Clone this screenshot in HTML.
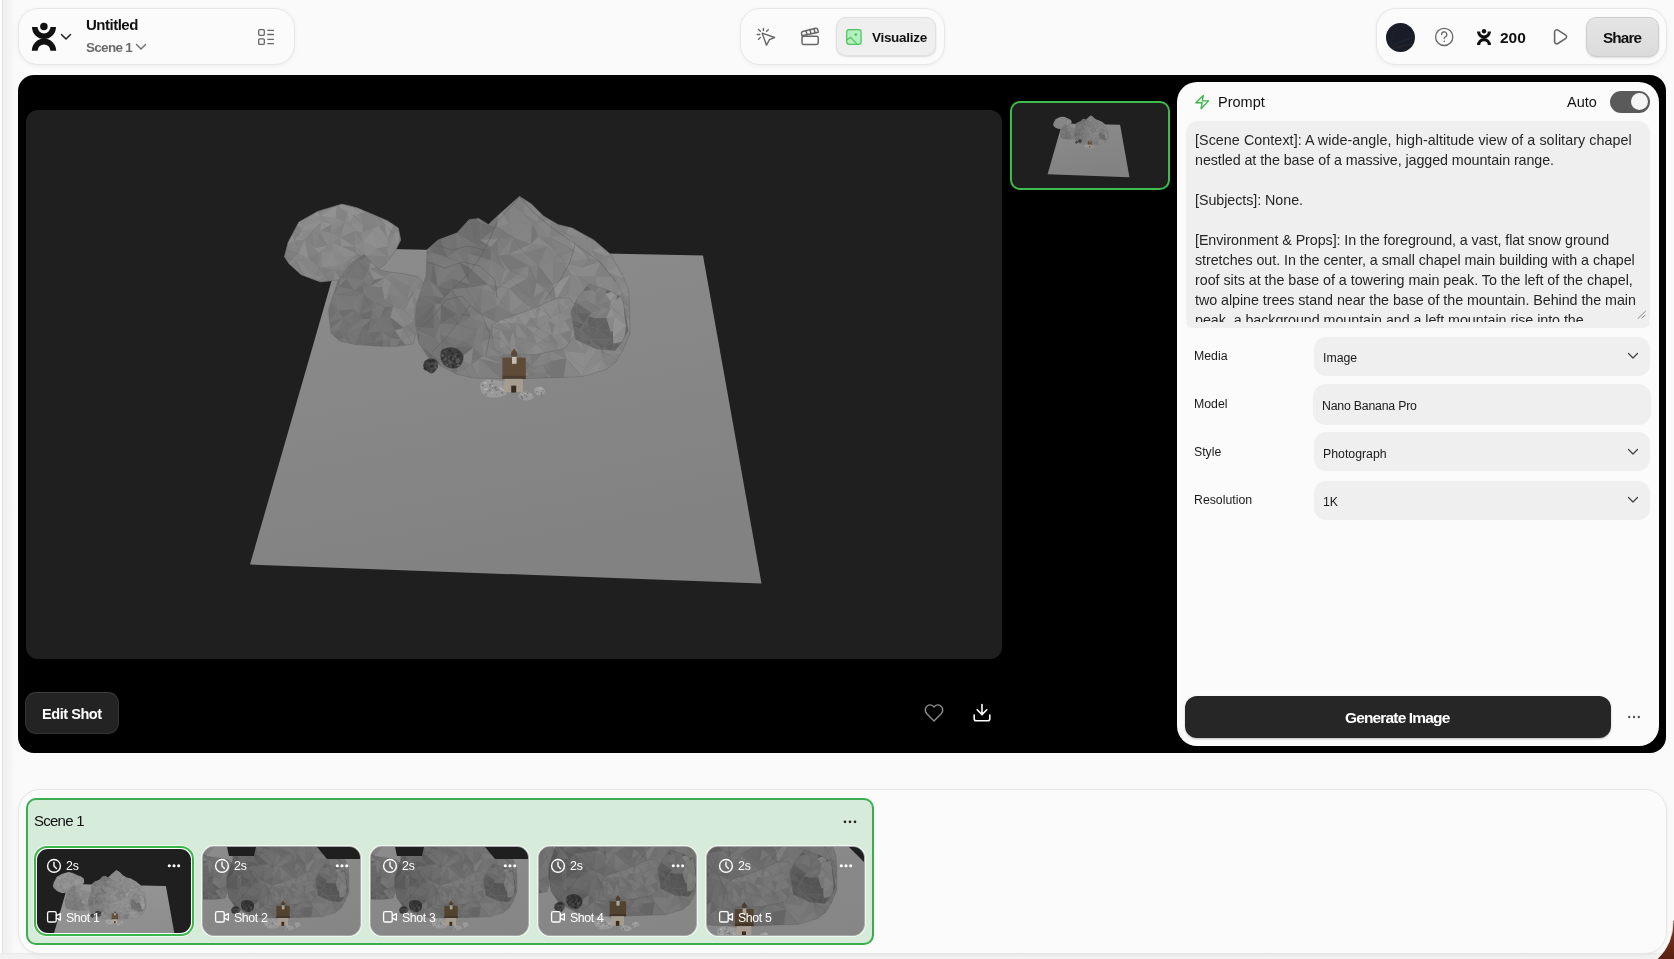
<!DOCTYPE html>
<html><head><meta charset="utf-8">
<style>
*{box-sizing:border-box;margin:0;padding:0}
html,body{width:1674px;height:959px;overflow:hidden;background:#fafafa;font-family:"Liberation Sans",sans-serif;color:#111}
.a{position:absolute;white-space:pre;line-height:1;will-change:transform}
.panel{position:absolute;background:#fbfbfb;border:1px solid #e7e7e7;border-radius:20px;box-shadow:0 1px 4px rgba(0,0,0,.05)}
.sel{position:absolute;left:1314px;width:336px;height:39px;background:#efefef;border-radius:12px}
.lbl{will-change:transform;position:absolute;left:1194px;font-size:12.3px;color:#1a1a1a;line-height:1;margin-top:-1px}
.val{will-change:transform;position:absolute;left:1323px;font-size:12.3px;color:#1a1a1a;line-height:1}
.pt{will-change:transform;position:absolute;left:1195px;font-size:14.3px;color:#262626;white-space:pre;line-height:1}
.shot{position:absolute;top:846px;width:159px;height:90px;border-radius:12px;overflow:hidden;border:1px solid #a8a8a8;background:#888;box-shadow:0 0 0 1px rgba(255,255,255,.6)}
.shot svg{position:absolute;left:0;top:0}
.st{will-change:transform;position:absolute;font-size:12.3px;color:#fff;line-height:1;white-space:pre}
</style></head>
<body>
<svg width="0" height="0" style="position:absolute">
<defs>
<g id="scene">
<linearGradient id="gplane" x1="0" y1="0" x2="0.3" y2="1"><stop offset="0" stop-color="#8c8c8c"/><stop offset="1" stop-color="#828282"/></linearGradient>
<polygon points="341,248 703,255.5 761.5,583.5 250,564.5" fill="url(#gplane)"/>
<clipPath id="cl1"><polygon points="284.4,256.8 288.0,242.4 298.8,222.0 318.0,211.2 342.0,204.0 356.4,207.6 370.8,213.6 387.6,220.8 398.4,228.0 400.8,240.0 394.8,252.0 385.2,264.0 375.6,271.2 354.0,278.4 320.4,282.0 301.2,274.8 289.2,264.0"/></clipPath>
<g clip-path="url(#cl1)">
<polygon points="284.4,256.8 288.0,242.4 298.8,222.0 318.0,211.2 342.0,204.0 356.4,207.6 370.8,213.6 387.6,220.8 398.4,228.0 400.8,240.0 394.8,252.0 385.2,264.0 375.6,271.2 354.0,278.4 320.4,282.0 301.2,274.8 289.2,264.0" fill="#888888"/>
<path d="M272.8 190.9L285.8 190.2L284.8 200.1Z" fill="#8d8d8d"/>
<path d="M272.8 190.9L284.8 200.1L275.7 202.9Z" fill="#8c8c8c"/>
<path d="M285.8 190.2L294.7 192.8L290.4 201.4Z" fill="#8a8a8a"/>
<path d="M285.8 190.2L290.4 201.4L284.8 200.1Z" fill="#8c8c8c"/>
<path d="M294.7 192.8L300.4 194.1L290.4 201.4Z" fill="#929292"/>
<path d="M300.4 194.1L306.0 203.3L290.4 201.4Z" fill="#8c8c8c"/>
<path d="M300.4 194.1L310.2 193.4L312.7 204.8Z" fill="#949494"/>
<path d="M300.4 194.1L312.7 204.8L306.0 203.3Z" fill="#939393"/>
<path d="M310.2 193.4L320.5 190.3L312.7 204.8Z" fill="#878787"/>
<path d="M320.5 190.3L324.0 202.2L312.7 204.8Z" fill="#8c8c8c"/>
<path d="M320.5 190.3L333.7 196.9L337.0 205.8Z" fill="#898989"/>
<path d="M320.5 190.3L337.0 205.8L324.0 202.2Z" fill="#919191"/>
<path d="M333.7 196.9L341.0 191.5L337.0 205.8Z" fill="#8c8c8c"/>
<path d="M341.0 191.5L342.1 204.7L337.0 205.8Z" fill="#848484"/>
<path d="M341.0 191.5L355.5 198.0L342.1 204.7Z" fill="#8c8c8c"/>
<path d="M355.5 198.0L354.6 207.4L342.1 204.7Z" fill="#868686"/>
<path d="M355.5 198.0L365.1 193.1L354.6 207.4Z" fill="#8b8b8b"/>
<path d="M365.1 193.1L366.5 202.1L354.6 207.4Z" fill="#868686"/>
<path d="M365.1 193.1L378.7 189.9L378.7 200.6Z" fill="#888888"/>
<path d="M365.1 193.1L378.7 200.6L366.5 202.1Z" fill="#929292"/>
<path d="M378.7 189.9L387.6 192.1L383.7 206.3Z" fill="#929292"/>
<path d="M378.7 189.9L383.7 206.3L378.7 200.6Z" fill="#8c8c8c"/>
<path d="M387.6 192.1L391.2 190.6L383.7 206.3Z" fill="#858585"/>
<path d="M391.2 190.6L391.3 203.9L383.7 206.3Z" fill="#949494"/>
<path d="M391.2 190.6L402.7 196.8L391.3 203.9Z" fill="#878787"/>
<path d="M402.7 196.8L400.3 205.5L391.3 203.9Z" fill="#898989"/>
<path d="M402.7 196.8L411.5 194.7L416.8 204.7Z" fill="#898989"/>
<path d="M402.7 196.8L416.8 204.7L400.3 205.5Z" fill="#8a8a8a"/>
<path d="M275.7 202.9L284.8 200.1L277.8 212.3Z" fill="#8c8c8c"/>
<path d="M284.8 200.1L286.2 214.8L277.8 212.3Z" fill="#939393"/>
<path d="M284.8 200.1L290.4 201.4L286.2 214.8Z" fill="#8c8c8c"/>
<path d="M290.4 201.4L295.1 213.6L286.2 214.8Z" fill="#919191"/>
<path d="M290.4 201.4L306.0 203.3L295.1 213.6Z" fill="#888888"/>
<path d="M306.0 203.3L307.5 218.0L295.1 213.6Z" fill="#8b8b8b"/>
<path d="M306.0 203.3L312.7 204.8L314.2 215.5Z" fill="#838383"/>
<path d="M306.0 203.3L314.2 215.5L307.5 218.0Z" fill="#8a8a8a"/>
<path d="M312.7 204.8L324.0 202.2L320.4 215.8Z" fill="#838383"/>
<path d="M312.7 204.8L320.4 215.8L314.2 215.5Z" fill="#929292"/>
<path d="M324.0 202.2L337.0 205.8L320.4 215.8Z" fill="#898989"/>
<path d="M337.0 205.8L335.7 218.4L320.4 215.8Z" fill="#929292"/>
<path d="M337.0 205.8L342.1 204.7L347.3 212.1Z" fill="#919191"/>
<path d="M337.0 205.8L347.3 212.1L335.7 218.4Z" fill="#858585"/>
<path d="M342.1 204.7L354.6 207.4L347.3 212.1Z" fill="#909090"/>
<path d="M354.6 207.4L353.4 215.5L347.3 212.1Z" fill="#929292"/>
<path d="M354.6 207.4L366.5 202.1L353.4 215.5Z" fill="#8f8f8f"/>
<path d="M366.5 202.1L360.1 213.7L353.4 215.5Z" fill="#939393"/>
<path d="M366.5 202.1L378.7 200.6L371.4 210.6Z" fill="#898989"/>
<path d="M366.5 202.1L371.4 210.6L360.1 213.7Z" fill="#8a8a8a"/>
<path d="M378.7 200.6L383.7 206.3L380.4 216.4Z" fill="#878787"/>
<path d="M378.7 200.6L380.4 216.4L371.4 210.6Z" fill="#8f8f8f"/>
<path d="M383.7 206.3L391.3 203.9L380.4 216.4Z" fill="#848484"/>
<path d="M391.3 203.9L391.1 211.7L380.4 216.4Z" fill="#878787"/>
<path d="M391.3 203.9L400.3 205.5L403.4 217.3Z" fill="#8b8b8b"/>
<path d="M391.3 203.9L403.4 217.3L391.1 211.7Z" fill="#909090"/>
<path d="M400.3 205.5L416.8 204.7L410.6 213.5Z" fill="#858585"/>
<path d="M400.3 205.5L410.6 213.5L403.4 217.3Z" fill="#8e8e8e"/>
<path d="M277.8 212.3L286.2 214.8L274.8 227.5Z" fill="#8b8b8b"/>
<path d="M286.2 214.8L287.3 227.3L274.8 227.5Z" fill="#888888"/>
<path d="M286.2 214.8L295.1 213.6L287.3 227.3Z" fill="#838383"/>
<path d="M295.1 213.6L292.4 223.2L287.3 227.3Z" fill="#8f8f8f"/>
<path d="M295.1 213.6L307.5 218.0L303.1 227.5Z" fill="#898989"/>
<path d="M295.1 213.6L303.1 227.5L292.4 223.2Z" fill="#8f8f8f"/>
<path d="M307.5 218.0L314.2 215.5L318.5 220.9Z" fill="#8d8d8d"/>
<path d="M307.5 218.0L318.5 220.9L303.1 227.5Z" fill="#8b8b8b"/>
<path d="M314.2 215.5L320.4 215.8L318.5 220.9Z" fill="#8c8c8c"/>
<path d="M320.4 215.8L321.5 221.6L318.5 220.9Z" fill="#898989"/>
<path d="M320.4 215.8L335.7 218.4L332.0 223.9Z" fill="#8b8b8b"/>
<path d="M320.4 215.8L332.0 223.9L321.5 221.6Z" fill="#878787"/>
<path d="M335.7 218.4L347.3 212.1L345.2 221.9Z" fill="#828282"/>
<path d="M335.7 218.4L345.2 221.9L332.0 223.9Z" fill="#8b8b8b"/>
<path d="M347.3 212.1L353.4 215.5L349.9 223.3Z" fill="#919191"/>
<path d="M347.3 212.1L349.9 223.3L345.2 221.9Z" fill="#8a8a8a"/>
<path d="M353.4 215.5L360.1 213.7L349.9 223.3Z" fill="#888888"/>
<path d="M360.1 213.7L363.2 224.6L349.9 223.3Z" fill="#888888"/>
<path d="M360.1 213.7L371.4 210.6L363.2 224.6Z" fill="#828282"/>
<path d="M371.4 210.6L378.5 225.7L363.2 224.6Z" fill="#838383"/>
<path d="M371.4 210.6L380.4 216.4L384.5 225.1Z" fill="#848484"/>
<path d="M371.4 210.6L384.5 225.1L378.5 225.7Z" fill="#858585"/>
<path d="M380.4 216.4L391.1 211.7L396.0 220.0Z" fill="#838383"/>
<path d="M380.4 216.4L396.0 220.0L384.5 225.1Z" fill="#8d8d8d"/>
<path d="M391.1 211.7L403.4 217.3L408.0 226.5Z" fill="#8b8b8b"/>
<path d="M391.1 211.7L408.0 226.5L396.0 220.0Z" fill="#898989"/>
<path d="M403.4 217.3L410.6 213.5L417.8 226.7Z" fill="#929292"/>
<path d="M403.4 217.3L417.8 226.7L408.0 226.5Z" fill="#858585"/>
<path d="M274.8 227.5L287.3 227.3L273.4 233.1Z" fill="#8c8c8c"/>
<path d="M287.3 227.3L280.8 235.2L273.4 233.1Z" fill="#8a8a8a"/>
<path d="M287.3 227.3L292.4 223.2L280.8 235.2Z" fill="#8f8f8f"/>
<path d="M292.4 223.2L290.5 230.1L280.8 235.2Z" fill="#848484"/>
<path d="M292.4 223.2L303.1 227.5L301.8 231.0Z" fill="#858585"/>
<path d="M292.4 223.2L301.8 231.0L290.5 230.1Z" fill="#818181"/>
<path d="M303.1 227.5L318.5 220.9L301.8 231.0Z" fill="#919191"/>
<path d="M318.5 220.9L313.0 230.0L301.8 231.0Z" fill="#8e8e8e"/>
<path d="M318.5 220.9L321.5 221.6L313.0 230.0Z" fill="#919191"/>
<path d="M321.5 221.6L319.9 230.9L313.0 230.0Z" fill="#848484"/>
<path d="M321.5 221.6L332.0 223.9L319.9 230.9Z" fill="#919191"/>
<path d="M332.0 223.9L330.8 232.8L319.9 230.9Z" fill="#808080"/>
<path d="M332.0 223.9L345.2 221.9L330.8 232.8Z" fill="#888888"/>
<path d="M345.2 221.9L340.1 237.4L330.8 232.8Z" fill="#828282"/>
<path d="M345.2 221.9L349.9 223.3L355.4 230.8Z" fill="#858585"/>
<path d="M345.2 221.9L355.4 230.8L340.1 237.4Z" fill="#8b8b8b"/>
<path d="M349.9 223.3L363.2 224.6L355.4 230.8Z" fill="#8d8d8d"/>
<path d="M363.2 224.6L362.2 232.6L355.4 230.8Z" fill="#8e8e8e"/>
<path d="M363.2 224.6L378.5 225.7L362.2 232.6Z" fill="#808080"/>
<path d="M378.5 225.7L373.2 230.6L362.2 232.6Z" fill="#878787"/>
<path d="M378.5 225.7L384.5 225.1L387.5 238.4Z" fill="#808080"/>
<path d="M378.5 225.7L387.5 238.4L373.2 230.6Z" fill="#8e8e8e"/>
<path d="M384.5 225.1L396.0 220.0L387.5 238.4Z" fill="#909090"/>
<path d="M396.0 220.0L394.1 233.9L387.5 238.4Z" fill="#828282"/>
<path d="M396.0 220.0L408.0 226.5L394.1 233.9Z" fill="#838383"/>
<path d="M408.0 226.5L400.7 230.4L394.1 233.9Z" fill="#8f8f8f"/>
<path d="M408.0 226.5L417.8 226.7L413.0 231.9Z" fill="#828282"/>
<path d="M408.0 226.5L413.0 231.9L400.7 230.4Z" fill="#888888"/>
<path d="M273.4 233.1L280.8 235.2L280.1 248.1Z" fill="#858585"/>
<path d="M273.4 233.1L280.1 248.1L277.4 241.0Z" fill="#868686"/>
<path d="M280.8 235.2L290.5 230.1L280.1 248.1Z" fill="#8d8d8d"/>
<path d="M290.5 230.1L294.7 240.8L280.1 248.1Z" fill="#8e8e8e"/>
<path d="M290.5 230.1L301.8 231.0L294.7 240.8Z" fill="#828282"/>
<path d="M301.8 231.0L304.8 239.7L294.7 240.8Z" fill="#8e8e8e"/>
<path d="M301.8 231.0L313.0 230.0L304.8 239.7Z" fill="#898989"/>
<path d="M313.0 230.0L314.7 248.3L304.8 239.7Z" fill="#808080"/>
<path d="M313.0 230.0L319.9 230.9L314.7 248.3Z" fill="#858585"/>
<path d="M319.9 230.9L327.7 245.8L314.7 248.3Z" fill="#818181"/>
<path d="M319.9 230.9L330.8 232.8L327.7 245.8Z" fill="#898989"/>
<path d="M330.8 232.8L332.3 242.8L327.7 245.8Z" fill="#878787"/>
<path d="M330.8 232.8L340.1 237.4L332.3 242.8Z" fill="#888888"/>
<path d="M340.1 237.4L341.4 246.4L332.3 242.8Z" fill="#838383"/>
<path d="M340.1 237.4L355.4 230.8L354.7 246.5Z" fill="#808080"/>
<path d="M340.1 237.4L354.7 246.5L341.4 246.4Z" fill="#8d8d8d"/>
<path d="M355.4 230.8L362.2 232.6L362.9 241.5Z" fill="#838383"/>
<path d="M355.4 230.8L362.9 241.5L354.7 246.5Z" fill="#858585"/>
<path d="M362.2 232.6L373.2 230.6L362.9 241.5Z" fill="#898989"/>
<path d="M373.2 230.6L377.2 248.4L362.9 241.5Z" fill="#8f8f8f"/>
<path d="M373.2 230.6L387.5 238.4L387.6 246.8Z" fill="#8d8d8d"/>
<path d="M373.2 230.6L387.6 246.8L377.2 248.4Z" fill="#8d8d8d"/>
<path d="M387.5 238.4L394.1 233.9L387.6 246.8Z" fill="#858585"/>
<path d="M394.1 233.9L397.3 246.2L387.6 246.8Z" fill="#888888"/>
<path d="M394.1 233.9L400.7 230.4L397.3 246.2Z" fill="#8e8e8e"/>
<path d="M400.7 230.4L401.9 244.2L397.3 246.2Z" fill="#7f7f7f"/>
<path d="M400.7 230.4L413.0 231.9L413.1 239.8Z" fill="#828282"/>
<path d="M400.7 230.4L413.1 239.8L401.9 244.2Z" fill="#8f8f8f"/>
<path d="M277.4 241.0L280.1 248.1L270.2 252.0Z" fill="#8c8c8c"/>
<path d="M280.1 248.1L282.2 255.7L270.2 252.0Z" fill="#858585"/>
<path d="M280.1 248.1L294.7 240.8L298.5 253.5Z" fill="#848484"/>
<path d="M280.1 248.1L298.5 253.5L282.2 255.7Z" fill="#7f7f7f"/>
<path d="M294.7 240.8L304.8 239.7L298.5 253.5Z" fill="#828282"/>
<path d="M304.8 239.7L308.3 258.4L298.5 253.5Z" fill="#8e8e8e"/>
<path d="M304.8 239.7L314.7 248.3L318.5 252.8Z" fill="#898989"/>
<path d="M304.8 239.7L318.5 252.8L308.3 258.4Z" fill="#828282"/>
<path d="M314.7 248.3L327.7 245.8L318.5 252.8Z" fill="#8e8e8e"/>
<path d="M327.7 245.8L321.9 251.5L318.5 252.8Z" fill="#868686"/>
<path d="M327.7 245.8L332.3 242.8L321.9 251.5Z" fill="#898989"/>
<path d="M332.3 242.8L331.7 251.3L321.9 251.5Z" fill="#858585"/>
<path d="M332.3 242.8L341.4 246.4L345.5 257.6Z" fill="#8d8d8d"/>
<path d="M332.3 242.8L345.5 257.6L331.7 251.3Z" fill="#8a8a8a"/>
<path d="M341.4 246.4L354.7 246.5L357.5 253.8Z" fill="#7e7e7e"/>
<path d="M341.4 246.4L357.5 253.8L345.5 257.6Z" fill="#8c8c8c"/>
<path d="M354.7 246.5L362.9 241.5L357.5 253.8Z" fill="#8a8a8a"/>
<path d="M362.9 241.5L365.8 256.7L357.5 253.8Z" fill="#878787"/>
<path d="M362.9 241.5L377.2 248.4L365.8 256.7Z" fill="#8b8b8b"/>
<path d="M377.2 248.4L370.7 255.4L365.8 256.7Z" fill="#888888"/>
<path d="M377.2 248.4L387.6 246.8L388.1 256.5Z" fill="#818181"/>
<path d="M377.2 248.4L388.1 256.5L370.7 255.4Z" fill="#878787"/>
<path d="M387.6 246.8L397.3 246.2L396.7 253.8Z" fill="#888888"/>
<path d="M387.6 246.8L396.7 253.8L388.1 256.5Z" fill="#898989"/>
<path d="M397.3 246.2L401.9 244.2L401.5 256.6Z" fill="#848484"/>
<path d="M397.3 246.2L401.5 256.6L396.7 253.8Z" fill="#7d7d7d"/>
<path d="M401.9 244.2L413.1 239.8L401.5 256.6Z" fill="#878787"/>
<path d="M413.1 239.8L412.9 256.7L401.5 256.6Z" fill="#858585"/>
<path d="M270.2 252.0L282.2 255.7L283.5 268.0Z" fill="#898989"/>
<path d="M270.2 252.0L283.5 268.0L278.6 263.1Z" fill="#888888"/>
<path d="M282.2 255.7L298.5 253.5L283.5 268.0Z" fill="#7e7e7e"/>
<path d="M298.5 253.5L296.4 261.0L283.5 268.0Z" fill="#878787"/>
<path d="M298.5 253.5L308.3 258.4L296.4 261.0Z" fill="#858585"/>
<path d="M308.3 258.4L301.0 260.9L296.4 261.0Z" fill="#7d7d7d"/>
<path d="M308.3 258.4L318.5 252.8L318.0 266.8Z" fill="#7d7d7d"/>
<path d="M308.3 258.4L318.0 266.8L301.0 260.9Z" fill="#858585"/>
<path d="M318.5 252.8L321.9 251.5L318.0 266.8Z" fill="#818181"/>
<path d="M321.9 251.5L321.2 266.9L318.0 266.8Z" fill="#838383"/>
<path d="M321.9 251.5L331.7 251.3L321.2 266.9Z" fill="#8a8a8a"/>
<path d="M331.7 251.3L338.7 265.4L321.2 266.9Z" fill="#8c8c8c"/>
<path d="M331.7 251.3L345.5 257.6L343.1 264.4Z" fill="#888888"/>
<path d="M331.7 251.3L343.1 264.4L338.7 265.4Z" fill="#898989"/>
<path d="M345.5 257.6L357.5 253.8L343.1 264.4Z" fill="#888888"/>
<path d="M357.5 253.8L351.1 259.6L343.1 264.4Z" fill="#828282"/>
<path d="M357.5 253.8L365.8 256.7L351.1 259.6Z" fill="#7e7e7e"/>
<path d="M365.8 256.7L368.6 265.3L351.1 259.6Z" fill="#898989"/>
<path d="M365.8 256.7L370.7 255.4L374.6 267.9Z" fill="#808080"/>
<path d="M365.8 256.7L374.6 267.9L368.6 265.3Z" fill="#858585"/>
<path d="M370.7 255.4L388.1 256.5L383.8 267.3Z" fill="#808080"/>
<path d="M370.7 255.4L383.8 267.3L374.6 267.9Z" fill="#818181"/>
<path d="M388.1 256.5L396.7 253.8L397.3 261.4Z" fill="#878787"/>
<path d="M388.1 256.5L397.3 261.4L383.8 267.3Z" fill="#858585"/>
<path d="M396.7 253.8L401.5 256.6L402.2 262.1Z" fill="#858585"/>
<path d="M396.7 253.8L402.2 262.1L397.3 261.4Z" fill="#888888"/>
<path d="M401.5 256.6L412.9 256.7L402.2 262.1Z" fill="#868686"/>
<path d="M412.9 256.7L412.1 264.8L402.2 262.1Z" fill="#8b8b8b"/>
<path d="M278.6 263.1L283.5 268.0L272.2 273.3Z" fill="#878787"/>
<path d="M283.5 268.0L281.1 277.7L272.2 273.3Z" fill="#7e7e7e"/>
<path d="M283.5 268.0L296.4 261.0L293.1 273.6Z" fill="#808080"/>
<path d="M283.5 268.0L293.1 273.6L281.1 277.7Z" fill="#7d7d7d"/>
<path d="M296.4 261.0L301.0 260.9L305.2 277.6Z" fill="#8a8a8a"/>
<path d="M296.4 261.0L305.2 277.6L293.1 273.6Z" fill="#828282"/>
<path d="M301.0 260.9L318.0 266.8L313.7 277.8Z" fill="#858585"/>
<path d="M301.0 260.9L313.7 277.8L305.2 277.6Z" fill="#898989"/>
<path d="M318.0 266.8L321.2 266.9L324.4 274.3Z" fill="#818181"/>
<path d="M318.0 266.8L324.4 274.3L313.7 277.8Z" fill="#828282"/>
<path d="M321.2 266.9L338.7 265.4L334.6 269.7Z" fill="#858585"/>
<path d="M321.2 266.9L334.6 269.7L324.4 274.3Z" fill="#7d7d7d"/>
<path d="M338.7 265.4L343.1 264.4L343.9 271.1Z" fill="#868686"/>
<path d="M338.7 265.4L343.9 271.1L334.6 269.7Z" fill="#838383"/>
<path d="M343.1 264.4L351.1 259.6L343.9 271.1Z" fill="#828282"/>
<path d="M351.1 259.6L349.9 276.7L343.9 271.1Z" fill="#7b7b7b"/>
<path d="M351.1 259.6L368.6 265.3L349.9 276.7Z" fill="#888888"/>
<path d="M368.6 265.3L361.5 273.8L349.9 276.7Z" fill="#878787"/>
<path d="M368.6 265.3L374.6 267.9L376.4 274.5Z" fill="#8b8b8b"/>
<path d="M368.6 265.3L376.4 274.5L361.5 273.8Z" fill="#818181"/>
<path d="M374.6 267.9L383.8 267.3L382.8 274.2Z" fill="#858585"/>
<path d="M374.6 267.9L382.8 274.2L376.4 274.5Z" fill="#7c7c7c"/>
<path d="M383.8 267.3L397.3 261.4L394.9 276.6Z" fill="#868686"/>
<path d="M383.8 267.3L394.9 276.6L382.8 274.2Z" fill="#7f7f7f"/>
<path d="M397.3 261.4L402.2 262.1L394.9 276.6Z" fill="#8b8b8b"/>
<path d="M402.2 262.1L400.9 274.5L394.9 276.6Z" fill="#818181"/>
<path d="M402.2 262.1L412.1 264.8L412.1 272.0Z" fill="#838383"/>
<path d="M402.2 262.1L412.1 272.0L400.9 274.5Z" fill="#878787"/>
<path d="M272.2 273.3L281.1 277.7L285.0 286.3Z" fill="#888888"/>
<path d="M272.2 273.3L285.0 286.3L276.9 284.1Z" fill="#878787"/>
<path d="M281.1 277.7L293.1 273.6L285.0 286.3Z" fill="#7a7a7a"/>
<path d="M293.1 273.6L298.1 283.5L285.0 286.3Z" fill="#7e7e7e"/>
<path d="M293.1 273.6L305.2 277.6L305.4 284.0Z" fill="#898989"/>
<path d="M293.1 273.6L305.4 284.0L298.1 283.5Z" fill="#898989"/>
<path d="M305.2 277.6L313.7 277.8L314.5 285.7Z" fill="#868686"/>
<path d="M305.2 277.6L314.5 285.7L305.4 284.0Z" fill="#898989"/>
<path d="M313.7 277.8L324.4 274.3L314.5 285.7Z" fill="#888888"/>
<path d="M324.4 274.3L324.0 284.3L314.5 285.7Z" fill="#818181"/>
<path d="M324.4 274.3L334.6 269.7L324.0 284.3Z" fill="#818181"/>
<path d="M334.6 269.7L334.2 288.0L324.0 284.3Z" fill="#7e7e7e"/>
<path d="M334.6 269.7L343.9 271.1L346.2 287.4Z" fill="#7d7d7d"/>
<path d="M334.6 269.7L346.2 287.4L334.2 288.0Z" fill="#888888"/>
<path d="M343.9 271.1L349.9 276.7L358.4 281.8Z" fill="#7b7b7b"/>
<path d="M343.9 271.1L358.4 281.8L346.2 287.4Z" fill="#7a7a7a"/>
<path d="M349.9 276.7L361.5 273.8L358.4 281.8Z" fill="#818181"/>
<path d="M361.5 273.8L364.9 288.0L358.4 281.8Z" fill="#7b7b7b"/>
<path d="M361.5 273.8L376.4 274.5L364.9 288.0Z" fill="#838383"/>
<path d="M376.4 274.5L377.5 280.7L364.9 288.0Z" fill="#7e7e7e"/>
<path d="M376.4 274.5L382.8 274.2L377.5 280.7Z" fill="#8a8a8a"/>
<path d="M382.8 274.2L381.0 283.5L377.5 280.7Z" fill="#878787"/>
<path d="M382.8 274.2L394.9 276.6L381.0 283.5Z" fill="#7d7d7d"/>
<path d="M394.9 276.6L390.6 281.7L381.0 283.5Z" fill="#7d7d7d"/>
<path d="M394.9 276.6L400.9 274.5L400.6 285.5Z" fill="#8a8a8a"/>
<path d="M394.9 276.6L400.6 285.5L390.6 281.7Z" fill="#808080"/>
<path d="M400.9 274.5L412.1 272.0L417.0 287.6Z" fill="#818181"/>
<path d="M400.9 274.5L417.0 287.6L400.6 285.5Z" fill="#797979"/>
<path d="M276.9 284.1L285.0 286.3L285.8 290.8Z" fill="#828282"/>
<path d="M276.9 284.1L285.8 290.8L271.3 295.9Z" fill="#868686"/>
<path d="M285.0 286.3L298.1 283.5L297.8 298.2Z" fill="#838383"/>
<path d="M285.0 286.3L297.8 298.2L285.8 290.8Z" fill="#7f7f7f"/>
<path d="M298.1 283.5L305.4 284.0L301.9 298.1Z" fill="#808080"/>
<path d="M298.1 283.5L301.9 298.1L297.8 298.2Z" fill="#7f7f7f"/>
<path d="M305.4 284.0L314.5 285.7L313.5 293.9Z" fill="#868686"/>
<path d="M305.4 284.0L313.5 293.9L301.9 298.1Z" fill="#818181"/>
<path d="M314.5 285.7L324.0 284.3L328.8 297.0Z" fill="#7f7f7f"/>
<path d="M314.5 285.7L328.8 297.0L313.5 293.9Z" fill="#878787"/>
<path d="M324.0 284.3L334.2 288.0L328.8 297.0Z" fill="#868686"/>
<path d="M334.2 288.0L331.4 293.4L328.8 297.0Z" fill="#7a7a7a"/>
<path d="M334.2 288.0L346.2 287.4L344.5 292.6Z" fill="#868686"/>
<path d="M334.2 288.0L344.5 292.6L331.4 293.4Z" fill="#838383"/>
<path d="M346.2 287.4L358.4 281.8L351.7 292.4Z" fill="#7a7a7a"/>
<path d="M346.2 287.4L351.7 292.4L344.5 292.6Z" fill="#828282"/>
<path d="M358.4 281.8L364.9 288.0L351.7 292.4Z" fill="#848484"/>
<path d="M364.9 288.0L366.4 289.7L351.7 292.4Z" fill="#848484"/>
<path d="M364.9 288.0L377.5 280.7L374.9 293.5Z" fill="#828282"/>
<path d="M364.9 288.0L374.9 293.5L366.4 289.7Z" fill="#888888"/>
<path d="M377.5 280.7L381.0 283.5L380.1 292.5Z" fill="#888888"/>
<path d="M377.5 280.7L380.1 292.5L374.9 293.5Z" fill="#7f7f7f"/>
<path d="M381.0 283.5L390.6 281.7L395.5 294.1Z" fill="#7f7f7f"/>
<path d="M381.0 283.5L395.5 294.1L380.1 292.5Z" fill="#7f7f7f"/>
<path d="M390.6 281.7L400.6 285.5L400.5 298.4Z" fill="#818181"/>
<path d="M390.6 281.7L400.5 298.4L395.5 294.1Z" fill="#818181"/>
<path d="M400.6 285.5L417.0 287.6L417.0 298.2Z" fill="#878787"/>
<path d="M400.6 285.5L417.0 298.2L400.5 298.4Z" fill="#7d7d7d"/>
<g stroke="#5e5e5e" stroke-opacity="0.35" stroke-width="0.5" fill="none">
<path d="M300.4 194.1L312.7 204.8"/>
<path d="M333.7 196.9L342.1 204.7"/>
<path d="M341.0 191.5L354.6 207.4"/>
<path d="M387.6 192.1L391.3 203.9"/>
<path d="M275.7 202.9L286.2 214.8"/>
<path d="M284.8 200.1L295.1 213.6"/>
<path d="M290.4 201.4L307.5 218.0"/>
<path d="M306.0 203.3L314.2 215.5"/>
<path d="M312.7 204.8L320.4 215.8"/>
<path d="M354.6 207.4L360.1 213.7"/>
<path d="M400.3 205.5L410.6 213.5"/>
<path d="M277.8 212.3L287.3 227.3"/>
<path d="M286.2 214.8L292.4 223.2"/>
<path d="M353.4 215.5L363.2 224.6"/>
<path d="M371.4 210.6L384.5 225.1"/>
<path d="M391.1 211.7L408.0 226.5"/>
<path d="M287.3 227.3L290.5 230.1"/>
<path d="M321.5 221.6L330.8 232.8"/>
<path d="M384.5 225.1L394.1 233.9"/>
<path d="M396.0 220.0L400.7 230.4"/>
<path d="M408.0 226.5L413.0 231.9"/>
<path d="M290.5 230.1L304.8 239.7"/>
<path d="M313.0 230.0L327.7 245.8"/>
<path d="M355.4 230.8L362.9 241.5"/>
<path d="M400.7 230.4L413.1 239.8"/>
<path d="M280.1 248.1L298.5 253.5"/>
<path d="M354.7 246.5L365.8 256.7"/>
<path d="M377.2 248.4L388.1 256.5"/>
<path d="M397.3 246.2L401.5 256.6"/>
<path d="M270.2 252.0L283.5 268.0"/>
<path d="M282.2 255.7L296.4 261.0"/>
<path d="M357.5 253.8L368.6 265.3"/>
<path d="M401.5 256.6L412.1 264.8"/>
<path d="M283.5 268.0L293.1 273.6"/>
<path d="M296.4 261.0L305.2 277.6"/>
<path d="M318.0 266.8L324.4 274.3"/>
<path d="M351.1 259.6L361.5 273.8"/>
<path d="M368.6 265.3L376.4 274.5"/>
<path d="M397.3 261.4L400.9 274.5"/>
<path d="M305.2 277.6L314.5 285.7"/>
<path d="M313.7 277.8L324.0 284.3"/>
<path d="M324.4 274.3L334.2 288.0"/>
<path d="M334.6 269.7L346.2 287.4"/>
<path d="M343.9 271.1L358.4 281.8"/>
<path d="M361.5 273.8L377.5 280.7"/>
<path d="M376.4 274.5L381.0 283.5"/>
<path d="M382.8 274.2L390.6 281.7"/>
<path d="M400.9 274.5L417.0 287.6"/>
<path d="M276.9 284.1L285.8 290.8"/>
<path d="M285.0 286.3L297.8 298.2"/>
<path d="M298.1 283.5L301.9 298.1"/>
<path d="M324.0 284.3L331.4 293.4"/>
<path d="M346.2 287.4L351.7 292.4"/>
<path d="M358.4 281.8L366.4 289.7"/>
<path d="M377.5 280.7L380.1 292.5"/>
</g>
</g>
<polygon points="284.4,256.8 288.0,242.4 298.8,222.0 318.0,211.2 342.0,204.0 356.4,207.6 370.8,213.6 387.6,220.8 398.4,228.0 400.8,240.0 394.8,252.0 385.2,264.0 375.6,271.2 354.0,278.4 320.4,282.0 301.2,274.8 289.2,264.0" fill="none" stroke="#6a6a6a" stroke-width="0.7" stroke-opacity="0.8"/>
<clipPath id="cl2"><polygon points="328.5,309.5 333.0,296.0 338.0,281.0 346.0,270.0 354.0,261.0 364.5,254.5 371.0,262.0 380.0,270.0 389.5,272.0 403.0,273.5 417.7,276.7 428.7,287.6 425.5,301.7 417.7,309.5 416.5,322.0 416.0,333.0 413.0,344.0 395.0,346.5 375.0,346.0 355.0,344.5 339.5,341.0 331.0,333.0 329.5,321.0"/></clipPath>
<g clip-path="url(#cl2)">
<polygon points="328.5,309.5 333.0,296.0 338.0,281.0 346.0,270.0 354.0,261.0 364.5,254.5 371.0,262.0 380.0,270.0 389.5,272.0 403.0,273.5 417.7,276.7 428.7,287.6 425.5,301.7 417.7,309.5 416.5,322.0 416.0,333.0 413.0,344.0 395.0,346.5 375.0,346.0 355.0,344.5 339.5,341.0 331.0,333.0 329.5,321.0" fill="#7e7e7e"/>
<path d="M314.9 239.0L329.5 246.7L318.7 250.3Z" fill="#6d6d6d"/>
<path d="M329.5 246.7L323.9 254.5L318.7 250.3Z" fill="#6d6d6d"/>
<path d="M329.5 246.7L336.5 239.3L339.3 253.6Z" fill="#747474"/>
<path d="M329.5 246.7L339.3 253.6L323.9 254.5Z" fill="#767676"/>
<path d="M336.5 239.3L350.6 240.3L339.3 253.6Z" fill="#797979"/>
<path d="M350.6 240.3L353.4 256.1L339.3 253.6Z" fill="#6f6f6f"/>
<path d="M350.6 240.3L362.5 246.2L353.4 256.1Z" fill="#727272"/>
<path d="M362.5 246.2L358.1 254.8L353.4 256.1Z" fill="#717171"/>
<path d="M362.5 246.2L374.1 238.6L374.0 253.5Z" fill="#7f7f7f"/>
<path d="M362.5 246.2L374.0 253.5L358.1 254.8Z" fill="#7f7f7f"/>
<path d="M374.1 238.6L384.9 245.6L374.0 253.5Z" fill="#818181"/>
<path d="M384.9 245.6L381.2 259.3L374.0 253.5Z" fill="#878787"/>
<path d="M384.9 245.6L393.0 238.9L381.2 259.3Z" fill="#7c7c7c"/>
<path d="M393.0 238.9L396.2 253.7L381.2 259.3Z" fill="#7c7c7c"/>
<path d="M393.0 238.9L403.9 239.0L401.1 256.9Z" fill="#7d7d7d"/>
<path d="M393.0 238.9L401.1 256.9L396.2 253.7Z" fill="#7e7e7e"/>
<path d="M403.9 239.0L421.4 238.9L401.1 256.9Z" fill="#7e7e7e"/>
<path d="M421.4 238.9L420.3 253.6L401.1 256.9Z" fill="#878787"/>
<path d="M421.4 238.9L429.8 247.6L422.7 257.1Z" fill="#7e7e7e"/>
<path d="M421.4 238.9L422.7 257.1L420.3 253.6Z" fill="#888888"/>
<path d="M429.8 247.6L441.6 246.7L441.5 255.9Z" fill="#828282"/>
<path d="M429.8 247.6L441.5 255.9L422.7 257.1Z" fill="#828282"/>
<path d="M441.6 246.7L448.6 242.2L448.4 253.6Z" fill="#7d7d7d"/>
<path d="M441.6 246.7L448.4 253.6L441.5 255.9Z" fill="#7e7e7e"/>
<path d="M318.7 250.3L323.9 254.5L321.9 264.8Z" fill="#757575"/>
<path d="M323.9 254.5L325.1 261.7L321.9 264.8Z" fill="#7b7b7b"/>
<path d="M323.9 254.5L339.3 253.6L335.4 266.3Z" fill="#6f6f6f"/>
<path d="M323.9 254.5L335.4 266.3L325.1 261.7Z" fill="#727272"/>
<path d="M339.3 253.6L353.4 256.1L349.2 268.2Z" fill="#767676"/>
<path d="M339.3 253.6L349.2 268.2L335.4 266.3Z" fill="#797979"/>
<path d="M353.4 256.1L358.1 254.8L357.8 261.1Z" fill="#777777"/>
<path d="M353.4 256.1L357.8 261.1L349.2 268.2Z" fill="#747474"/>
<path d="M358.1 254.8L374.0 253.5L357.8 261.1Z" fill="#6d6d6d"/>
<path d="M374.0 253.5L369.0 268.5L357.8 261.1Z" fill="#777777"/>
<path d="M374.0 253.5L381.2 259.3L369.0 268.5Z" fill="#8b8b8b"/>
<path d="M381.2 259.3L382.5 266.2L369.0 268.5Z" fill="#8a8a8a"/>
<path d="M381.2 259.3L396.2 253.7L382.5 266.2Z" fill="#7b7b7b"/>
<path d="M396.2 253.7L398.7 267.8L382.5 266.2Z" fill="#888888"/>
<path d="M396.2 253.7L401.1 256.9L402.2 264.0Z" fill="#8b8b8b"/>
<path d="M396.2 253.7L402.2 264.0L398.7 267.8Z" fill="#7e7e7e"/>
<path d="M401.1 256.9L420.3 253.6L413.2 262.3Z" fill="#7c7c7c"/>
<path d="M401.1 256.9L413.2 262.3L402.2 264.0Z" fill="#818181"/>
<path d="M420.3 253.6L422.7 257.1L413.2 262.3Z" fill="#7d7d7d"/>
<path d="M422.7 257.1L423.2 264.3L413.2 262.3Z" fill="#848484"/>
<path d="M422.7 257.1L441.5 255.9L441.0 268.4Z" fill="#7b7b7b"/>
<path d="M422.7 257.1L441.0 268.4L423.2 264.3Z" fill="#8b8b8b"/>
<path d="M441.5 255.9L448.4 253.6L452.5 263.5Z" fill="#7c7c7c"/>
<path d="M441.5 255.9L452.5 263.5L441.0 268.4Z" fill="#7b7b7b"/>
<path d="M321.9 264.8L325.1 261.7L332.6 274.7Z" fill="#6f6f6f"/>
<path d="M321.9 264.8L332.6 274.7L320.8 272.0Z" fill="#7b7b7b"/>
<path d="M325.1 261.7L335.4 266.3L332.6 274.7Z" fill="#717171"/>
<path d="M335.4 266.3L340.6 277.9L332.6 274.7Z" fill="#7b7b7b"/>
<path d="M335.4 266.3L349.2 268.2L340.6 277.9Z" fill="#7c7c7c"/>
<path d="M349.2 268.2L346.4 278.6L340.6 277.9Z" fill="#747474"/>
<path d="M349.2 268.2L357.8 261.1L346.4 278.6Z" fill="#717171"/>
<path d="M357.8 261.1L363.4 280.4L346.4 278.6Z" fill="#757575"/>
<path d="M357.8 261.1L369.0 268.5L363.4 280.4Z" fill="#737373"/>
<path d="M369.0 268.5L373.9 280.0L363.4 280.4Z" fill="#7b7b7b"/>
<path d="M369.0 268.5L382.5 266.2L384.7 277.6Z" fill="#7d7d7d"/>
<path d="M369.0 268.5L384.7 277.6L373.9 280.0Z" fill="#8a8a8a"/>
<path d="M382.5 266.2L398.7 267.8L384.7 277.6Z" fill="#7e7e7e"/>
<path d="M398.7 267.8L391.5 276.2L384.7 277.6Z" fill="#858585"/>
<path d="M398.7 267.8L402.2 264.0L406.1 272.0Z" fill="#878787"/>
<path d="M398.7 267.8L406.1 272.0L391.5 276.2Z" fill="#878787"/>
<path d="M402.2 264.0L413.2 262.3L406.1 272.0Z" fill="#7d7d7d"/>
<path d="M413.2 262.3L420.8 273.1L406.1 272.0Z" fill="#888888"/>
<path d="M413.2 262.3L423.2 264.3L420.8 273.1Z" fill="#7b7b7b"/>
<path d="M423.2 264.3L426.1 273.0L420.8 273.1Z" fill="#868686"/>
<path d="M423.2 264.3L441.0 268.4L443.2 279.6Z" fill="#838383"/>
<path d="M423.2 264.3L443.2 279.6L426.1 273.0Z" fill="#888888"/>
<path d="M441.0 268.4L452.5 263.5L443.2 279.6Z" fill="#8b8b8b"/>
<path d="M452.5 263.5L446.5 280.3L443.2 279.6Z" fill="#808080"/>
<path d="M320.8 272.0L332.6 274.7L330.2 285.8Z" fill="#737373"/>
<path d="M320.8 272.0L330.2 285.8L320.9 289.2Z" fill="#7a7a7a"/>
<path d="M332.6 274.7L340.6 277.9L338.4 287.1Z" fill="#6d6d6d"/>
<path d="M332.6 274.7L338.4 287.1L330.2 285.8Z" fill="#777777"/>
<path d="M340.6 277.9L346.4 278.6L338.4 287.1Z" fill="#7c7c7c"/>
<path d="M346.4 278.6L354.0 290.3L338.4 287.1Z" fill="#6f6f6f"/>
<path d="M346.4 278.6L363.4 280.4L354.0 290.3Z" fill="#7a7a7a"/>
<path d="M363.4 280.4L363.0 285.6L354.0 290.3Z" fill="#757575"/>
<path d="M363.4 280.4L373.9 280.0L370.0 286.4Z" fill="#7a7a7a"/>
<path d="M363.4 280.4L370.0 286.4L363.0 285.6Z" fill="#747474"/>
<path d="M373.9 280.0L384.7 277.6L370.0 286.4Z" fill="#707070"/>
<path d="M384.7 277.6L382.2 287.5L370.0 286.4Z" fill="#858585"/>
<path d="M384.7 277.6L391.5 276.2L391.3 282.6Z" fill="#828282"/>
<path d="M384.7 277.6L391.3 282.6L382.2 287.5Z" fill="#8b8b8b"/>
<path d="M391.5 276.2L406.1 272.0L410.3 287.2Z" fill="#848484"/>
<path d="M391.5 276.2L410.3 287.2L391.3 282.6Z" fill="#7f7f7f"/>
<path d="M406.1 272.0L420.8 273.1L410.3 287.2Z" fill="#828282"/>
<path d="M420.8 273.1L416.0 288.7L410.3 287.2Z" fill="#858585"/>
<path d="M420.8 273.1L426.1 273.0L416.0 288.7Z" fill="#868686"/>
<path d="M426.1 273.0L430.7 290.8L416.0 288.7Z" fill="#808080"/>
<path d="M426.1 273.0L443.2 279.6L441.6 286.5Z" fill="#818181"/>
<path d="M426.1 273.0L441.6 286.5L430.7 290.8Z" fill="#838383"/>
<path d="M443.2 279.6L446.5 280.3L441.6 286.5Z" fill="#7e7e7e"/>
<path d="M446.5 280.3L445.2 286.1L441.6 286.5Z" fill="#808080"/>
<path d="M320.9 289.2L330.2 285.8L316.2 301.5Z" fill="#6e6e6e"/>
<path d="M330.2 285.8L328.5 300.1L316.2 301.5Z" fill="#717171"/>
<path d="M330.2 285.8L338.4 287.1L335.0 294.8Z" fill="#6f6f6f"/>
<path d="M330.2 285.8L335.0 294.8L328.5 300.1Z" fill="#747474"/>
<path d="M338.4 287.1L354.0 290.3L335.0 294.8Z" fill="#787878"/>
<path d="M354.0 290.3L354.7 296.7L335.0 294.8Z" fill="#737373"/>
<path d="M354.0 290.3L363.0 285.6L363.7 294.3Z" fill="#6e6e6e"/>
<path d="M354.0 290.3L363.7 294.3L354.7 296.7Z" fill="#737373"/>
<path d="M363.0 285.6L370.0 286.4L375.0 302.4Z" fill="#777777"/>
<path d="M363.0 285.6L375.0 302.4L363.7 294.3Z" fill="#797979"/>
<path d="M370.0 286.4L382.2 287.5L385.0 301.3Z" fill="#777777"/>
<path d="M370.0 286.4L385.0 301.3L375.0 302.4Z" fill="#787878"/>
<path d="M382.2 287.5L391.3 282.6L385.0 301.3Z" fill="#8a8a8a"/>
<path d="M391.3 282.6L389.8 294.2L385.0 301.3Z" fill="#838383"/>
<path d="M391.3 282.6L410.3 287.2L406.6 300.4Z" fill="#7e7e7e"/>
<path d="M391.3 282.6L406.6 300.4L389.8 294.2Z" fill="#828282"/>
<path d="M410.3 287.2L416.0 288.7L406.6 300.4Z" fill="#868686"/>
<path d="M416.0 288.7L412.6 294.9L406.6 300.4Z" fill="#7a7a7a"/>
<path d="M416.0 288.7L430.7 290.8L412.6 294.9Z" fill="#878787"/>
<path d="M430.7 290.8L431.3 296.4L412.6 294.9Z" fill="#878787"/>
<path d="M430.7 290.8L441.6 286.5L431.3 296.4Z" fill="#818181"/>
<path d="M441.6 286.5L441.6 301.4L431.3 296.4Z" fill="#7f7f7f"/>
<path d="M441.6 286.5L445.2 286.1L441.6 301.4Z" fill="#888888"/>
<path d="M445.2 286.1L451.3 300.7L441.6 301.4Z" fill="#878787"/>
<path d="M316.2 301.5L328.5 300.1L329.6 307.0Z" fill="#6e6e6e"/>
<path d="M316.2 301.5L329.6 307.0L314.7 312.8Z" fill="#787878"/>
<path d="M328.5 300.1L335.0 294.8L337.8 310.6Z" fill="#777777"/>
<path d="M328.5 300.1L337.8 310.6L329.6 307.0Z" fill="#707070"/>
<path d="M335.0 294.8L354.7 296.7L354.5 309.1Z" fill="#787878"/>
<path d="M335.0 294.8L354.5 309.1L337.8 310.6Z" fill="#7a7a7a"/>
<path d="M354.7 296.7L363.7 294.3L359.1 314.1Z" fill="#787878"/>
<path d="M354.7 296.7L359.1 314.1L354.5 309.1Z" fill="#7b7b7b"/>
<path d="M363.7 294.3L375.0 302.4L359.1 314.1Z" fill="#707070"/>
<path d="M375.0 302.4L372.3 310.4L359.1 314.1Z" fill="#757575"/>
<path d="M375.0 302.4L385.0 301.3L372.3 310.4Z" fill="#777777"/>
<path d="M385.0 301.3L384.6 306.9L372.3 310.4Z" fill="#7a7a7a"/>
<path d="M385.0 301.3L389.8 294.2L384.6 306.9Z" fill="#7d7d7d"/>
<path d="M389.8 294.2L393.2 306.5L384.6 306.9Z" fill="#7b7b7b"/>
<path d="M389.8 294.2L406.6 300.4L404.5 310.9Z" fill="#808080"/>
<path d="M389.8 294.2L404.5 310.9L393.2 306.5Z" fill="#7f7f7f"/>
<path d="M406.6 300.4L412.6 294.9L404.5 310.9Z" fill="#808080"/>
<path d="M412.6 294.9L414.3 307.8L404.5 310.9Z" fill="#8a8a8a"/>
<path d="M412.6 294.9L431.3 296.4L426.3 312.4Z" fill="#888888"/>
<path d="M412.6 294.9L426.3 312.4L414.3 307.8Z" fill="#808080"/>
<path d="M431.3 296.4L441.6 301.4L426.3 312.4Z" fill="#8a8a8a"/>
<path d="M441.6 301.4L436.2 312.2L426.3 312.4Z" fill="#7a7a7a"/>
<path d="M441.6 301.4L451.3 300.7L436.2 312.2Z" fill="#858585"/>
<path d="M451.3 300.7L445.0 313.0L436.2 312.2Z" fill="#8a8a8a"/>
<path d="M314.7 312.8L329.6 307.0L328.7 322.4Z" fill="#797979"/>
<path d="M314.7 312.8L328.7 322.4L322.1 320.0Z" fill="#707070"/>
<path d="M329.6 307.0L337.8 310.6L328.7 322.4Z" fill="#707070"/>
<path d="M337.8 310.6L343.4 318.0L328.7 322.4Z" fill="#767676"/>
<path d="M337.8 310.6L354.5 309.1L343.4 318.0Z" fill="#6e6e6e"/>
<path d="M354.5 309.1L350.9 324.0L343.4 318.0Z" fill="#757575"/>
<path d="M354.5 309.1L359.1 314.1L350.9 324.0Z" fill="#727272"/>
<path d="M359.1 314.1L363.9 319.2L350.9 324.0Z" fill="#727272"/>
<path d="M359.1 314.1L372.3 310.4L371.3 319.2Z" fill="#6c6c6c"/>
<path d="M359.1 314.1L371.3 319.2L363.9 319.2Z" fill="#6a6a6a"/>
<path d="M372.3 310.4L384.6 306.9L380.0 318.8Z" fill="#787878"/>
<path d="M372.3 310.4L380.0 318.8L371.3 319.2Z" fill="#757575"/>
<path d="M384.6 306.9L393.2 306.5L380.0 318.8Z" fill="#6e6e6e"/>
<path d="M393.2 306.5L390.4 317.8L380.0 318.8Z" fill="#727272"/>
<path d="M393.2 306.5L404.5 310.9L406.6 325.0Z" fill="#868686"/>
<path d="M393.2 306.5L406.6 325.0L390.4 317.8Z" fill="#898989"/>
<path d="M404.5 310.9L414.3 307.8L406.6 325.0Z" fill="#868686"/>
<path d="M414.3 307.8L414.5 320.7L406.6 325.0Z" fill="#878787"/>
<path d="M414.3 307.8L426.3 312.4L425.6 325.1Z" fill="#7e7e7e"/>
<path d="M414.3 307.8L425.6 325.1L414.5 320.7Z" fill="#7b7b7b"/>
<path d="M426.3 312.4L436.2 312.2L425.6 325.1Z" fill="#7f7f7f"/>
<path d="M436.2 312.2L442.2 324.7L425.6 325.1Z" fill="#888888"/>
<path d="M436.2 312.2L445.0 313.0L442.2 324.7Z" fill="#808080"/>
<path d="M445.0 313.0L453.4 322.8L442.2 324.7Z" fill="#7d7d7d"/>
<path d="M322.1 320.0L328.7 322.4L326.4 332.7Z" fill="#777777"/>
<path d="M322.1 320.0L326.4 332.7L319.9 328.7Z" fill="#787878"/>
<path d="M328.7 322.4L343.4 318.0L326.4 332.7Z" fill="#6e6e6e"/>
<path d="M343.4 318.0L338.7 330.2L326.4 332.7Z" fill="#797979"/>
<path d="M343.4 318.0L350.9 324.0L346.0 331.4Z" fill="#717171"/>
<path d="M343.4 318.0L346.0 331.4L338.7 330.2Z" fill="#727272"/>
<path d="M350.9 324.0L363.9 319.2L346.0 331.4Z" fill="#727272"/>
<path d="M363.9 319.2L362.6 327.0L346.0 331.4Z" fill="#777777"/>
<path d="M363.9 319.2L371.3 319.2L362.6 327.0Z" fill="#797979"/>
<path d="M371.3 319.2L368.1 332.2L362.6 327.0Z" fill="#6a6a6a"/>
<path d="M371.3 319.2L380.0 318.8L368.1 332.2Z" fill="#727272"/>
<path d="M380.0 318.8L381.6 331.7L368.1 332.2Z" fill="#757575"/>
<path d="M380.0 318.8L390.4 317.8L394.8 330.6Z" fill="#737373"/>
<path d="M380.0 318.8L394.8 330.6L381.6 331.7Z" fill="#747474"/>
<path d="M390.4 317.8L406.6 325.0L403.5 327.9Z" fill="#868686"/>
<path d="M390.4 317.8L403.5 327.9L394.8 330.6Z" fill="#6c6c6c"/>
<path d="M406.6 325.0L414.5 320.7L403.5 327.9Z" fill="#848484"/>
<path d="M414.5 320.7L415.2 334.8L403.5 327.9Z" fill="#7d7d7d"/>
<path d="M414.5 320.7L425.6 325.1L415.2 334.8Z" fill="#858585"/>
<path d="M425.6 325.1L424.1 326.7L415.2 334.8Z" fill="#7a7a7a"/>
<path d="M425.6 325.1L442.2 324.7L441.5 333.6Z" fill="#838383"/>
<path d="M425.6 325.1L441.5 333.6L424.1 326.7Z" fill="#7d7d7d"/>
<path d="M442.2 324.7L453.4 322.8L441.5 333.6Z" fill="#848484"/>
<path d="M453.4 322.8L449.0 327.2L441.5 333.6Z" fill="#797979"/>
<path d="M319.9 328.7L326.4 332.7L314.0 344.1Z" fill="#707070"/>
<path d="M326.4 332.7L326.2 345.6L314.0 344.1Z" fill="#6c6c6c"/>
<path d="M326.4 332.7L338.7 330.2L326.2 345.6Z" fill="#727272"/>
<path d="M338.7 330.2L344.1 338.1L326.2 345.6Z" fill="#6d6d6d"/>
<path d="M338.7 330.2L346.0 331.4L344.1 338.1Z" fill="#717171"/>
<path d="M346.0 331.4L353.7 346.4L344.1 338.1Z" fill="#6f6f6f"/>
<path d="M346.0 331.4L362.6 327.0L353.7 346.4Z" fill="#757575"/>
<path d="M362.6 327.0L362.4 343.3L353.7 346.4Z" fill="#6e6e6e"/>
<path d="M362.6 327.0L368.1 332.2L373.5 342.7Z" fill="#767676"/>
<path d="M362.6 327.0L373.5 342.7L362.4 343.3Z" fill="#6f6f6f"/>
<path d="M368.1 332.2L381.6 331.7L373.5 342.7Z" fill="#6c6c6c"/>
<path d="M381.6 331.7L383.4 339.2L373.5 342.7Z" fill="#737373"/>
<path d="M381.6 331.7L394.8 330.6L389.6 338.2Z" fill="#707070"/>
<path d="M381.6 331.7L389.6 338.2L383.4 339.2Z" fill="#7a7a7a"/>
<path d="M394.8 330.6L403.5 327.9L400.8 339.4Z" fill="#878787"/>
<path d="M394.8 330.6L400.8 339.4L389.6 338.2Z" fill="#6d6d6d"/>
<path d="M403.5 327.9L415.2 334.8L400.8 339.4Z" fill="#818181"/>
<path d="M415.2 334.8L413.1 346.6L400.8 339.4Z" fill="#868686"/>
<path d="M415.2 334.8L424.1 326.7L423.6 343.6Z" fill="#7d7d7d"/>
<path d="M415.2 334.8L423.6 343.6L413.1 346.6Z" fill="#888888"/>
<path d="M424.1 326.7L441.5 333.6L440.1 339.5Z" fill="#7a7a7a"/>
<path d="M424.1 326.7L440.1 339.5L423.6 343.6Z" fill="#888888"/>
<path d="M441.5 333.6L449.0 327.2L448.6 342.7Z" fill="#7d7d7d"/>
<path d="M441.5 333.6L448.6 342.7L440.1 339.5Z" fill="#888888"/>
<path d="M314.0 344.1L326.2 345.6L327.7 354.6Z" fill="#6e6e6e"/>
<path d="M314.0 344.1L327.7 354.6L318.9 355.0Z" fill="#696969"/>
<path d="M326.2 345.6L344.1 338.1L339.6 349.2Z" fill="#747474"/>
<path d="M326.2 345.6L339.6 349.2L327.7 354.6Z" fill="#777777"/>
<path d="M344.1 338.1L353.7 346.4L339.6 349.2Z" fill="#797979"/>
<path d="M353.7 346.4L351.7 358.4L339.6 349.2Z" fill="#727272"/>
<path d="M353.7 346.4L362.4 343.3L351.7 358.4Z" fill="#747474"/>
<path d="M362.4 343.3L363.7 353.3L351.7 358.4Z" fill="#767676"/>
<path d="M362.4 343.3L373.5 342.7L372.9 352.3Z" fill="#6b6b6b"/>
<path d="M362.4 343.3L372.9 352.3L363.7 353.3Z" fill="#6e6e6e"/>
<path d="M373.5 342.7L383.4 339.2L372.9 352.3Z" fill="#6a6a6a"/>
<path d="M383.4 339.2L382.9 357.6L372.9 352.3Z" fill="#696969"/>
<path d="M383.4 339.2L389.6 338.2L382.9 357.6Z" fill="#747474"/>
<path d="M389.6 338.2L390.3 355.0L382.9 357.6Z" fill="#6c6c6c"/>
<path d="M389.6 338.2L400.8 339.4L390.3 355.0Z" fill="#797979"/>
<path d="M400.8 339.4L402.3 358.4L390.3 355.0Z" fill="#6d6d6d"/>
<path d="M400.8 339.4L413.1 346.6L414.1 354.9Z" fill="#858585"/>
<path d="M400.8 339.4L414.1 354.9L402.3 358.4Z" fill="#6d6d6d"/>
<path d="M413.1 346.6L423.6 343.6L423.8 357.4Z" fill="#838383"/>
<path d="M413.1 346.6L423.8 357.4L414.1 354.9Z" fill="#828282"/>
<path d="M423.6 343.6L440.1 339.5L442.7 357.9Z" fill="#888888"/>
<path d="M423.6 343.6L442.7 357.9L423.8 357.4Z" fill="#7e7e7e"/>
<path d="M440.1 339.5L448.6 342.7L447.2 349.1Z" fill="#838383"/>
<path d="M440.1 339.5L447.2 349.1L442.7 357.9Z" fill="#858585"/>
<path d="M318.9 355.0L327.7 354.6L330.3 368.6Z" fill="#6a6a6a"/>
<path d="M318.9 355.0L330.3 368.6L318.8 366.3Z" fill="#727272"/>
<path d="M327.7 354.6L339.6 349.2L344.2 362.5Z" fill="#787878"/>
<path d="M327.7 354.6L344.2 362.5L330.3 368.6Z" fill="#757575"/>
<path d="M339.6 349.2L351.7 358.4L354.7 368.4Z" fill="#717171"/>
<path d="M339.6 349.2L354.7 368.4L344.2 362.5Z" fill="#797979"/>
<path d="M351.7 358.4L363.7 353.3L357.4 364.6Z" fill="#6f6f6f"/>
<path d="M351.7 358.4L357.4 364.6L354.7 368.4Z" fill="#787878"/>
<path d="M363.7 353.3L372.9 352.3L357.4 364.6Z" fill="#737373"/>
<path d="M372.9 352.3L369.2 368.5L357.4 364.6Z" fill="#6f6f6f"/>
<path d="M372.9 352.3L382.9 357.6L386.9 361.6Z" fill="#727272"/>
<path d="M372.9 352.3L386.9 361.6L369.2 368.5Z" fill="#6d6d6d"/>
<path d="M382.9 357.6L390.3 355.0L386.9 361.6Z" fill="#6b6b6b"/>
<path d="M390.3 355.0L391.1 368.6L386.9 361.6Z" fill="#6a6a6a"/>
<path d="M390.3 355.0L402.3 358.4L402.5 363.4Z" fill="#757575"/>
<path d="M390.3 355.0L402.5 363.4L391.1 368.6Z" fill="#6a6a6a"/>
<path d="M402.3 358.4L414.1 354.9L417.5 363.3Z" fill="#6c6c6c"/>
<path d="M402.3 358.4L417.5 363.3L402.5 363.4Z" fill="#696969"/>
<path d="M414.1 354.9L423.8 357.4L431.0 368.7Z" fill="#878787"/>
<path d="M414.1 354.9L431.0 368.7L417.5 363.3Z" fill="#797979"/>
<path d="M423.8 357.4L442.7 357.9L431.0 368.7Z" fill="#848484"/>
<path d="M442.7 357.9L443.3 367.9L431.0 368.7Z" fill="#7c7c7c"/>
<path d="M442.7 357.9L447.2 349.1L443.3 367.9Z" fill="#7a7a7a"/>
<path d="M447.2 349.1L449.9 364.2L443.3 367.9Z" fill="#7e7e7e"/>
<g stroke="#5e5e5e" stroke-opacity="0.35" stroke-width="0.5" fill="none">
<path d="M314.9 239.0L323.9 254.5"/>
<path d="M350.6 240.3L358.1 254.8"/>
<path d="M393.0 238.9L401.1 256.9"/>
<path d="M421.4 238.9L422.7 257.1"/>
<path d="M441.6 246.7L448.4 253.6"/>
<path d="M318.7 250.3L325.1 261.7"/>
<path d="M353.4 256.1L357.8 261.1"/>
<path d="M358.1 254.8L369.0 268.5"/>
<path d="M374.0 253.5L382.5 266.2"/>
<path d="M357.8 261.1L373.9 280.0"/>
<path d="M413.2 262.3L426.1 273.0"/>
<path d="M320.8 272.0L330.2 285.8"/>
<path d="M373.9 280.0L382.2 287.5"/>
<path d="M420.8 273.1L430.7 290.8"/>
<path d="M426.1 273.0L441.6 286.5"/>
<path d="M320.9 289.2L328.5 300.1"/>
<path d="M410.3 287.2L412.6 294.9"/>
<path d="M430.7 290.8L441.6 301.4"/>
<path d="M363.7 294.3L372.3 310.4"/>
<path d="M375.0 302.4L384.6 306.9"/>
<path d="M385.0 301.3L393.2 306.5"/>
<path d="M441.6 301.4L445.0 313.0"/>
<path d="M359.1 314.1L371.3 319.2"/>
<path d="M404.5 310.9L414.5 320.7"/>
<path d="M426.3 312.4L442.2 324.7"/>
<path d="M322.1 320.0L326.4 332.7"/>
<path d="M371.3 319.2L381.6 331.7"/>
<path d="M390.4 317.8L403.5 327.9"/>
<path d="M406.6 325.0L415.2 334.8"/>
<path d="M346.0 331.4L362.4 343.3"/>
<path d="M362.6 327.0L373.5 342.7"/>
<path d="M403.5 327.9L413.1 346.6"/>
<path d="M314.0 344.1L327.7 354.6"/>
<path d="M353.7 346.4L363.7 353.3"/>
<path d="M362.4 343.3L372.9 352.3"/>
<path d="M373.5 342.7L382.9 357.6"/>
<path d="M413.1 346.6L423.8 357.4"/>
<path d="M423.6 343.6L442.7 357.9"/>
<path d="M327.7 354.6L344.2 362.5"/>
</g>
</g>
<polygon points="328.5,309.5 333.0,296.0 338.0,281.0 346.0,270.0 354.0,261.0 364.5,254.5 371.0,262.0 380.0,270.0 389.5,272.0 403.0,273.5 417.7,276.7 428.7,287.6 425.5,301.7 417.7,309.5 416.5,322.0 416.0,333.0 413.0,344.0 395.0,346.5 375.0,346.0 355.0,344.5 339.5,341.0 331.0,333.0 329.5,321.0" fill="none" stroke="#6a6a6a" stroke-width="0.7" stroke-opacity="0.8"/>
<clipPath id="cl3"><polygon points="416.4,304.8 426.0,276.0 427.2,249.6 438.0,240.0 457.1,232.8 469.1,219.6 478.7,218.4 488.3,224.4 502.7,211.2 519.5,196.3 531.5,204.0 543.5,216.0 557.9,224.4 572.3,228.0 593.9,240.0 610.7,254.4 622.7,276.0 628.7,290.4 629.9,314.4 629.9,333.6 622.7,350.4 615.5,362.3 605.9,369.5 581.9,376.7 545.9,377.9 509.9,379.1 473.9,377.9 457.1,374.3 442.7,367.1 428.4,357.5 418.8,343.1 415.2,324.0"/></clipPath>
<g clip-path="url(#cl3)">
<polygon points="416.4,304.8 426.0,276.0 427.2,249.6 438.0,240.0 457.1,232.8 469.1,219.6 478.7,218.4 488.3,224.4 502.7,211.2 519.5,196.3 531.5,204.0 543.5,216.0 557.9,224.4 572.3,228.0 593.9,240.0 610.7,254.4 622.7,276.0 628.7,290.4 629.9,314.4 629.9,333.6 622.7,350.4 615.5,362.3 605.9,369.5 581.9,376.7 545.9,377.9 509.9,379.1 473.9,377.9 457.1,374.3 442.7,367.1 428.4,357.5 418.8,343.1 415.2,324.0" fill="#7f7f7f"/>
<path d="M404.0 188.4L412.8 176.7L398.4 197.6Z" fill="#6c6c6c"/>
<path d="M412.8 176.7L410.1 192.6L398.4 197.6Z" fill="#6e6e6e"/>
<path d="M412.8 176.7L427.9 184.9L433.9 197.1Z" fill="#717171"/>
<path d="M412.8 176.7L433.9 197.1L410.1 192.6Z" fill="#707070"/>
<path d="M427.9 184.9L448.6 183.4L433.9 197.1Z" fill="#6a6a6a"/>
<path d="M448.6 183.4L444.3 192.7L433.9 197.1Z" fill="#757575"/>
<path d="M448.6 183.4L451.0 180.9L462.6 193.5Z" fill="#6e6e6e"/>
<path d="M448.6 183.4L462.6 193.5L444.3 192.7Z" fill="#767676"/>
<path d="M451.0 180.9L471.7 182.8L466.1 195.6Z" fill="#727272"/>
<path d="M451.0 180.9L466.1 195.6L462.6 193.5Z" fill="#6d6d6d"/>
<path d="M471.7 182.8L483.4 176.8L486.4 197.7Z" fill="#6a6a6a"/>
<path d="M471.7 182.8L486.4 197.7L466.1 195.6Z" fill="#7a7a7a"/>
<path d="M483.4 176.8L497.9 182.6L494.5 200.6Z" fill="#6e6e6e"/>
<path d="M483.4 176.8L494.5 200.6L486.4 197.7Z" fill="#7b7b7b"/>
<path d="M497.9 182.6L510.2 186.5L494.5 200.6Z" fill="#7b7b7b"/>
<path d="M510.2 186.5L511.2 202.5L494.5 200.6Z" fill="#858585"/>
<path d="M510.2 186.5L524.9 182.4L511.2 202.5Z" fill="#7e7e7e"/>
<path d="M524.9 182.4L525.7 190.3L511.2 202.5Z" fill="#838383"/>
<path d="M524.9 182.4L537.4 178.7L525.7 190.3Z" fill="#888888"/>
<path d="M537.4 178.7L535.3 194.7L525.7 190.3Z" fill="#818181"/>
<path d="M537.4 178.7L550.1 186.2L535.3 194.7Z" fill="#797979"/>
<path d="M550.1 186.2L557.8 196.1L535.3 194.7Z" fill="#878787"/>
<path d="M550.1 186.2L566.6 183.3L557.8 196.1Z" fill="#909090"/>
<path d="M566.6 183.3L573.6 201.3L557.8 196.1Z" fill="#7f7f7f"/>
<path d="M566.6 183.3L581.4 185.8L573.6 201.3Z" fill="#818181"/>
<path d="M581.4 185.8L587.8 198.1L573.6 201.3Z" fill="#7f7f7f"/>
<path d="M581.4 185.8L601.7 179.1L587.8 198.1Z" fill="#848484"/>
<path d="M601.7 179.1L602.5 198.9L587.8 198.1Z" fill="#898989"/>
<path d="M601.7 179.1L616.5 182.2L602.5 198.9Z" fill="#808080"/>
<path d="M616.5 182.2L606.0 194.0L602.5 198.9Z" fill="#8b8b8b"/>
<path d="M616.5 182.2L629.8 180.7L606.0 194.0Z" fill="#8a8a8a"/>
<path d="M629.8 180.7L621.8 191.1L606.0 194.0Z" fill="#858585"/>
<path d="M629.8 180.7L638.7 177.0L644.5 196.4Z" fill="#808080"/>
<path d="M629.8 180.7L644.5 196.4L621.8 191.1Z" fill="#898989"/>
<path d="M638.7 177.0L650.9 176.4L644.5 196.4Z" fill="#8b8b8b"/>
<path d="M650.9 176.4L649.2 200.7L644.5 196.4Z" fill="#8c8c8c"/>
<path d="M398.4 197.6L410.1 192.6L399.6 207.0Z" fill="#797979"/>
<path d="M410.1 192.6L418.0 206.2L399.6 207.0Z" fill="#777777"/>
<path d="M410.1 192.6L433.9 197.1L418.0 206.2Z" fill="#6f6f6f"/>
<path d="M433.9 197.1L434.8 215.9L418.0 206.2Z" fill="#767676"/>
<path d="M433.9 197.1L444.3 192.7L434.8 215.9Z" fill="#6d6d6d"/>
<path d="M444.3 192.7L437.6 211.0L434.8 215.9Z" fill="#787878"/>
<path d="M444.3 192.7L462.6 193.5L437.6 211.0Z" fill="#6a6a6a"/>
<path d="M462.6 193.5L451.3 215.6L437.6 211.0Z" fill="#7a7a7a"/>
<path d="M462.6 193.5L466.1 195.6L468.1 210.5Z" fill="#7a7a7a"/>
<path d="M462.6 193.5L468.1 210.5L451.3 215.6Z" fill="#6e6e6e"/>
<path d="M466.1 195.6L486.4 197.7L468.1 210.5Z" fill="#707070"/>
<path d="M486.4 197.7L488.2 213.6L468.1 210.5Z" fill="#7a7a7a"/>
<path d="M486.4 197.7L494.5 200.6L499.0 205.3Z" fill="#6a6a6a"/>
<path d="M486.4 197.7L499.0 205.3L488.2 213.6Z" fill="#6e6e6e"/>
<path d="M494.5 200.6L511.2 202.5L510.9 204.1Z" fill="#838383"/>
<path d="M494.5 200.6L510.9 204.1L499.0 205.3Z" fill="#787878"/>
<path d="M511.2 202.5L525.7 190.3L523.4 213.4Z" fill="#7f7f7f"/>
<path d="M511.2 202.5L523.4 213.4L510.9 204.1Z" fill="#7a7a7a"/>
<path d="M525.7 190.3L535.3 194.7L542.3 209.6Z" fill="#858585"/>
<path d="M525.7 190.3L542.3 209.6L523.4 213.4Z" fill="#858585"/>
<path d="M535.3 194.7L557.8 196.1L557.1 209.9Z" fill="#858585"/>
<path d="M535.3 194.7L557.1 209.9L542.3 209.6Z" fill="#767676"/>
<path d="M557.8 196.1L573.6 201.3L557.1 209.9Z" fill="#8c8c8c"/>
<path d="M573.6 201.3L567.6 208.9L557.1 209.9Z" fill="#828282"/>
<path d="M573.6 201.3L587.8 198.1L567.6 208.9Z" fill="#898989"/>
<path d="M587.8 198.1L581.6 208.8L567.6 208.9Z" fill="#878787"/>
<path d="M587.8 198.1L602.5 198.9L596.5 214.2Z" fill="#828282"/>
<path d="M587.8 198.1L596.5 214.2L581.6 208.8Z" fill="#909090"/>
<path d="M602.5 198.9L606.0 194.0L596.5 214.2Z" fill="#888888"/>
<path d="M606.0 194.0L616.4 215.2L596.5 214.2Z" fill="#818181"/>
<path d="M606.0 194.0L621.8 191.1L616.4 215.2Z" fill="#838383"/>
<path d="M621.8 191.1L624.8 215.5L616.4 215.2Z" fill="#828282"/>
<path d="M621.8 191.1L644.5 196.4L624.8 215.5Z" fill="#8c8c8c"/>
<path d="M644.5 196.4L643.0 206.0L624.8 215.5Z" fill="#8a8a8a"/>
<path d="M644.5 196.4L649.2 200.7L643.0 206.0Z" fill="#818181"/>
<path d="M649.2 200.7L657.4 205.0L643.0 206.0Z" fill="#878787"/>
<path d="M399.6 207.0L418.0 206.2L418.3 227.8Z" fill="#787878"/>
<path d="M399.6 207.0L418.3 227.8L402.7 222.7Z" fill="#6f6f6f"/>
<path d="M418.0 206.2L434.8 215.9L435.0 229.7Z" fill="#717171"/>
<path d="M418.0 206.2L435.0 229.7L418.3 227.8Z" fill="#727272"/>
<path d="M434.8 215.9L437.6 211.0L441.8 218.3Z" fill="#727272"/>
<path d="M434.8 215.9L441.8 218.3L435.0 229.7Z" fill="#777777"/>
<path d="M437.6 211.0L451.3 215.6L441.8 218.3Z" fill="#6e6e6e"/>
<path d="M451.3 215.6L451.8 230.3L441.8 218.3Z" fill="#737373"/>
<path d="M451.3 215.6L468.1 210.5L469.0 220.9Z" fill="#7b7b7b"/>
<path d="M451.3 215.6L469.0 220.9L451.8 230.3Z" fill="#747474"/>
<path d="M468.1 210.5L488.2 213.6L480.4 222.6Z" fill="#7a7a7a"/>
<path d="M468.1 210.5L480.4 222.6L469.0 220.9Z" fill="#6b6b6b"/>
<path d="M488.2 213.6L499.0 205.3L497.1 227.3Z" fill="#777777"/>
<path d="M488.2 213.6L497.1 227.3L480.4 222.6Z" fill="#787878"/>
<path d="M499.0 205.3L510.9 204.1L509.2 223.7Z" fill="#808080"/>
<path d="M499.0 205.3L509.2 223.7L497.1 227.3Z" fill="#888888"/>
<path d="M510.9 204.1L523.4 213.4L532.1 223.5Z" fill="#858585"/>
<path d="M510.9 204.1L532.1 223.5L509.2 223.7Z" fill="#838383"/>
<path d="M523.4 213.4L542.3 209.6L536.8 223.3Z" fill="#878787"/>
<path d="M523.4 213.4L536.8 223.3L532.1 223.5Z" fill="#808080"/>
<path d="M542.3 209.6L557.1 209.9L552.0 218.3Z" fill="#808080"/>
<path d="M542.3 209.6L552.0 218.3L536.8 223.3Z" fill="#7f7f7f"/>
<path d="M557.1 209.9L567.6 208.9L552.0 218.3Z" fill="#868686"/>
<path d="M567.6 208.9L570.1 221.7L552.0 218.3Z" fill="#858585"/>
<path d="M567.6 208.9L581.6 208.8L587.0 221.3Z" fill="#7e7e7e"/>
<path d="M567.6 208.9L587.0 221.3L570.1 221.7Z" fill="#7e7e7e"/>
<path d="M581.6 208.8L596.5 214.2L587.0 221.3Z" fill="#828282"/>
<path d="M596.5 214.2L592.3 223.7L587.0 221.3Z" fill="#878787"/>
<path d="M596.5 214.2L616.4 215.2L611.0 219.9Z" fill="#8e8e8e"/>
<path d="M596.5 214.2L611.0 219.9L592.3 223.7Z" fill="#838383"/>
<path d="M616.4 215.2L624.8 215.5L625.4 226.0Z" fill="#878787"/>
<path d="M616.4 215.2L625.4 226.0L611.0 219.9Z" fill="#888888"/>
<path d="M624.8 215.5L643.0 206.0L642.8 229.7Z" fill="#898989"/>
<path d="M624.8 215.5L642.8 229.7L625.4 226.0Z" fill="#888888"/>
<path d="M643.0 206.0L657.4 205.0L654.0 228.5Z" fill="#828282"/>
<path d="M643.0 206.0L654.0 228.5L642.8 229.7Z" fill="#8f8f8f"/>
<path d="M402.7 222.7L418.3 227.8L396.4 241.5Z" fill="#717171"/>
<path d="M418.3 227.8L421.1 237.4L396.4 241.5Z" fill="#707070"/>
<path d="M418.3 227.8L435.0 229.7L426.2 235.0Z" fill="#6c6c6c"/>
<path d="M418.3 227.8L426.2 235.0L421.1 237.4Z" fill="#7b7b7b"/>
<path d="M435.0 229.7L441.8 218.3L426.2 235.0Z" fill="#757575"/>
<path d="M441.8 218.3L439.9 236.9L426.2 235.0Z" fill="#6a6a6a"/>
<path d="M441.8 218.3L451.8 230.3L439.9 236.9Z" fill="#787878"/>
<path d="M451.8 230.3L456.1 234.0L439.9 236.9Z" fill="#767676"/>
<path d="M451.8 230.3L469.0 220.9L475.4 244.3Z" fill="#6e6e6e"/>
<path d="M451.8 230.3L475.4 244.3L456.1 234.0Z" fill="#727272"/>
<path d="M469.0 220.9L480.4 222.6L475.4 244.3Z" fill="#6b6b6b"/>
<path d="M480.4 222.6L480.7 240.1L475.4 244.3Z" fill="#6d6d6d"/>
<path d="M480.4 222.6L497.1 227.3L480.7 240.1Z" fill="#6e6e6e"/>
<path d="M497.1 227.3L498.5 238.4L480.7 240.1Z" fill="#7a7a7a"/>
<path d="M497.1 227.3L509.2 223.7L513.3 237.6Z" fill="#828282"/>
<path d="M497.1 227.3L513.3 237.6L498.5 238.4Z" fill="#787878"/>
<path d="M509.2 223.7L532.1 223.5L513.3 237.6Z" fill="#848484"/>
<path d="M532.1 223.5L530.8 243.9L513.3 237.6Z" fill="#858585"/>
<path d="M532.1 223.5L536.8 223.3L538.5 236.5Z" fill="#818181"/>
<path d="M532.1 223.5L538.5 236.5L530.8 243.9Z" fill="#767676"/>
<path d="M536.8 223.3L552.0 218.3L549.4 237.2Z" fill="#868686"/>
<path d="M536.8 223.3L549.4 237.2L538.5 236.5Z" fill="#838383"/>
<path d="M552.0 218.3L570.1 221.7L566.4 234.3Z" fill="#808080"/>
<path d="M552.0 218.3L566.4 234.3L549.4 237.2Z" fill="#7f7f7f"/>
<path d="M570.1 221.7L587.0 221.3L566.4 234.3Z" fill="#8b8b8b"/>
<path d="M587.0 221.3L587.5 238.6L566.4 234.3Z" fill="#888888"/>
<path d="M587.0 221.3L592.3 223.7L593.8 234.2Z" fill="#7e7e7e"/>
<path d="M587.0 221.3L593.8 234.2L587.5 238.6Z" fill="#838383"/>
<path d="M592.3 223.7L611.0 219.9L593.8 234.2Z" fill="#838383"/>
<path d="M611.0 219.9L612.5 242.4L593.8 234.2Z" fill="#8a8a8a"/>
<path d="M611.0 219.9L625.4 226.0L630.1 241.2Z" fill="#8c8c8c"/>
<path d="M611.0 219.9L630.1 241.2L612.5 242.4Z" fill="#909090"/>
<path d="M625.4 226.0L642.8 229.7L630.1 241.2Z" fill="#909090"/>
<path d="M642.8 229.7L642.5 234.2L630.1 241.2Z" fill="#848484"/>
<path d="M642.8 229.7L654.0 228.5L648.6 240.4Z" fill="#8f8f8f"/>
<path d="M642.8 229.7L648.6 240.4L642.5 234.2Z" fill="#888888"/>
<path d="M396.4 241.5L421.1 237.4L402.8 248.4Z" fill="#767676"/>
<path d="M421.1 237.4L412.8 246.1L402.8 248.4Z" fill="#7a7a7a"/>
<path d="M421.1 237.4L426.2 235.0L412.8 246.1Z" fill="#6d6d6d"/>
<path d="M426.2 235.0L431.6 252.5L412.8 246.1Z" fill="#757575"/>
<path d="M426.2 235.0L439.9 236.9L431.6 252.5Z" fill="#6b6b6b"/>
<path d="M439.9 236.9L447.5 257.5L431.6 252.5Z" fill="#6a6a6a"/>
<path d="M439.9 236.9L456.1 234.0L447.5 257.5Z" fill="#737373"/>
<path d="M456.1 234.0L457.4 250.4L447.5 257.5Z" fill="#727272"/>
<path d="M456.1 234.0L475.4 244.3L457.4 250.4Z" fill="#767676"/>
<path d="M475.4 244.3L468.5 254.1L457.4 250.4Z" fill="#747474"/>
<path d="M475.4 244.3L480.7 240.1L490.8 247.1Z" fill="#6d6d6d"/>
<path d="M475.4 244.3L490.8 247.1L468.5 254.1Z" fill="#727272"/>
<path d="M480.7 240.1L498.5 238.4L490.8 247.1Z" fill="#868686"/>
<path d="M498.5 238.4L498.1 255.6L490.8 247.1Z" fill="#767676"/>
<path d="M498.5 238.4L513.3 237.6L498.1 255.6Z" fill="#7d7d7d"/>
<path d="M513.3 237.6L508.6 254.4L498.1 255.6Z" fill="#848484"/>
<path d="M513.3 237.6L530.8 243.9L508.6 254.4Z" fill="#7a7a7a"/>
<path d="M530.8 243.9L524.0 253.1L508.6 254.4Z" fill="#888888"/>
<path d="M530.8 243.9L538.5 236.5L547.3 246.5Z" fill="#888888"/>
<path d="M530.8 243.9L547.3 246.5L524.0 253.1Z" fill="#838383"/>
<path d="M538.5 236.5L549.4 237.2L557.7 253.2Z" fill="#7d7d7d"/>
<path d="M538.5 236.5L557.7 253.2L547.3 246.5Z" fill="#888888"/>
<path d="M549.4 237.2L566.4 234.3L573.7 250.5Z" fill="#868686"/>
<path d="M549.4 237.2L573.7 250.5L557.7 253.2Z" fill="#818181"/>
<path d="M566.4 234.3L587.5 238.6L588.6 258.2Z" fill="#848484"/>
<path d="M566.4 234.3L588.6 258.2L573.7 250.5Z" fill="#8f8f8f"/>
<path d="M587.5 238.6L593.8 234.2L588.6 258.2Z" fill="#858585"/>
<path d="M593.8 234.2L591.8 250.5L588.6 258.2Z" fill="#868686"/>
<path d="M593.8 234.2L612.5 242.4L591.8 250.5Z" fill="#848484"/>
<path d="M612.5 242.4L608.0 256.5L591.8 250.5Z" fill="#8e8e8e"/>
<path d="M612.5 242.4L630.1 241.2L608.0 256.5Z" fill="#8d8d8d"/>
<path d="M630.1 241.2L630.4 255.8L608.0 256.5Z" fill="#858585"/>
<path d="M630.1 241.2L642.5 234.2L630.4 255.8Z" fill="#858585"/>
<path d="M642.5 234.2L643.8 253.3L630.4 255.8Z" fill="#8f8f8f"/>
<path d="M642.5 234.2L648.6 240.4L643.8 253.3Z" fill="#818181"/>
<path d="M648.6 240.4L658.2 249.7L643.8 253.3Z" fill="#8e8e8e"/>
<path d="M402.8 248.4L412.8 246.1L396.3 269.2Z" fill="#7b7b7b"/>
<path d="M412.8 246.1L414.5 260.3L396.3 269.2Z" fill="#6b6b6b"/>
<path d="M412.8 246.1L431.6 252.5L414.5 260.3Z" fill="#6b6b6b"/>
<path d="M431.6 252.5L433.0 261.7L414.5 260.3Z" fill="#777777"/>
<path d="M431.6 252.5L447.5 257.5L440.0 261.1Z" fill="#797979"/>
<path d="M431.6 252.5L440.0 261.1L433.0 261.7Z" fill="#7a7a7a"/>
<path d="M447.5 257.5L457.4 250.4L440.0 261.1Z" fill="#6c6c6c"/>
<path d="M457.4 250.4L458.7 262.1L440.0 261.1Z" fill="#797979"/>
<path d="M457.4 250.4L468.5 254.1L468.8 267.0Z" fill="#757575"/>
<path d="M457.4 250.4L468.8 267.0L458.7 262.1Z" fill="#7a7a7a"/>
<path d="M468.5 254.1L490.8 247.1L490.9 260.2Z" fill="#6f6f6f"/>
<path d="M468.5 254.1L490.9 260.2L468.8 267.0Z" fill="#7b7b7b"/>
<path d="M490.8 247.1L498.1 255.6L504.6 269.3Z" fill="#787878"/>
<path d="M490.8 247.1L504.6 269.3L490.9 260.2Z" fill="#7a7a7a"/>
<path d="M498.1 255.6L508.6 254.4L510.2 270.6Z" fill="#777777"/>
<path d="M498.1 255.6L510.2 270.6L504.6 269.3Z" fill="#828282"/>
<path d="M508.6 254.4L524.0 253.1L528.9 265.8Z" fill="#818181"/>
<path d="M508.6 254.4L528.9 265.8L510.2 270.6Z" fill="#777777"/>
<path d="M524.0 253.1L547.3 246.5L537.9 265.6Z" fill="#7c7c7c"/>
<path d="M524.0 253.1L537.9 265.6L528.9 265.8Z" fill="#848484"/>
<path d="M547.3 246.5L557.7 253.2L553.3 261.2Z" fill="#828282"/>
<path d="M547.3 246.5L553.3 261.2L537.9 265.6Z" fill="#838383"/>
<path d="M557.7 253.2L573.7 250.5L553.3 261.2Z" fill="#808080"/>
<path d="M573.7 250.5L565.2 263.4L553.3 261.2Z" fill="#848484"/>
<path d="M573.7 250.5L588.6 258.2L565.2 263.4Z" fill="#898989"/>
<path d="M588.6 258.2L582.8 267.4L565.2 263.4Z" fill="#838383"/>
<path d="M588.6 258.2L591.8 250.5L600.5 261.4Z" fill="#888888"/>
<path d="M588.6 258.2L600.5 261.4L582.8 267.4Z" fill="#7e7e7e"/>
<path d="M591.8 250.5L608.0 256.5L600.5 261.4Z" fill="#818181"/>
<path d="M608.0 256.5L606.4 271.1L600.5 261.4Z" fill="#858585"/>
<path d="M608.0 256.5L630.4 255.8L625.7 262.9Z" fill="#8e8e8e"/>
<path d="M608.0 256.5L625.7 262.9L606.4 271.1Z" fill="#898989"/>
<path d="M630.4 255.8L643.8 253.3L625.7 262.9Z" fill="#7f7f7f"/>
<path d="M643.8 253.3L635.8 268.4L625.7 262.9Z" fill="#898989"/>
<path d="M643.8 253.3L658.2 249.7L652.7 265.0Z" fill="#8f8f8f"/>
<path d="M643.8 253.3L652.7 265.0L635.8 268.4Z" fill="#888888"/>
<path d="M396.3 269.2L414.5 260.3L406.8 274.2Z" fill="#6c6c6c"/>
<path d="M414.5 260.3L416.9 282.7L406.8 274.2Z" fill="#6a6a6a"/>
<path d="M414.5 260.3L433.0 261.7L416.9 282.7Z" fill="#707070"/>
<path d="M433.0 261.7L430.4 281.6L416.9 282.7Z" fill="#717171"/>
<path d="M433.0 261.7L440.0 261.1L437.4 286.2Z" fill="#777777"/>
<path d="M433.0 261.7L437.4 286.2L430.4 281.6Z" fill="#696969"/>
<path d="M440.0 261.1L458.7 262.1L437.4 286.2Z" fill="#7b7b7b"/>
<path d="M458.7 262.1L451.6 278.6L437.4 286.2Z" fill="#777777"/>
<path d="M458.7 262.1L468.8 267.0L469.9 284.6Z" fill="#696969"/>
<path d="M458.7 262.1L469.9 284.6L451.6 278.6Z" fill="#787878"/>
<path d="M468.8 267.0L490.9 260.2L487.9 284.6Z" fill="#7e7e7e"/>
<path d="M468.8 267.0L487.9 284.6L469.9 284.6Z" fill="#6e6e6e"/>
<path d="M490.9 260.2L504.6 269.3L500.0 286.4Z" fill="#7f7f7f"/>
<path d="M490.9 260.2L500.0 286.4L487.9 284.6Z" fill="#828282"/>
<path d="M504.6 269.3L510.2 270.6L500.0 286.4Z" fill="#888888"/>
<path d="M510.2 270.6L510.9 279.0L500.0 286.4Z" fill="#7e7e7e"/>
<path d="M510.2 270.6L528.9 265.8L510.9 279.0Z" fill="#7e7e7e"/>
<path d="M528.9 265.8L528.0 278.1L510.9 279.0Z" fill="#848484"/>
<path d="M528.9 265.8L537.9 265.6L536.7 282.6Z" fill="#808080"/>
<path d="M528.9 265.8L536.7 282.6L528.0 278.1Z" fill="#7a7a7a"/>
<path d="M537.9 265.6L553.3 261.2L553.4 285.0Z" fill="#858585"/>
<path d="M537.9 265.6L553.4 285.0L536.7 282.6Z" fill="#777777"/>
<path d="M553.3 261.2L565.2 263.4L553.4 285.0Z" fill="#7f7f7f"/>
<path d="M565.2 263.4L571.3 274.1L553.4 285.0Z" fill="#808080"/>
<path d="M565.2 263.4L582.8 267.4L578.3 276.4Z" fill="#8a8a8a"/>
<path d="M565.2 263.4L578.3 276.4L571.3 274.1Z" fill="#8d8d8d"/>
<path d="M582.8 267.4L600.5 261.4L578.3 276.4Z" fill="#8c8c8c"/>
<path d="M600.5 261.4L595.0 276.5L578.3 276.4Z" fill="#8a8a8a"/>
<path d="M600.5 261.4L606.4 271.1L613.3 276.8Z" fill="#8e8e8e"/>
<path d="M600.5 261.4L613.3 276.8L595.0 276.5Z" fill="#808080"/>
<path d="M606.4 271.1L625.7 262.9L624.2 279.0Z" fill="#8e8e8e"/>
<path d="M606.4 271.1L624.2 279.0L613.3 276.8Z" fill="#848484"/>
<path d="M625.7 262.9L635.8 268.4L645.5 279.7Z" fill="#828282"/>
<path d="M625.7 262.9L645.5 279.7L624.2 279.0Z" fill="#909090"/>
<path d="M635.8 268.4L652.7 265.0L645.5 279.7Z" fill="#848484"/>
<path d="M652.7 265.0L647.5 286.4L645.5 279.7Z" fill="#838383"/>
<path d="M406.8 274.2L416.9 282.7L407.2 288.5Z" fill="#777777"/>
<path d="M416.9 282.7L419.8 295.8L407.2 288.5Z" fill="#737373"/>
<path d="M416.9 282.7L430.4 281.6L419.8 295.8Z" fill="#757575"/>
<path d="M430.4 281.6L434.5 295.9L419.8 295.8Z" fill="#747474"/>
<path d="M430.4 281.6L437.4 286.2L444.8 298.2Z" fill="#737373"/>
<path d="M430.4 281.6L444.8 298.2L434.5 295.9Z" fill="#7b7b7b"/>
<path d="M437.4 286.2L451.6 278.6L451.4 289.3Z" fill="#707070"/>
<path d="M437.4 286.2L451.4 289.3L444.8 298.2Z" fill="#696969"/>
<path d="M451.6 278.6L469.9 284.6L466.4 288.2Z" fill="#6a6a6a"/>
<path d="M451.6 278.6L466.4 288.2L451.4 289.3Z" fill="#6d6d6d"/>
<path d="M469.9 284.6L487.9 284.6L466.4 288.2Z" fill="#6d6d6d"/>
<path d="M487.9 284.6L481.9 288.5L466.4 288.2Z" fill="#7e7e7e"/>
<path d="M487.9 284.6L500.0 286.4L494.3 292.4Z" fill="#787878"/>
<path d="M487.9 284.6L494.3 292.4L481.9 288.5Z" fill="#868686"/>
<path d="M500.0 286.4L510.9 279.0L494.3 292.4Z" fill="#818181"/>
<path d="M510.9 279.0L509.0 288.8L494.3 292.4Z" fill="#888888"/>
<path d="M510.9 279.0L528.0 278.1L509.0 288.8Z" fill="#888888"/>
<path d="M528.0 278.1L533.0 299.6L509.0 288.8Z" fill="#7a7a7a"/>
<path d="M528.0 278.1L536.7 282.6L533.0 299.6Z" fill="#777777"/>
<path d="M536.7 282.6L546.3 289.1L533.0 299.6Z" fill="#878787"/>
<path d="M536.7 282.6L553.4 285.0L546.3 289.1Z" fill="#797979"/>
<path d="M553.4 285.0L556.3 299.7L546.3 289.1Z" fill="#7c7c7c"/>
<path d="M553.4 285.0L571.3 274.1L556.3 299.7Z" fill="#909090"/>
<path d="M571.3 274.1L568.4 294.4L556.3 299.7Z" fill="#818181"/>
<path d="M571.3 274.1L578.3 276.4L588.1 299.5Z" fill="#878787"/>
<path d="M571.3 274.1L588.1 299.5L568.4 294.4Z" fill="#858585"/>
<path d="M578.3 276.4L595.0 276.5L588.1 299.5Z" fill="#828282"/>
<path d="M595.0 276.5L598.2 291.5L588.1 299.5Z" fill="#808080"/>
<path d="M595.0 276.5L613.3 276.8L614.2 297.3Z" fill="#888888"/>
<path d="M595.0 276.5L614.2 297.3L598.2 291.5Z" fill="#898989"/>
<path d="M613.3 276.8L624.2 279.0L614.2 297.3Z" fill="#858585"/>
<path d="M624.2 279.0L622.5 293.7L614.2 297.3Z" fill="#898989"/>
<path d="M624.2 279.0L645.5 279.7L622.5 293.7Z" fill="#8a8a8a"/>
<path d="M645.5 279.7L641.7 290.8L622.5 293.7Z" fill="#888888"/>
<path d="M645.5 279.7L647.5 286.4L651.8 294.9Z" fill="#888888"/>
<path d="M645.5 279.7L651.8 294.9L641.7 290.8Z" fill="#888888"/>
<path d="M407.2 288.5L419.8 295.8L399.5 313.2Z" fill="#787878"/>
<path d="M419.8 295.8L412.7 308.0L399.5 313.2Z" fill="#797979"/>
<path d="M419.8 295.8L434.5 295.9L433.2 302.4Z" fill="#707070"/>
<path d="M419.8 295.8L433.2 302.4L412.7 308.0Z" fill="#707070"/>
<path d="M434.5 295.9L444.8 298.2L433.2 302.4Z" fill="#6d6d6d"/>
<path d="M444.8 298.2L441.1 304.4L433.2 302.4Z" fill="#6d6d6d"/>
<path d="M444.8 298.2L451.4 289.3L457.8 314.2Z" fill="#777777"/>
<path d="M444.8 298.2L457.8 314.2L441.1 304.4Z" fill="#757575"/>
<path d="M451.4 289.3L466.4 288.2L469.9 313.6Z" fill="#7b7b7b"/>
<path d="M451.4 289.3L469.9 313.6L457.8 314.2Z" fill="#727272"/>
<path d="M466.4 288.2L481.9 288.5L469.9 313.6Z" fill="#7b7b7b"/>
<path d="M481.9 288.5L480.9 314.0L469.9 313.6Z" fill="#787878"/>
<path d="M481.9 288.5L494.3 292.4L497.0 306.1Z" fill="#7f7f7f"/>
<path d="M481.9 288.5L497.0 306.1L480.9 314.0Z" fill="#7e7e7e"/>
<path d="M494.3 292.4L509.0 288.8L497.0 306.1Z" fill="#878787"/>
<path d="M509.0 288.8L510.3 313.1L497.0 306.1Z" fill="#808080"/>
<path d="M509.0 288.8L533.0 299.6L523.6 302.7Z" fill="#7c7c7c"/>
<path d="M509.0 288.8L523.6 302.7L510.3 313.1Z" fill="#888888"/>
<path d="M533.0 299.6L546.3 289.1L523.6 302.7Z" fill="#888888"/>
<path d="M546.3 289.1L535.2 308.9L523.6 302.7Z" fill="#7b7b7b"/>
<path d="M546.3 289.1L556.3 299.7L556.5 306.4Z" fill="#818181"/>
<path d="M546.3 289.1L556.5 306.4L535.2 308.9Z" fill="#848484"/>
<path d="M556.3 299.7L568.4 294.4L571.2 308.5Z" fill="#8b8b8b"/>
<path d="M556.3 299.7L571.2 308.5L556.5 306.4Z" fill="#808080"/>
<path d="M568.4 294.4L588.1 299.5L571.2 308.5Z" fill="#888888"/>
<path d="M588.1 299.5L587.4 306.5L571.2 308.5Z" fill="#838383"/>
<path d="M588.1 299.5L598.2 291.5L600.5 308.6Z" fill="#868686"/>
<path d="M588.1 299.5L600.5 308.6L587.4 306.5Z" fill="#8f8f8f"/>
<path d="M598.2 291.5L614.2 297.3L617.4 310.5Z" fill="#838383"/>
<path d="M598.2 291.5L617.4 310.5L600.5 308.6Z" fill="#868686"/>
<path d="M614.2 297.3L622.5 293.7L630.7 307.3Z" fill="#7e7e7e"/>
<path d="M614.2 297.3L630.7 307.3L617.4 310.5Z" fill="#848484"/>
<path d="M622.5 293.7L641.7 290.8L641.3 303.8Z" fill="#8c8c8c"/>
<path d="M622.5 293.7L641.3 303.8L630.7 307.3Z" fill="#848484"/>
<path d="M641.7 290.8L651.8 294.9L641.3 303.8Z" fill="#878787"/>
<path d="M651.8 294.9L649.5 309.7L641.3 303.8Z" fill="#8e8e8e"/>
<path d="M399.5 313.2L412.7 308.0L398.4 326.6Z" fill="#6f6f6f"/>
<path d="M412.7 308.0L410.1 326.8L398.4 326.6Z" fill="#707070"/>
<path d="M412.7 308.0L433.2 302.4L410.1 326.8Z" fill="#6d6d6d"/>
<path d="M433.2 302.4L434.5 328.5L410.1 326.8Z" fill="#6a6a6a"/>
<path d="M433.2 302.4L441.1 304.4L440.3 323.9Z" fill="#7b7b7b"/>
<path d="M433.2 302.4L440.3 323.9L434.5 328.5Z" fill="#737373"/>
<path d="M441.1 304.4L457.8 314.2L440.3 323.9Z" fill="#696969"/>
<path d="M457.8 314.2L458.9 324.9L440.3 323.9Z" fill="#6f6f6f"/>
<path d="M457.8 314.2L469.9 313.6L470.1 317.3Z" fill="#696969"/>
<path d="M457.8 314.2L470.1 317.3L458.9 324.9Z" fill="#737373"/>
<path d="M469.9 313.6L480.9 314.0L470.1 317.3Z" fill="#7c7c7c"/>
<path d="M480.9 314.0L484.1 322.9L470.1 317.3Z" fill="#808080"/>
<path d="M480.9 314.0L497.0 306.1L494.4 321.0Z" fill="#767676"/>
<path d="M480.9 314.0L494.4 321.0L484.1 322.9Z" fill="#858585"/>
<path d="M497.0 306.1L510.3 313.1L519.4 317.9Z" fill="#808080"/>
<path d="M497.0 306.1L519.4 317.9L494.4 321.0Z" fill="#7b7b7b"/>
<path d="M510.3 313.1L523.6 302.7L531.6 319.5Z" fill="#838383"/>
<path d="M510.3 313.1L531.6 319.5L519.4 317.9Z" fill="#777777"/>
<path d="M523.6 302.7L535.2 308.9L542.7 317.4Z" fill="#808080"/>
<path d="M523.6 302.7L542.7 317.4L531.6 319.5Z" fill="#858585"/>
<path d="M535.2 308.9L556.5 306.4L542.7 317.4Z" fill="#828282"/>
<path d="M556.5 306.4L559.6 324.7L542.7 317.4Z" fill="#7e7e7e"/>
<path d="M556.5 306.4L571.2 308.5L559.6 324.7Z" fill="#7e7e7e"/>
<path d="M571.2 308.5L566.5 320.4L559.6 324.7Z" fill="#7e7e7e"/>
<path d="M571.2 308.5L587.4 306.5L566.5 320.4Z" fill="#909090"/>
<path d="M587.4 306.5L581.3 322.6L566.5 320.4Z" fill="#888888"/>
<path d="M587.4 306.5L600.5 308.6L598.4 324.2Z" fill="#888888"/>
<path d="M587.4 306.5L598.4 324.2L581.3 322.6Z" fill="#838383"/>
<path d="M600.5 308.6L617.4 310.5L605.0 325.4Z" fill="#828282"/>
<path d="M600.5 308.6L605.0 325.4L598.4 324.2Z" fill="#848484"/>
<path d="M617.4 310.5L630.7 307.3L631.4 320.8Z" fill="#808080"/>
<path d="M617.4 310.5L631.4 320.8L605.0 325.4Z" fill="#898989"/>
<path d="M630.7 307.3L641.3 303.8L631.4 320.8Z" fill="#8b8b8b"/>
<path d="M641.3 303.8L636.7 322.8L631.4 320.8Z" fill="#898989"/>
<path d="M641.3 303.8L649.5 309.7L636.7 322.8Z" fill="#909090"/>
<path d="M649.5 309.7L657.0 321.5L636.7 322.8Z" fill="#8f8f8f"/>
<path d="M398.4 326.6L410.1 326.8L419.3 334.2Z" fill="#7b7b7b"/>
<path d="M398.4 326.6L419.3 334.2L399.7 332.9Z" fill="#737373"/>
<path d="M410.1 326.8L434.5 328.5L435.1 337.7Z" fill="#717171"/>
<path d="M410.1 326.8L435.1 337.7L419.3 334.2Z" fill="#787878"/>
<path d="M434.5 328.5L440.3 323.9L435.1 337.7Z" fill="#727272"/>
<path d="M440.3 323.9L440.0 334.1L435.1 337.7Z" fill="#7a7a7a"/>
<path d="M440.3 323.9L458.9 324.9L440.0 334.1Z" fill="#777777"/>
<path d="M458.9 324.9L463.1 341.2L440.0 334.1Z" fill="#7a7a7a"/>
<path d="M458.9 324.9L470.1 317.3L476.9 330.3Z" fill="#797979"/>
<path d="M458.9 324.9L476.9 330.3L463.1 341.2Z" fill="#797979"/>
<path d="M470.1 317.3L484.1 322.9L476.9 330.3Z" fill="#7a7a7a"/>
<path d="M484.1 322.9L482.1 341.3L476.9 330.3Z" fill="#7e7e7e"/>
<path d="M484.1 322.9L494.4 321.0L496.7 336.8Z" fill="#858585"/>
<path d="M484.1 322.9L496.7 336.8L482.1 341.3Z" fill="#797979"/>
<path d="M494.4 321.0L519.4 317.9L496.7 336.8Z" fill="#818181"/>
<path d="M519.4 317.9L510.8 337.8L496.7 336.8Z" fill="#7a7a7a"/>
<path d="M519.4 317.9L531.6 319.5L510.8 337.8Z" fill="#7d7d7d"/>
<path d="M531.6 319.5L526.4 340.4L510.8 337.8Z" fill="#828282"/>
<path d="M531.6 319.5L542.7 317.4L526.4 340.4Z" fill="#787878"/>
<path d="M542.7 317.4L544.1 335.4L526.4 340.4Z" fill="#767676"/>
<path d="M542.7 317.4L559.6 324.7L544.1 335.4Z" fill="#797979"/>
<path d="M559.6 324.7L554.7 330.5L544.1 335.4Z" fill="#777777"/>
<path d="M559.6 324.7L566.5 320.4L554.7 330.5Z" fill="#848484"/>
<path d="M566.5 320.4L571.4 335.7L554.7 330.5Z" fill="#8f8f8f"/>
<path d="M566.5 320.4L581.3 322.6L571.4 335.7Z" fill="#868686"/>
<path d="M581.3 322.6L577.0 330.9L571.4 335.7Z" fill="#898989"/>
<path d="M581.3 322.6L598.4 324.2L577.0 330.9Z" fill="#838383"/>
<path d="M598.4 324.2L593.8 335.2L577.0 330.9Z" fill="#838383"/>
<path d="M598.4 324.2L605.0 325.4L593.8 335.2Z" fill="#898989"/>
<path d="M605.0 325.4L611.2 338.2L593.8 335.2Z" fill="#858585"/>
<path d="M605.0 325.4L631.4 320.8L630.6 331.9Z" fill="#8d8d8d"/>
<path d="M605.0 325.4L630.6 331.9L611.2 338.2Z" fill="#848484"/>
<path d="M631.4 320.8L636.7 322.8L630.6 331.9Z" fill="#898989"/>
<path d="M636.7 322.8L635.3 335.3L630.6 331.9Z" fill="#8a8a8a"/>
<path d="M636.7 322.8L657.0 321.5L652.0 339.7Z" fill="#888888"/>
<path d="M636.7 322.8L652.0 339.7L635.3 335.3Z" fill="#7e7e7e"/>
<path d="M399.7 332.9L419.3 334.2L417.6 353.4Z" fill="#696969"/>
<path d="M399.7 332.9L417.6 353.4L406.2 351.4Z" fill="#6b6b6b"/>
<path d="M419.3 334.2L435.1 337.7L417.6 353.4Z" fill="#757575"/>
<path d="M435.1 337.7L424.1 348.6L417.6 353.4Z" fill="#747474"/>
<path d="M435.1 337.7L440.0 334.1L441.5 344.9Z" fill="#7b7b7b"/>
<path d="M435.1 337.7L441.5 344.9L424.1 348.6Z" fill="#757575"/>
<path d="M440.0 334.1L463.1 341.2L454.8 346.2Z" fill="#757575"/>
<path d="M440.0 334.1L454.8 346.2L441.5 344.9Z" fill="#707070"/>
<path d="M463.1 341.2L476.9 330.3L473.2 347.7Z" fill="#767676"/>
<path d="M463.1 341.2L473.2 347.7L454.8 346.2Z" fill="#717171"/>
<path d="M476.9 330.3L482.1 341.3L473.2 347.7Z" fill="#7d7d7d"/>
<path d="M482.1 341.3L483.2 355.8L473.2 347.7Z" fill="#7d7d7d"/>
<path d="M482.1 341.3L496.7 336.8L499.3 356.2Z" fill="#808080"/>
<path d="M482.1 341.3L499.3 356.2L483.2 355.8Z" fill="#838383"/>
<path d="M496.7 336.8L510.8 337.8L499.3 356.2Z" fill="#7f7f7f"/>
<path d="M510.8 337.8L514.9 350.6L499.3 356.2Z" fill="#858585"/>
<path d="M510.8 337.8L526.4 340.4L531.2 346.6Z" fill="#888888"/>
<path d="M510.8 337.8L531.2 346.6L514.9 350.6Z" fill="#7b7b7b"/>
<path d="M526.4 340.4L544.1 335.4L546.2 349.2Z" fill="#7e7e7e"/>
<path d="M526.4 340.4L546.2 349.2L531.2 346.6Z" fill="#7a7a7a"/>
<path d="M544.1 335.4L554.7 330.5L546.2 349.2Z" fill="#7f7f7f"/>
<path d="M554.7 330.5L549.7 351.1L546.2 349.2Z" fill="#787878"/>
<path d="M554.7 330.5L571.4 335.7L564.2 351.2Z" fill="#8d8d8d"/>
<path d="M554.7 330.5L564.2 351.2L549.7 351.1Z" fill="#7d7d7d"/>
<path d="M571.4 335.7L577.0 330.9L584.9 353.1Z" fill="#8c8c8c"/>
<path d="M571.4 335.7L584.9 353.1L564.2 351.2Z" fill="#848484"/>
<path d="M577.0 330.9L593.8 335.2L584.9 353.1Z" fill="#848484"/>
<path d="M593.8 335.2L599.6 344.1L584.9 353.1Z" fill="#898989"/>
<path d="M593.8 335.2L611.2 338.2L604.9 353.0Z" fill="#8c8c8c"/>
<path d="M593.8 335.2L604.9 353.0L599.6 344.1Z" fill="#838383"/>
<path d="M611.2 338.2L630.6 331.9L625.9 355.6Z" fill="#828282"/>
<path d="M611.2 338.2L625.9 355.6L604.9 353.0Z" fill="#878787"/>
<path d="M630.6 331.9L635.3 335.3L625.9 355.6Z" fill="#818181"/>
<path d="M635.3 335.3L637.9 345.2L625.9 355.6Z" fill="#828282"/>
<path d="M635.3 335.3L652.0 339.7L637.9 345.2Z" fill="#7e7e7e"/>
<path d="M652.0 339.7L647.1 344.4L637.9 345.2Z" fill="#828282"/>
<path d="M406.2 351.4L417.6 353.4L397.1 367.7Z" fill="#6b6b6b"/>
<path d="M417.6 353.4L416.0 369.0L397.1 367.7Z" fill="#777777"/>
<path d="M417.6 353.4L424.1 348.6L416.0 369.0Z" fill="#6a6a6a"/>
<path d="M424.1 348.6L434.2 364.5L416.0 369.0Z" fill="#6c6c6c"/>
<path d="M424.1 348.6L441.5 344.9L438.7 360.5Z" fill="#757575"/>
<path d="M424.1 348.6L438.7 360.5L434.2 364.5Z" fill="#696969"/>
<path d="M441.5 344.9L454.8 346.2L458.5 359.8Z" fill="#757575"/>
<path d="M441.5 344.9L458.5 359.8L438.7 360.5Z" fill="#717171"/>
<path d="M454.8 346.2L473.2 347.7L458.5 359.8Z" fill="#6a6a6a"/>
<path d="M473.2 347.7L471.4 364.4L458.5 359.8Z" fill="#868686"/>
<path d="M473.2 347.7L483.2 355.8L479.3 359.0Z" fill="#767676"/>
<path d="M473.2 347.7L479.3 359.0L471.4 364.4Z" fill="#757575"/>
<path d="M483.2 355.8L499.3 356.2L504.8 364.2Z" fill="#7b7b7b"/>
<path d="M483.2 355.8L504.8 364.2L479.3 359.0Z" fill="#868686"/>
<path d="M499.3 356.2L514.9 350.6L512.8 363.4Z" fill="#777777"/>
<path d="M499.3 356.2L512.8 363.4L504.8 364.2Z" fill="#747474"/>
<path d="M514.9 350.6L531.2 346.6L531.0 366.2Z" fill="#808080"/>
<path d="M514.9 350.6L531.0 366.2L512.8 363.4Z" fill="#767676"/>
<path d="M531.2 346.6L546.2 349.2L531.0 366.2Z" fill="#797979"/>
<path d="M546.2 349.2L543.5 365.3L531.0 366.2Z" fill="#838383"/>
<path d="M546.2 349.2L549.7 351.1L543.5 365.3Z" fill="#848484"/>
<path d="M549.7 351.1L550.7 361.0L543.5 365.3Z" fill="#818181"/>
<path d="M549.7 351.1L564.2 351.2L566.4 358.4Z" fill="#7d7d7d"/>
<path d="M549.7 351.1L566.4 358.4L550.7 361.0Z" fill="#858585"/>
<path d="M564.2 351.2L584.9 353.1L584.8 368.8Z" fill="#8d8d8d"/>
<path d="M564.2 351.2L584.8 368.8L566.4 358.4Z" fill="#8c8c8c"/>
<path d="M584.9 353.1L599.6 344.1L584.8 368.8Z" fill="#8c8c8c"/>
<path d="M599.6 344.1L602.8 358.8L584.8 368.8Z" fill="#878787"/>
<path d="M599.6 344.1L604.9 353.0L602.8 358.8Z" fill="#808080"/>
<path d="M604.9 353.0L607.3 365.9L602.8 358.8Z" fill="#878787"/>
<path d="M604.9 353.0L625.9 355.6L607.3 365.9Z" fill="#838383"/>
<path d="M625.9 355.6L619.1 360.8L607.3 365.9Z" fill="#7e7e7e"/>
<path d="M625.9 355.6L637.9 345.2L637.9 367.6Z" fill="#818181"/>
<path d="M625.9 355.6L637.9 367.6L619.1 360.8Z" fill="#7c7c7c"/>
<path d="M637.9 345.2L647.1 344.4L647.5 358.7Z" fill="#808080"/>
<path d="M637.9 345.2L647.5 358.7L637.9 367.6Z" fill="#7d7d7d"/>
<path d="M397.1 367.7L416.0 369.0L410.9 379.4Z" fill="#686868"/>
<path d="M397.1 367.7L410.9 379.4L397.9 374.8Z" fill="#747474"/>
<path d="M416.0 369.0L434.2 364.5L410.9 379.4Z" fill="#727272"/>
<path d="M434.2 364.5L425.1 372.1L410.9 379.4Z" fill="#6f6f6f"/>
<path d="M434.2 364.5L438.7 360.5L447.8 377.7Z" fill="#686868"/>
<path d="M434.2 364.5L447.8 377.7L425.1 372.1Z" fill="#757575"/>
<path d="M438.7 360.5L458.5 359.8L447.8 377.7Z" fill="#787878"/>
<path d="M458.5 359.8L456.2 375.2L447.8 377.7Z" fill="#717171"/>
<path d="M458.5 359.8L471.4 364.4L456.2 375.2Z" fill="#7c7c7c"/>
<path d="M471.4 364.4L476.1 384.3L456.2 375.2Z" fill="#808080"/>
<path d="M471.4 364.4L479.3 359.0L479.8 380.5Z" fill="#858585"/>
<path d="M471.4 364.4L479.8 380.5L476.1 384.3Z" fill="#818181"/>
<path d="M479.3 359.0L504.8 364.2L501.4 379.4Z" fill="#787878"/>
<path d="M479.3 359.0L501.4 379.4L479.8 380.5Z" fill="#808080"/>
<path d="M504.8 364.2L512.8 363.4L501.4 379.4Z" fill="#818181"/>
<path d="M512.8 363.4L512.1 377.0L501.4 379.4Z" fill="#787878"/>
<path d="M512.8 363.4L531.0 366.2L512.1 377.0Z" fill="#747474"/>
<path d="M531.0 366.2L529.9 372.3L512.1 377.0Z" fill="#7b7b7b"/>
<path d="M531.0 366.2L543.5 365.3L529.9 372.3Z" fill="#7c7c7c"/>
<path d="M543.5 365.3L545.8 373.1L529.9 372.3Z" fill="#808080"/>
<path d="M543.5 365.3L550.7 361.0L545.8 373.1Z" fill="#7a7a7a"/>
<path d="M550.7 361.0L551.0 376.8L545.8 373.1Z" fill="#777777"/>
<path d="M550.7 361.0L566.4 358.4L563.0 383.1Z" fill="#757575"/>
<path d="M550.7 361.0L563.0 383.1L551.0 376.8Z" fill="#757575"/>
<path d="M566.4 358.4L584.8 368.8L581.9 376.6Z" fill="#8d8d8d"/>
<path d="M566.4 358.4L581.9 376.6L563.0 383.1Z" fill="#868686"/>
<path d="M584.8 368.8L602.8 358.8L581.9 376.6Z" fill="#8a8a8a"/>
<path d="M602.8 358.8L595.1 383.0L581.9 376.6Z" fill="#8d8d8d"/>
<path d="M602.8 358.8L607.3 365.9L595.1 383.0Z" fill="#8a8a8a"/>
<path d="M607.3 365.9L609.1 380.2L595.1 383.0Z" fill="#8e8e8e"/>
<path d="M607.3 365.9L619.1 360.8L631.0 377.3Z" fill="#8b8b8b"/>
<path d="M607.3 365.9L631.0 377.3L609.1 380.2Z" fill="#8c8c8c"/>
<path d="M619.1 360.8L637.9 367.6L644.4 379.0Z" fill="#8d8d8d"/>
<path d="M619.1 360.8L644.4 379.0L631.0 377.3Z" fill="#888888"/>
<path d="M637.9 367.6L647.5 358.7L651.8 377.9Z" fill="#888888"/>
<path d="M637.9 367.6L651.8 377.9L644.4 379.0Z" fill="#878787"/>
<path d="M397.9 374.8L410.9 379.4L399.2 391.5Z" fill="#737373"/>
<path d="M410.9 379.4L412.4 386.3L399.2 391.5Z" fill="#777777"/>
<path d="M410.9 379.4L425.1 372.1L433.0 389.0Z" fill="#717171"/>
<path d="M410.9 379.4L433.0 389.0L412.4 386.3Z" fill="#696969"/>
<path d="M425.1 372.1L447.8 377.7L433.0 389.0Z" fill="#787878"/>
<path d="M447.8 377.7L438.5 388.5L433.0 389.0Z" fill="#6e6e6e"/>
<path d="M447.8 377.7L456.2 375.2L438.5 388.5Z" fill="#6f6f6f"/>
<path d="M456.2 375.2L457.8 395.9L438.5 388.5Z" fill="#6f6f6f"/>
<path d="M456.2 375.2L476.1 384.3L457.8 395.9Z" fill="#838383"/>
<path d="M476.1 384.3L471.9 391.9L457.8 395.9Z" fill="#7f7f7f"/>
<path d="M476.1 384.3L479.8 380.5L471.9 391.9Z" fill="#838383"/>
<path d="M479.8 380.5L488.9 389.0L471.9 391.9Z" fill="#868686"/>
<path d="M479.8 380.5L501.4 379.4L497.5 388.7Z" fill="#787878"/>
<path d="M479.8 380.5L497.5 388.7L488.9 389.0Z" fill="#767676"/>
<path d="M501.4 379.4L512.1 377.0L497.5 388.7Z" fill="#848484"/>
<path d="M512.1 377.0L512.0 393.9L497.5 388.7Z" fill="#7f7f7f"/>
<path d="M512.1 377.0L529.9 372.3L512.0 393.9Z" fill="#848484"/>
<path d="M529.9 372.3L528.2 389.7L512.0 393.9Z" fill="#797979"/>
<path d="M529.9 372.3L545.8 373.1L528.2 389.7Z" fill="#7b7b7b"/>
<path d="M545.8 373.1L540.9 388.6L528.2 389.7Z" fill="#797979"/>
<path d="M545.8 373.1L551.0 376.8L559.7 394.5Z" fill="#828282"/>
<path d="M545.8 373.1L559.7 394.5L540.9 388.6Z" fill="#797979"/>
<path d="M551.0 376.8L563.0 383.1L559.7 394.5Z" fill="#757575"/>
<path d="M563.0 383.1L574.8 398.6L559.7 394.5Z" fill="#868686"/>
<path d="M563.0 383.1L581.9 376.6L584.4 391.5Z" fill="#898989"/>
<path d="M563.0 383.1L584.4 391.5L574.8 398.6Z" fill="#7f7f7f"/>
<path d="M581.9 376.6L595.1 383.0L603.4 392.7Z" fill="#848484"/>
<path d="M581.9 376.6L603.4 392.7L584.4 391.5Z" fill="#888888"/>
<path d="M595.1 383.0L609.1 380.2L610.0 392.4Z" fill="#878787"/>
<path d="M595.1 383.0L610.0 392.4L603.4 392.7Z" fill="#8c8c8c"/>
<path d="M609.1 380.2L631.0 377.3L610.0 392.4Z" fill="#8a8a8a"/>
<path d="M631.0 377.3L620.5 395.5L610.0 392.4Z" fill="#7e7e7e"/>
<path d="M631.0 377.3L644.4 379.0L641.4 387.2Z" fill="#858585"/>
<path d="M631.0 377.3L641.4 387.2L620.5 395.5Z" fill="#8a8a8a"/>
<path d="M644.4 379.0L651.8 377.9L641.4 387.2Z" fill="#8a8a8a"/>
<path d="M651.8 377.9L657.6 395.3L641.4 387.2Z" fill="#8b8b8b"/>
<path d="M399.2 391.5L412.4 386.3L404.5 400.4Z" fill="#6c6c6c"/>
<path d="M412.4 386.3L417.9 401.8L404.5 400.4Z" fill="#777777"/>
<path d="M412.4 386.3L433.0 389.0L423.1 409.0Z" fill="#6b6b6b"/>
<path d="M412.4 386.3L423.1 409.0L417.9 401.8Z" fill="#727272"/>
<path d="M433.0 389.0L438.5 388.5L445.7 409.8Z" fill="#6e6e6e"/>
<path d="M433.0 389.0L445.7 409.8L423.1 409.0Z" fill="#727272"/>
<path d="M438.5 388.5L457.8 395.9L445.7 409.8Z" fill="#737373"/>
<path d="M457.8 395.9L453.8 402.4L445.7 409.8Z" fill="#7c7c7c"/>
<path d="M457.8 395.9L471.9 391.9L476.1 400.9Z" fill="#7a7a7a"/>
<path d="M457.8 395.9L476.1 400.9L453.8 402.4Z" fill="#747474"/>
<path d="M471.9 391.9L488.9 389.0L476.1 400.9Z" fill="#757575"/>
<path d="M488.9 389.0L490.4 410.1L476.1 400.9Z" fill="#868686"/>
<path d="M488.9 389.0L497.5 388.7L502.5 402.4Z" fill="#858585"/>
<path d="M488.9 389.0L502.5 402.4L490.4 410.1Z" fill="#7c7c7c"/>
<path d="M497.5 388.7L512.0 393.9L502.5 402.4Z" fill="#7c7c7c"/>
<path d="M512.0 393.9L516.0 401.1L502.5 402.4Z" fill="#7b7b7b"/>
<path d="M512.0 393.9L528.2 389.7L524.5 410.3Z" fill="#828282"/>
<path d="M512.0 393.9L524.5 410.3L516.0 401.1Z" fill="#767676"/>
<path d="M528.2 389.7L540.9 388.6L524.5 410.3Z" fill="#838383"/>
<path d="M540.9 388.6L539.9 404.5L524.5 410.3Z" fill="#767676"/>
<path d="M540.9 388.6L559.7 394.5L559.5 405.9Z" fill="#818181"/>
<path d="M540.9 388.6L559.5 405.9L539.9 404.5Z" fill="#7d7d7d"/>
<path d="M559.7 394.5L574.8 398.6L559.5 405.9Z" fill="#7f7f7f"/>
<path d="M574.8 398.6L570.8 407.9L559.5 405.9Z" fill="#7d7d7d"/>
<path d="M574.8 398.6L584.4 391.5L570.8 407.9Z" fill="#888888"/>
<path d="M584.4 391.5L587.8 411.8L570.8 407.9Z" fill="#878787"/>
<path d="M584.4 391.5L603.4 392.7L593.1 404.6Z" fill="#858585"/>
<path d="M584.4 391.5L593.1 404.6L587.8 411.8Z" fill="#898989"/>
<path d="M603.4 392.7L610.0 392.4L615.0 408.7Z" fill="#848484"/>
<path d="M603.4 392.7L615.0 408.7L593.1 404.6Z" fill="#878787"/>
<path d="M610.0 392.4L620.5 395.5L630.2 400.3Z" fill="#8e8e8e"/>
<path d="M610.0 392.4L630.2 400.3L615.0 408.7Z" fill="#808080"/>
<path d="M620.5 395.5L641.4 387.2L630.2 400.3Z" fill="#828282"/>
<path d="M641.4 387.2L641.8 405.8L630.2 400.3Z" fill="#8e8e8e"/>
<path d="M641.4 387.2L657.6 395.3L659.5 405.0Z" fill="#828282"/>
<path d="M641.4 387.2L659.5 405.0L641.8 405.8Z" fill="#868686"/>
<g stroke="#5e5e5e" stroke-opacity="0.35" stroke-width="0.5" fill="none">
<path d="M412.8 176.7L433.9 197.1"/>
<path d="M510.2 186.5L525.7 190.3"/>
<path d="M601.7 179.1L606.0 194.0"/>
<path d="M616.5 182.2L621.8 191.1"/>
<path d="M638.7 177.0L649.2 200.7"/>
<path d="M410.1 192.6L434.8 215.9"/>
<path d="M433.9 197.1L437.6 211.0"/>
<path d="M444.3 192.7L451.3 215.6"/>
<path d="M486.4 197.7L499.0 205.3"/>
<path d="M494.5 200.6L510.9 204.1"/>
<path d="M535.3 194.7L557.1 209.9"/>
<path d="M587.8 198.1L596.5 214.2"/>
<path d="M621.8 191.1L643.0 206.0"/>
<path d="M418.0 206.2L435.0 229.7"/>
<path d="M434.8 215.9L441.8 218.3"/>
<path d="M499.0 205.3L509.2 223.7"/>
<path d="M523.4 213.4L536.8 223.3"/>
<path d="M557.1 209.9L570.1 221.7"/>
<path d="M567.6 208.9L587.0 221.3"/>
<path d="M596.5 214.2L611.0 219.9"/>
<path d="M643.0 206.0L654.0 228.5"/>
<path d="M435.0 229.7L439.9 236.9"/>
<path d="M480.4 222.6L498.5 238.4"/>
<path d="M497.1 227.3L513.3 237.6"/>
<path d="M552.0 218.3L566.4 234.3"/>
<path d="M570.1 221.7L587.5 238.6"/>
<path d="M587.0 221.3L593.8 234.2"/>
<path d="M396.4 241.5L412.8 246.1"/>
<path d="M426.2 235.0L447.5 257.5"/>
<path d="M498.5 238.4L508.6 254.4"/>
<path d="M513.3 237.6L524.0 253.1"/>
<path d="M549.4 237.2L573.7 250.5"/>
<path d="M566.4 234.3L588.6 258.2"/>
<path d="M593.8 234.2L608.0 256.5"/>
<path d="M612.5 242.4L630.4 255.8"/>
<path d="M431.6 252.5L440.0 261.1"/>
<path d="M447.5 257.5L458.7 262.1"/>
<path d="M457.4 250.4L468.8 267.0"/>
<path d="M490.8 247.1L504.6 269.3"/>
<path d="M498.1 255.6L510.2 270.6"/>
<path d="M557.7 253.2L565.2 263.4"/>
<path d="M591.8 250.5L606.4 271.1"/>
<path d="M608.0 256.5L625.7 262.9"/>
<path d="M433.0 261.7L437.4 286.2"/>
<path d="M504.6 269.3L510.9 279.0"/>
<path d="M510.2 270.6L528.0 278.1"/>
<path d="M528.9 265.8L536.7 282.6"/>
<path d="M537.9 265.6L553.4 285.0"/>
<path d="M635.8 268.4L647.5 286.4"/>
<path d="M406.8 274.2L419.8 295.8"/>
<path d="M500.0 286.4L509.0 288.8"/>
<path d="M510.9 279.0L533.0 299.6"/>
<path d="M536.7 282.6L556.3 299.7"/>
<path d="M578.3 276.4L598.2 291.5"/>
<path d="M613.3 276.8L622.5 293.7"/>
<path d="M624.2 279.0L641.7 290.8"/>
<path d="M645.5 279.7L651.8 294.9"/>
<path d="M434.5 295.9L441.1 304.4"/>
<path d="M444.8 298.2L457.8 314.2"/>
<path d="M451.4 289.3L469.9 313.6"/>
<path d="M466.4 288.2L480.9 314.0"/>
<path d="M494.3 292.4L510.3 313.1"/>
<path d="M546.3 289.1L556.5 306.4"/>
<path d="M588.1 299.5L600.5 308.6"/>
<path d="M614.2 297.3L630.7 307.3"/>
<path d="M412.7 308.0L434.5 328.5"/>
<path d="M433.2 302.4L440.3 323.9"/>
<path d="M441.1 304.4L458.9 324.9"/>
<path d="M480.9 314.0L494.4 321.0"/>
<path d="M571.2 308.5L581.3 322.6"/>
<path d="M600.5 308.6L605.0 325.4"/>
<path d="M617.4 310.5L631.4 320.8"/>
<path d="M630.7 307.3L636.7 322.8"/>
<path d="M641.3 303.8L657.0 321.5"/>
<path d="M398.4 326.6L419.3 334.2"/>
<path d="M410.1 326.8L435.1 337.7"/>
<path d="M458.9 324.9L476.9 330.3"/>
<path d="M484.1 322.9L496.7 336.8"/>
<path d="M566.5 320.4L577.0 330.9"/>
<path d="M581.3 322.6L593.8 335.2"/>
<path d="M605.0 325.4L630.6 331.9"/>
<path d="M631.4 320.8L635.3 335.3"/>
<path d="M463.1 341.2L473.2 347.7"/>
<path d="M526.4 340.4L546.2 349.2"/>
<path d="M544.1 335.4L549.7 351.1"/>
<path d="M577.0 330.9L599.6 344.1"/>
<path d="M593.8 335.2L604.9 353.0"/>
<path d="M611.2 338.2L625.9 355.6"/>
<path d="M630.6 331.9L637.9 345.2"/>
<path d="M635.3 335.3L647.1 344.4"/>
<path d="M406.2 351.4L416.0 369.0"/>
<path d="M424.1 348.6L438.7 360.5"/>
<path d="M441.5 344.9L458.5 359.8"/>
<path d="M473.2 347.7L479.3 359.0"/>
<path d="M483.2 355.8L504.8 364.2"/>
<path d="M514.9 350.6L531.0 366.2"/>
<path d="M599.6 344.1L607.3 365.9"/>
<path d="M604.9 353.0L619.1 360.8"/>
<path d="M625.9 355.6L637.9 367.6"/>
<path d="M637.9 345.2L647.5 358.7"/>
<path d="M434.2 364.5L447.8 377.7"/>
<path d="M458.5 359.8L476.1 384.3"/>
<path d="M471.4 364.4L479.8 380.5"/>
<path d="M543.5 365.3L551.0 376.8"/>
<path d="M566.4 358.4L581.9 376.6"/>
<path d="M602.8 358.8L609.1 380.2"/>
<path d="M607.3 365.9L631.0 377.3"/>
<path d="M425.1 372.1L438.5 388.5"/>
<path d="M447.8 377.7L457.8 395.9"/>
<path d="M456.2 375.2L471.9 391.9"/>
<path d="M476.1 384.3L488.9 389.0"/>
<path d="M501.4 379.4L512.0 393.9"/>
<path d="M512.1 377.0L528.2 389.7"/>
<path d="M529.9 372.3L540.9 388.6"/>
<path d="M563.0 383.1L584.4 391.5"/>
<path d="M581.9 376.6L603.4 392.7"/>
<path d="M631.0 377.3L641.4 387.2"/>
<path d="M399.2 391.5L417.9 401.8"/>
<path d="M433.0 389.0L445.7 409.8"/>
<path d="M471.9 391.9L490.4 410.1"/>
<path d="M528.2 389.7L539.9 404.5"/>
<path d="M540.9 388.6L559.5 405.9"/>
<path d="M574.8 398.6L587.8 411.8"/>
<path d="M603.4 392.7L615.0 408.7"/>
<path d="M610.0 392.4L630.2 400.3"/>
<path d="M641.4 387.2L659.5 405.0"/>
</g>
</g>
<polygon points="416.4,304.8 426.0,276.0 427.2,249.6 438.0,240.0 457.1,232.8 469.1,219.6 478.7,218.4 488.3,224.4 502.7,211.2 519.5,196.3 531.5,204.0 543.5,216.0 557.9,224.4 572.3,228.0 593.9,240.0 610.7,254.4 622.7,276.0 628.7,290.4 629.9,314.4 629.9,333.6 622.7,350.4 615.5,362.3 605.9,369.5 581.9,376.7 545.9,377.9 509.9,379.1 473.9,377.9 457.1,374.3 442.7,367.1 428.4,357.5 418.8,343.1 415.2,324.0" fill="none" stroke="#6a6a6a" stroke-width="0.7" stroke-opacity="0.8"/>
<clipPath id="cl4"><polygon points="491.3,325.5 501.7,319.3 526.8,311.0 556.0,298.4 568.5,297.4 576.8,306.8 574.7,336.0 564.3,348.5 535.0,354.7 503.8,354.7 493.4,348.5"/></clipPath>
<g clip-path="url(#cl4)">
<polygon points="491.3,325.5 501.7,319.3 526.8,311.0 556.0,298.4 568.5,297.4 576.8,306.8 574.7,336.0 564.3,348.5 535.0,354.7 503.8,354.7 493.4,348.5" fill="#848484"/>
<path d="M485.3 284.8L490.2 287.7L493.6 299.8Z" fill="#838383"/>
<path d="M485.3 284.8L493.6 299.8L483.4 293.9Z" fill="#8e8e8e"/>
<path d="M490.2 287.7L501.5 292.2L493.6 299.8Z" fill="#919191"/>
<path d="M501.5 292.2L502.3 300.2L493.6 299.8Z" fill="#8d8d8d"/>
<path d="M501.5 292.2L510.0 290.9L507.2 298.1Z" fill="#878787"/>
<path d="M501.5 292.2L507.2 298.1L502.3 300.2Z" fill="#858585"/>
<path d="M510.0 290.9L518.2 290.6L507.2 298.1Z" fill="#919191"/>
<path d="M518.2 290.6L518.8 300.5L507.2 298.1Z" fill="#8e8e8e"/>
<path d="M518.2 290.6L527.3 286.5L527.9 300.9Z" fill="#919191"/>
<path d="M518.2 290.6L527.9 300.9L518.8 300.5Z" fill="#878787"/>
<path d="M527.3 286.5L537.9 286.8L527.9 300.9Z" fill="#8f8f8f"/>
<path d="M537.9 286.8L539.5 293.8L527.9 300.9Z" fill="#8c8c8c"/>
<path d="M537.9 286.8L541.7 288.1L539.5 293.8Z" fill="#8b8b8b"/>
<path d="M541.7 288.1L546.6 296.5L539.5 293.8Z" fill="#878787"/>
<path d="M541.7 288.1L556.6 289.9L546.6 296.5Z" fill="#919191"/>
<path d="M556.6 289.9L555.3 299.6L546.6 296.5Z" fill="#868686"/>
<path d="M556.6 289.9L560.6 287.5L562.0 296.4Z" fill="#888888"/>
<path d="M556.6 289.9L562.0 296.4L555.3 299.6Z" fill="#8d8d8d"/>
<path d="M560.6 287.5L573.4 291.9L562.0 296.4Z" fill="#919191"/>
<path d="M573.4 291.9L575.9 295.2L562.0 296.4Z" fill="#8f8f8f"/>
<path d="M573.4 291.9L581.4 290.4L582.7 299.8Z" fill="#838383"/>
<path d="M573.4 291.9L582.7 299.8L575.9 295.2Z" fill="#8e8e8e"/>
<path d="M581.4 290.4L591.1 289.7L582.7 299.8Z" fill="#848484"/>
<path d="M591.1 289.7L591.6 300.7L582.7 299.8Z" fill="#909090"/>
<path d="M483.4 293.9L493.6 299.8L481.7 304.8Z" fill="#868686"/>
<path d="M493.6 299.8L489.7 307.2L481.7 304.8Z" fill="#838383"/>
<path d="M493.6 299.8L502.3 300.2L504.0 309.5Z" fill="#8f8f8f"/>
<path d="M493.6 299.8L504.0 309.5L489.7 307.2Z" fill="#858585"/>
<path d="M502.3 300.2L507.2 298.1L509.1 305.7Z" fill="#8b8b8b"/>
<path d="M502.3 300.2L509.1 305.7L504.0 309.5Z" fill="#838383"/>
<path d="M507.2 298.1L518.8 300.5L509.1 305.7Z" fill="#8c8c8c"/>
<path d="M518.8 300.5L516.7 303.5L509.1 305.7Z" fill="#8b8b8b"/>
<path d="M518.8 300.5L527.9 300.9L516.7 303.5Z" fill="#838383"/>
<path d="M527.9 300.9L527.7 303.0L516.7 303.5Z" fill="#838383"/>
<path d="M527.9 300.9L539.5 293.8L527.7 303.0Z" fill="#8a8a8a"/>
<path d="M539.5 293.8L535.4 306.1L527.7 303.0Z" fill="#848484"/>
<path d="M539.5 293.8L546.6 296.5L541.5 305.1Z" fill="#878787"/>
<path d="M539.5 293.8L541.5 305.1L535.4 306.1Z" fill="#8d8d8d"/>
<path d="M546.6 296.5L555.3 299.6L541.5 305.1Z" fill="#888888"/>
<path d="M555.3 299.6L558.3 303.9L541.5 305.1Z" fill="#8b8b8b"/>
<path d="M555.3 299.6L562.0 296.4L558.3 303.9Z" fill="#868686"/>
<path d="M562.0 296.4L566.5 305.7L558.3 303.9Z" fill="#8b8b8b"/>
<path d="M562.0 296.4L575.9 295.2L566.5 305.7Z" fill="#868686"/>
<path d="M575.9 295.2L572.6 304.3L566.5 305.7Z" fill="#878787"/>
<path d="M575.9 295.2L582.7 299.8L572.6 304.3Z" fill="#8f8f8f"/>
<path d="M582.7 299.8L579.0 307.4L572.6 304.3Z" fill="#8c8c8c"/>
<path d="M582.7 299.8L591.6 300.7L579.0 307.4Z" fill="#838383"/>
<path d="M591.6 300.7L589.3 309.6L579.0 307.4Z" fill="#868686"/>
<path d="M481.7 304.8L489.7 307.2L481.4 314.0Z" fill="#838383"/>
<path d="M489.7 307.2L488.5 312.7L481.4 314.0Z" fill="#8f8f8f"/>
<path d="M489.7 307.2L504.0 309.5L488.5 312.7Z" fill="#898989"/>
<path d="M504.0 309.5L499.1 318.0L488.5 312.7Z" fill="#888888"/>
<path d="M504.0 309.5L509.1 305.7L512.4 319.1Z" fill="#8d8d8d"/>
<path d="M504.0 309.5L512.4 319.1L499.1 318.0Z" fill="#878787"/>
<path d="M509.1 305.7L516.7 303.5L512.4 319.1Z" fill="#8c8c8c"/>
<path d="M516.7 303.5L516.7 313.9L512.4 319.1Z" fill="#848484"/>
<path d="M516.7 303.5L527.7 303.0L530.3 317.8Z" fill="#8b8b8b"/>
<path d="M516.7 303.5L530.3 317.8L516.7 313.9Z" fill="#8c8c8c"/>
<path d="M527.7 303.0L535.4 306.1L537.2 318.3Z" fill="#8d8d8d"/>
<path d="M527.7 303.0L537.2 318.3L530.3 317.8Z" fill="#909090"/>
<path d="M535.4 306.1L541.5 305.1L537.2 318.3Z" fill="#838383"/>
<path d="M541.5 305.1L549.1 314.5L537.2 318.3Z" fill="#8f8f8f"/>
<path d="M541.5 305.1L558.3 303.9L550.3 318.3Z" fill="#8b8b8b"/>
<path d="M541.5 305.1L550.3 318.3L549.1 314.5Z" fill="#888888"/>
<path d="M558.3 303.9L566.5 305.7L550.3 318.3Z" fill="#878787"/>
<path d="M566.5 305.7L560.1 313.3L550.3 318.3Z" fill="#848484"/>
<path d="M566.5 305.7L572.6 304.3L560.1 313.3Z" fill="#8c8c8c"/>
<path d="M572.6 304.3L572.8 316.7L560.1 313.3Z" fill="#858585"/>
<path d="M572.6 304.3L579.0 307.4L583.2 316.8Z" fill="#8d8d8d"/>
<path d="M572.6 304.3L583.2 316.8L572.8 316.7Z" fill="#8b8b8b"/>
<path d="M579.0 307.4L589.3 309.6L583.2 316.8Z" fill="#848484"/>
<path d="M589.3 309.6L594.2 317.3L583.2 316.8Z" fill="#808080"/>
<path d="M481.4 314.0L488.5 312.7L488.3 326.5Z" fill="#868686"/>
<path d="M481.4 314.0L488.3 326.5L484.4 325.7Z" fill="#848484"/>
<path d="M488.5 312.7L499.1 318.0L498.3 323.7Z" fill="#878787"/>
<path d="M488.5 312.7L498.3 323.7L488.3 326.5Z" fill="#8f8f8f"/>
<path d="M499.1 318.0L512.4 319.1L509.4 323.0Z" fill="#8e8e8e"/>
<path d="M499.1 318.0L509.4 323.0L498.3 323.7Z" fill="#919191"/>
<path d="M512.4 319.1L516.7 313.9L509.4 323.0Z" fill="#8a8a8a"/>
<path d="M516.7 313.9L516.4 322.7L509.4 323.0Z" fill="#8f8f8f"/>
<path d="M516.7 313.9L530.3 317.8L525.7 326.1Z" fill="#8e8e8e"/>
<path d="M516.7 313.9L525.7 326.1L516.4 322.7Z" fill="#888888"/>
<path d="M530.3 317.8L537.2 318.3L537.8 327.9Z" fill="#818181"/>
<path d="M530.3 317.8L537.8 327.9L525.7 326.1Z" fill="#808080"/>
<path d="M537.2 318.3L549.1 314.5L537.8 327.9Z" fill="#888888"/>
<path d="M549.1 314.5L547.8 320.8L537.8 327.9Z" fill="#8a8a8a"/>
<path d="M549.1 314.5L550.3 318.3L547.8 320.8Z" fill="#888888"/>
<path d="M550.3 318.3L555.6 324.3L547.8 320.8Z" fill="#898989"/>
<path d="M550.3 318.3L560.1 313.3L555.6 324.3Z" fill="#8b8b8b"/>
<path d="M560.1 313.3L564.9 320.5L555.6 324.3Z" fill="#888888"/>
<path d="M560.1 313.3L572.8 316.7L564.9 320.5Z" fill="#888888"/>
<path d="M572.8 316.7L575.3 327.5L564.9 320.5Z" fill="#7d7d7d"/>
<path d="M572.8 316.7L583.2 316.8L578.2 323.4Z" fill="#808080"/>
<path d="M572.8 316.7L578.2 323.4L575.3 327.5Z" fill="#838383"/>
<path d="M583.2 316.8L594.2 317.3L588.8 324.5Z" fill="#8a8a8a"/>
<path d="M583.2 316.8L588.8 324.5L578.2 323.4Z" fill="#878787"/>
<path d="M484.4 325.7L488.3 326.5L479.5 334.3Z" fill="#878787"/>
<path d="M488.3 326.5L491.0 337.0L479.5 334.3Z" fill="#858585"/>
<path d="M488.3 326.5L498.3 323.7L500.2 329.4Z" fill="#828282"/>
<path d="M488.3 326.5L500.2 329.4L491.0 337.0Z" fill="#878787"/>
<path d="M498.3 323.7L509.4 323.0L512.8 331.5Z" fill="#878787"/>
<path d="M498.3 323.7L512.8 331.5L500.2 329.4Z" fill="#828282"/>
<path d="M509.4 323.0L516.4 322.7L512.8 331.5Z" fill="#818181"/>
<path d="M516.4 322.7L515.8 336.8L512.8 331.5Z" fill="#7e7e7e"/>
<path d="M516.4 322.7L525.7 326.1L527.4 337.4Z" fill="#7f7f7f"/>
<path d="M516.4 322.7L527.4 337.4L515.8 336.8Z" fill="#888888"/>
<path d="M525.7 326.1L537.8 327.9L533.7 334.1Z" fill="#8b8b8b"/>
<path d="M525.7 326.1L533.7 334.1L527.4 337.4Z" fill="#7d7d7d"/>
<path d="M537.8 327.9L547.8 320.8L533.7 334.1Z" fill="#848484"/>
<path d="M547.8 320.8L549.2 334.4L533.7 334.1Z" fill="#898989"/>
<path d="M547.8 320.8L555.6 324.3L552.2 335.6Z" fill="#7e7e7e"/>
<path d="M547.8 320.8L552.2 335.6L549.2 334.4Z" fill="#8a8a8a"/>
<path d="M555.6 324.3L564.9 320.5L559.5 333.8Z" fill="#898989"/>
<path d="M555.6 324.3L559.5 333.8L552.2 335.6Z" fill="#8b8b8b"/>
<path d="M564.9 320.5L575.3 327.5L571.6 330.0Z" fill="#7e7e7e"/>
<path d="M564.9 320.5L571.6 330.0L559.5 333.8Z" fill="#8b8b8b"/>
<path d="M575.3 327.5L578.2 323.4L584.9 334.5Z" fill="#828282"/>
<path d="M575.3 327.5L584.9 334.5L571.6 330.0Z" fill="#848484"/>
<path d="M578.2 323.4L588.8 324.5L584.9 334.5Z" fill="#7f7f7f"/>
<path d="M588.8 324.5L590.2 337.2L584.9 334.5Z" fill="#8a8a8a"/>
<path d="M479.5 334.3L491.0 337.0L489.9 345.1Z" fill="#868686"/>
<path d="M479.5 334.3L489.9 345.1L481.2 345.7Z" fill="#818181"/>
<path d="M491.0 337.0L500.2 329.4L489.9 345.1Z" fill="#808080"/>
<path d="M500.2 329.4L500.3 338.7L489.9 345.1Z" fill="#828282"/>
<path d="M500.2 329.4L512.8 331.5L509.6 345.6Z" fill="#7d7d7d"/>
<path d="M500.2 329.4L509.6 345.6L500.3 338.7Z" fill="#8b8b8b"/>
<path d="M512.8 331.5L515.8 336.8L515.9 344.9Z" fill="#818181"/>
<path d="M512.8 331.5L515.9 344.9L509.6 345.6Z" fill="#8a8a8a"/>
<path d="M515.8 336.8L527.4 337.4L515.9 344.9Z" fill="#838383"/>
<path d="M527.4 337.4L523.7 340.8L515.9 344.9Z" fill="#898989"/>
<path d="M527.4 337.4L533.7 334.1L523.7 340.8Z" fill="#838383"/>
<path d="M533.7 334.1L536.5 343.9L523.7 340.8Z" fill="#7f7f7f"/>
<path d="M533.7 334.1L549.2 334.4L536.5 343.9Z" fill="#8a8a8a"/>
<path d="M549.2 334.4L548.6 343.1L536.5 343.9Z" fill="#838383"/>
<path d="M549.2 334.4L552.2 335.6L558.1 344.6Z" fill="#7d7d7d"/>
<path d="M549.2 334.4L558.1 344.6L548.6 343.1Z" fill="#7e7e7e"/>
<path d="M552.2 335.6L559.5 333.8L562.2 344.0Z" fill="#868686"/>
<path d="M552.2 335.6L562.2 344.0L558.1 344.6Z" fill="#858585"/>
<path d="M559.5 333.8L571.6 330.0L570.5 345.6Z" fill="#7d7d7d"/>
<path d="M559.5 333.8L570.5 345.6L562.2 344.0Z" fill="#8a8a8a"/>
<path d="M571.6 330.0L584.9 334.5L570.5 345.6Z" fill="#898989"/>
<path d="M584.9 334.5L581.1 343.4L570.5 345.6Z" fill="#7e7e7e"/>
<path d="M584.9 334.5L590.2 337.2L593.8 341.6Z" fill="#7d7d7d"/>
<path d="M584.9 334.5L593.8 341.6L581.1 343.4Z" fill="#808080"/>
<path d="M481.2 345.7L489.9 345.1L483.8 350.3Z" fill="#858585"/>
<path d="M489.9 345.1L489.8 353.8L483.8 350.3Z" fill="#8b8b8b"/>
<path d="M489.9 345.1L500.3 338.7L500.1 348.3Z" fill="#828282"/>
<path d="M489.9 345.1L500.1 348.3L489.8 353.8Z" fill="#828282"/>
<path d="M500.3 338.7L509.6 345.6L500.1 348.3Z" fill="#8b8b8b"/>
<path d="M509.6 345.6L512.7 352.4L500.1 348.3Z" fill="#848484"/>
<path d="M509.6 345.6L515.9 344.9L518.3 350.7Z" fill="#878787"/>
<path d="M509.6 345.6L518.3 350.7L512.7 352.4Z" fill="#8b8b8b"/>
<path d="M515.9 344.9L523.7 340.8L524.5 354.6Z" fill="#808080"/>
<path d="M515.9 344.9L524.5 354.6L518.3 350.7Z" fill="#808080"/>
<path d="M523.7 340.8L536.5 343.9L524.5 354.6Z" fill="#838383"/>
<path d="M536.5 343.9L532.6 349.6L524.5 354.6Z" fill="#8b8b8b"/>
<path d="M536.5 343.9L548.6 343.1L545.6 352.7Z" fill="#868686"/>
<path d="M536.5 343.9L545.6 352.7L532.6 349.6Z" fill="#8b8b8b"/>
<path d="M548.6 343.1L558.1 344.6L557.1 350.7Z" fill="#808080"/>
<path d="M548.6 343.1L557.1 350.7L545.6 352.7Z" fill="#848484"/>
<path d="M558.1 344.6L562.2 344.0L559.9 350.5Z" fill="#868686"/>
<path d="M558.1 344.6L559.9 350.5L557.1 350.7Z" fill="#8b8b8b"/>
<path d="M562.2 344.0L570.5 345.6L559.9 350.5Z" fill="#888888"/>
<path d="M570.5 345.6L574.1 350.6L559.9 350.5Z" fill="#8b8b8b"/>
<path d="M570.5 345.6L581.1 343.4L583.8 354.2Z" fill="#7e7e7e"/>
<path d="M570.5 345.6L583.8 354.2L574.1 350.6Z" fill="#868686"/>
<path d="M581.1 343.4L593.8 341.6L583.8 354.2Z" fill="#7d7d7d"/>
<path d="M593.8 341.6L587.2 351.0L583.8 354.2Z" fill="#8a8a8a"/>
<path d="M483.8 350.3L489.8 353.8L492.9 358.8Z" fill="#838383"/>
<path d="M483.8 350.3L492.9 358.8L478.3 360.7Z" fill="#878787"/>
<path d="M489.8 353.8L500.1 348.3L492.9 358.8Z" fill="#888888"/>
<path d="M500.1 348.3L501.1 359.3L492.9 358.8Z" fill="#808080"/>
<path d="M500.1 348.3L512.7 352.4L501.1 359.3Z" fill="#848484"/>
<path d="M512.7 352.4L513.2 363.5L501.1 359.3Z" fill="#888888"/>
<path d="M512.7 352.4L518.3 350.7L513.2 363.5Z" fill="#868686"/>
<path d="M518.3 350.7L521.3 357.1L513.2 363.5Z" fill="#7f7f7f"/>
<path d="M518.3 350.7L524.5 354.6L528.1 363.1Z" fill="#848484"/>
<path d="M518.3 350.7L528.1 363.1L521.3 357.1Z" fill="#868686"/>
<path d="M524.5 354.6L532.6 349.6L539.0 362.1Z" fill="#888888"/>
<path d="M524.5 354.6L539.0 362.1L528.1 363.1Z" fill="#808080"/>
<path d="M532.6 349.6L545.6 352.7L539.0 362.1Z" fill="#8b8b8b"/>
<path d="M545.6 352.7L548.8 357.7L539.0 362.1Z" fill="#808080"/>
<path d="M545.6 352.7L557.1 350.7L551.7 362.2Z" fill="#868686"/>
<path d="M545.6 352.7L551.7 362.2L548.8 357.7Z" fill="#898989"/>
<path d="M557.1 350.7L559.9 350.5L551.7 362.2Z" fill="#808080"/>
<path d="M559.9 350.5L565.3 357.3L551.7 362.2Z" fill="#878787"/>
<path d="M559.9 350.5L574.1 350.6L565.3 357.3Z" fill="#878787"/>
<path d="M574.1 350.6L571.5 363.2L565.3 357.3Z" fill="#7d7d7d"/>
<path d="M574.1 350.6L583.8 354.2L583.6 363.1Z" fill="#8b8b8b"/>
<path d="M574.1 350.6L583.6 363.1L571.5 363.2Z" fill="#808080"/>
<path d="M583.8 354.2L587.2 351.0L583.6 363.1Z" fill="#7d7d7d"/>
<path d="M587.2 351.0L589.5 360.4L583.6 363.1Z" fill="#848484"/>
<path d="M478.3 360.7L492.9 358.8L493.0 366.5Z" fill="#808080"/>
<path d="M478.3 360.7L493.0 366.5L481.0 372.4Z" fill="#8b8b8b"/>
<path d="M492.9 358.8L501.1 359.3L493.0 366.5Z" fill="#898989"/>
<path d="M501.1 359.3L502.2 368.7L493.0 366.5Z" fill="#878787"/>
<path d="M501.1 359.3L513.2 363.5L512.8 367.7Z" fill="#858585"/>
<path d="M501.1 359.3L512.8 367.7L502.2 368.7Z" fill="#878787"/>
<path d="M513.2 363.5L521.3 357.1L512.8 367.7Z" fill="#838383"/>
<path d="M521.3 357.1L516.0 370.9L512.8 367.7Z" fill="#818181"/>
<path d="M521.3 357.1L528.1 363.1L530.7 365.9Z" fill="#848484"/>
<path d="M521.3 357.1L530.7 365.9L516.0 370.9Z" fill="#7d7d7d"/>
<path d="M528.1 363.1L539.0 362.1L532.3 370.0Z" fill="#7e7e7e"/>
<path d="M528.1 363.1L532.3 370.0L530.7 365.9Z" fill="#898989"/>
<path d="M539.0 362.1L548.8 357.7L532.3 370.0Z" fill="#888888"/>
<path d="M548.8 357.7L543.2 368.9L532.3 370.0Z" fill="#7e7e7e"/>
<path d="M548.8 357.7L551.7 362.2L552.0 371.3Z" fill="#898989"/>
<path d="M548.8 357.7L552.0 371.3L543.2 368.9Z" fill="#858585"/>
<path d="M551.7 362.2L565.3 357.3L565.6 370.9Z" fill="#858585"/>
<path d="M551.7 362.2L565.6 370.9L552.0 371.3Z" fill="#828282"/>
<path d="M565.3 357.3L571.5 363.2L575.2 366.4Z" fill="#898989"/>
<path d="M565.3 357.3L575.2 366.4L565.6 370.9Z" fill="#8b8b8b"/>
<path d="M571.5 363.2L583.6 363.1L579.0 372.2Z" fill="#8b8b8b"/>
<path d="M571.5 363.2L579.0 372.2L575.2 366.4Z" fill="#7d7d7d"/>
<path d="M583.6 363.1L589.5 360.4L588.2 366.4Z" fill="#7d7d7d"/>
<path d="M583.6 363.1L588.2 366.4L579.0 372.2Z" fill="#858585"/>
<g stroke="#5e5e5e" stroke-opacity="0.35" stroke-width="0.5" fill="none">
<path d="M490.2 287.7L502.3 300.2"/>
<path d="M483.4 293.9L489.7 307.2"/>
<path d="M493.6 299.8L504.0 309.5"/>
<path d="M518.8 300.5L527.7 303.0"/>
<path d="M575.9 295.2L579.0 307.4"/>
<path d="M489.7 307.2L499.1 318.0"/>
<path d="M504.0 309.5L512.4 319.1"/>
<path d="M527.7 303.0L537.2 318.3"/>
<path d="M535.4 306.1L549.1 314.5"/>
<path d="M541.5 305.1L550.3 318.3"/>
<path d="M558.3 303.9L560.1 313.3"/>
<path d="M579.0 307.4L594.2 317.3"/>
<path d="M481.4 314.0L488.3 326.5"/>
<path d="M488.5 312.7L498.3 323.7"/>
<path d="M499.1 318.0L509.4 323.0"/>
<path d="M530.3 317.8L537.8 327.9"/>
<path d="M572.8 316.7L578.2 323.4"/>
<path d="M488.3 326.5L500.2 329.4"/>
<path d="M498.3 323.7L512.8 331.5"/>
<path d="M509.4 323.0L515.8 336.8"/>
<path d="M537.8 327.9L549.2 334.4"/>
<path d="M564.9 320.5L571.6 330.0"/>
<path d="M578.2 323.4L590.2 337.2"/>
<path d="M479.5 334.3L489.9 345.1"/>
<path d="M491.0 337.0L500.3 338.7"/>
<path d="M515.8 336.8L523.7 340.8"/>
<path d="M533.7 334.1L548.6 343.1"/>
<path d="M549.2 334.4L558.1 344.6"/>
<path d="M500.3 338.7L512.7 352.4"/>
<path d="M515.9 344.9L524.5 354.6"/>
<path d="M536.5 343.9L545.6 352.7"/>
<path d="M570.5 345.6L583.8 354.2"/>
<path d="M483.8 350.3L492.9 358.8"/>
<path d="M489.8 353.8L501.1 359.3"/>
<path d="M500.1 348.3L513.2 363.5"/>
<path d="M512.7 352.4L521.3 357.1"/>
<path d="M518.3 350.7L528.1 363.1"/>
<path d="M545.6 352.7L551.7 362.2"/>
<path d="M557.1 350.7L565.3 357.3"/>
<path d="M559.9 350.5L571.5 363.2"/>
<path d="M583.8 354.2L589.5 360.4"/>
<path d="M478.3 360.7L493.0 366.5"/>
<path d="M501.1 359.3L512.8 367.7"/>
<path d="M565.3 357.3L575.2 366.4"/>
</g>
</g>
<polygon points="491.3,325.5 501.7,319.3 526.8,311.0 556.0,298.4 568.5,297.4 576.8,306.8 574.7,336.0 564.3,348.5 535.0,354.7 503.8,354.7 493.4,348.5" fill="none" stroke="#6a6a6a" stroke-width="0.7" stroke-opacity="0.8"/>
<clipPath id="cl5"><polygon points="577.5,298.2 588.8,284.1 609.4,290.7 622.5,298.2 628.2,330.0 622.0,342.0 615.0,350.7 596.3,348.8 575.6,339.5 571.0,311.3"/></clipPath>
<g clip-path="url(#cl5)">
<polygon points="577.5,298.2 588.8,284.1 609.4,290.7 622.5,298.2 628.2,330.0 622.0,342.0 615.0,350.7 596.3,348.8 575.6,339.5 571.0,311.3" fill="#848484"/>
<path d="M563.7 274.5L567.9 278.7L567.6 286.0Z" fill="#696969"/>
<path d="M563.7 274.5L567.6 286.0L558.5 283.2Z" fill="#6a6a6a"/>
<path d="M567.9 278.7L580.9 276.0L580.3 280.6Z" fill="#626262"/>
<path d="M567.9 278.7L580.3 280.6L567.6 286.0Z" fill="#6b6b6b"/>
<path d="M580.9 276.0L586.3 278.7L585.6 284.6Z" fill="#6b6b6b"/>
<path d="M580.9 276.0L585.6 284.6L580.3 280.6Z" fill="#666666"/>
<path d="M586.3 278.7L596.3 274.2L599.8 285.3Z" fill="#666666"/>
<path d="M586.3 278.7L599.8 285.3L585.6 284.6Z" fill="#616161"/>
<path d="M596.3 274.2L605.7 278.8L599.8 285.3Z" fill="#646464"/>
<path d="M605.7 278.8L607.1 287.2L599.8 285.3Z" fill="#616161"/>
<path d="M605.7 278.8L612.7 278.1L619.4 283.7Z" fill="#626262"/>
<path d="M605.7 278.8L619.4 283.7L607.1 287.2Z" fill="#626262"/>
<path d="M612.7 278.1L626.1 276.1L628.2 282.1Z" fill="#686868"/>
<path d="M612.7 278.1L628.2 282.1L619.4 283.7Z" fill="#666666"/>
<path d="M626.1 276.1L635.3 277.0L628.2 282.1Z" fill="#6c6c6c"/>
<path d="M635.3 277.0L633.1 285.7L628.2 282.1Z" fill="#6a6a6a"/>
<path d="M635.3 277.0L640.1 271.6L633.1 285.7Z" fill="#686868"/>
<path d="M640.1 271.6L640.4 288.1L633.1 285.7Z" fill="#696969"/>
<path d="M558.5 283.2L567.6 286.0L570.7 291.7Z" fill="#636363"/>
<path d="M558.5 283.2L570.7 291.7L565.1 296.0Z" fill="#676767"/>
<path d="M567.6 286.0L580.3 280.6L570.7 291.7Z" fill="#696969"/>
<path d="M580.3 280.6L577.6 292.2L570.7 291.7Z" fill="#6a6a6a"/>
<path d="M580.3 280.6L585.6 284.6L577.6 292.2Z" fill="#686868"/>
<path d="M585.6 284.6L591.3 289.9L577.6 292.2Z" fill="#686868"/>
<path d="M585.6 284.6L599.8 285.3L595.6 291.9Z" fill="#797979"/>
<path d="M585.6 284.6L595.6 291.9L591.3 289.9Z" fill="#818181"/>
<path d="M599.8 285.3L607.1 287.2L595.6 291.9Z" fill="#818181"/>
<path d="M607.1 287.2L605.7 294.1L595.6 291.9Z" fill="#7e7e7e"/>
<path d="M607.1 287.2L619.4 283.7L618.8 289.6Z" fill="#6b6b6b"/>
<path d="M607.1 287.2L618.8 289.6L605.7 294.1Z" fill="#646464"/>
<path d="M619.4 283.7L628.2 282.1L618.8 289.6Z" fill="#666666"/>
<path d="M628.2 282.1L621.7 295.4L618.8 289.6Z" fill="#656565"/>
<path d="M628.2 282.1L633.1 285.7L621.7 295.4Z" fill="#646464"/>
<path d="M633.1 285.7L635.3 291.6L621.7 295.4Z" fill="#6a6a6a"/>
<path d="M633.1 285.7L640.4 288.1L635.3 291.6Z" fill="#6b6b6b"/>
<path d="M640.4 288.1L641.1 289.4L635.3 291.6Z" fill="#6b6b6b"/>
<path d="M565.1 296.0L570.7 291.7L567.4 300.1Z" fill="#6a6a6a"/>
<path d="M565.1 296.0L567.4 300.1L561.8 304.8Z" fill="#676767"/>
<path d="M570.7 291.7L577.6 292.2L576.7 302.8Z" fill="#656565"/>
<path d="M570.7 291.7L576.7 302.8L567.4 300.1Z" fill="#6c6c6c"/>
<path d="M577.6 292.2L591.3 289.9L576.7 302.8Z" fill="#7f7f7f"/>
<path d="M591.3 289.9L585.5 300.4L576.7 302.8Z" fill="#7f7f7f"/>
<path d="M591.3 289.9L595.6 291.9L596.1 305.6Z" fill="#848484"/>
<path d="M591.3 289.9L596.1 305.6L585.5 300.4Z" fill="#838383"/>
<path d="M595.6 291.9L605.7 294.1L596.1 305.6Z" fill="#7a7a7a"/>
<path d="M605.7 294.1L610.5 300.9L596.1 305.6Z" fill="#7f7f7f"/>
<path d="M605.7 294.1L618.8 289.6L610.5 300.9Z" fill="#949494"/>
<path d="M618.8 289.6L616.3 299.5L610.5 300.9Z" fill="#8b8b8b"/>
<path d="M618.8 289.6L621.7 295.4L616.3 299.5Z" fill="#616161"/>
<path d="M621.7 295.4L623.9 304.0L616.3 299.5Z" fill="#8b8b8b"/>
<path d="M621.7 295.4L635.3 291.6L623.9 304.0Z" fill="#666666"/>
<path d="M635.3 291.6L633.0 299.4L623.9 304.0Z" fill="#626262"/>
<path d="M635.3 291.6L641.1 289.4L633.0 299.4Z" fill="#636363"/>
<path d="M641.1 289.4L644.3 305.1L633.0 299.4Z" fill="#656565"/>
<path d="M561.8 304.8L567.4 300.1L565.3 308.4Z" fill="#656565"/>
<path d="M567.4 300.1L573.1 314.6L565.3 308.4Z" fill="#666666"/>
<path d="M567.4 300.1L576.7 302.8L573.1 314.6Z" fill="#6c6c6c"/>
<path d="M576.7 302.8L576.2 312.3L573.1 314.6Z" fill="#656565"/>
<path d="M576.7 302.8L585.5 300.4L592.1 313.2Z" fill="#7b7b7b"/>
<path d="M576.7 302.8L592.1 313.2L576.2 312.3Z" fill="#6a6a6a"/>
<path d="M585.5 300.4L596.1 305.6L600.9 309.0Z" fill="#7c7c7c"/>
<path d="M585.5 300.4L600.9 309.0L592.1 313.2Z" fill="#797979"/>
<path d="M596.1 305.6L610.5 300.9L610.2 309.2Z" fill="#7a7a7a"/>
<path d="M596.1 305.6L610.2 309.2L600.9 309.0Z" fill="#7e7e7e"/>
<path d="M610.5 300.9L616.3 299.5L610.2 309.2Z" fill="#929292"/>
<path d="M616.3 299.5L612.0 307.9L610.2 309.2Z" fill="#898989"/>
<path d="M616.3 299.5L623.9 304.0L624.0 310.0Z" fill="#8f8f8f"/>
<path d="M616.3 299.5L624.0 310.0L612.0 307.9Z" fill="#8d8d8d"/>
<path d="M623.9 304.0L633.0 299.4L624.0 310.0Z" fill="#656565"/>
<path d="M633.0 299.4L632.2 310.9L624.0 310.0Z" fill="#656565"/>
<path d="M633.0 299.4L644.3 305.1L632.2 310.9Z" fill="#666666"/>
<path d="M644.3 305.1L642.9 307.9L632.2 310.9Z" fill="#656565"/>
<path d="M565.3 308.4L573.1 314.6L570.2 320.0Z" fill="#676767"/>
<path d="M565.3 308.4L570.2 320.0L562.4 320.0Z" fill="#6b6b6b"/>
<path d="M573.1 314.6L576.2 312.3L583.4 323.4Z" fill="#6a6a6a"/>
<path d="M573.1 314.6L583.4 323.4L570.2 320.0Z" fill="#6c6c6c"/>
<path d="M576.2 312.3L592.1 313.2L588.4 316.5Z" fill="#656565"/>
<path d="M576.2 312.3L588.4 316.5L583.4 323.4Z" fill="#616161"/>
<path d="M592.1 313.2L600.9 309.0L588.4 316.5Z" fill="#848484"/>
<path d="M600.9 309.0L595.5 318.2L588.4 316.5Z" fill="#7c7c7c"/>
<path d="M600.9 309.0L610.2 309.2L595.5 318.2Z" fill="#828282"/>
<path d="M610.2 309.2L606.5 318.0L595.5 318.2Z" fill="#7b7b7b"/>
<path d="M610.2 309.2L612.0 307.9L606.5 318.0Z" fill="#939393"/>
<path d="M612.0 307.9L614.7 316.5L606.5 318.0Z" fill="#919191"/>
<path d="M612.0 307.9L624.0 310.0L614.7 316.5Z" fill="#8b8b8b"/>
<path d="M624.0 310.0L625.1 320.0L614.7 316.5Z" fill="#8d8d8d"/>
<path d="M624.0 310.0L632.2 310.9L625.1 320.0Z" fill="#646464"/>
<path d="M632.2 310.9L631.7 321.0L625.1 320.0Z" fill="#6a6a6a"/>
<path d="M632.2 310.9L642.9 307.9L647.0 323.6Z" fill="#616161"/>
<path d="M632.2 310.9L647.0 323.6L631.7 321.0Z" fill="#696969"/>
<path d="M562.4 320.0L570.2 320.0L570.4 325.5Z" fill="#6a6a6a"/>
<path d="M562.4 320.0L570.4 325.5L561.0 325.5Z" fill="#6c6c6c"/>
<path d="M570.2 320.0L583.4 323.4L570.4 325.5Z" fill="#636363"/>
<path d="M583.4 323.4L580.2 329.2L570.4 325.5Z" fill="#606060"/>
<path d="M583.4 323.4L588.4 316.5L580.2 329.2Z" fill="#666666"/>
<path d="M588.4 316.5L587.5 325.9L580.2 329.2Z" fill="#6b6b6b"/>
<path d="M588.4 316.5L595.5 318.2L587.5 325.9Z" fill="#606060"/>
<path d="M595.5 318.2L597.8 328.8L587.5 325.9Z" fill="#616161"/>
<path d="M595.5 318.2L606.5 318.0L597.8 328.8Z" fill="#626262"/>
<path d="M606.5 318.0L610.6 331.4L597.8 328.8Z" fill="#616161"/>
<path d="M606.5 318.0L614.7 316.5L610.6 331.4Z" fill="#888888"/>
<path d="M614.7 316.5L613.0 331.6L610.6 331.4Z" fill="#8a8a8a"/>
<path d="M614.7 316.5L625.1 320.0L626.1 325.8Z" fill="#8c8c8c"/>
<path d="M614.7 316.5L626.1 325.8L613.0 331.6Z" fill="#939393"/>
<path d="M625.1 320.0L631.7 321.0L626.1 325.8Z" fill="#636363"/>
<path d="M631.7 321.0L632.2 331.4L626.1 325.8Z" fill="#606060"/>
<path d="M631.7 321.0L647.0 323.6L639.5 330.7Z" fill="#616161"/>
<path d="M631.7 321.0L639.5 330.7L632.2 331.4Z" fill="#616161"/>
<path d="M561.0 325.5L570.4 325.5L561.8 336.1Z" fill="#626262"/>
<path d="M570.4 325.5L571.1 339.1L561.8 336.1Z" fill="#676767"/>
<path d="M570.4 325.5L580.2 329.2L582.5 341.4Z" fill="#686868"/>
<path d="M570.4 325.5L582.5 341.4L571.1 339.1Z" fill="#656565"/>
<path d="M580.2 329.2L587.5 325.9L590.2 339.6Z" fill="#666666"/>
<path d="M580.2 329.2L590.2 339.6L582.5 341.4Z" fill="#6b6b6b"/>
<path d="M587.5 325.9L597.8 328.8L594.2 339.3Z" fill="#646464"/>
<path d="M587.5 325.9L594.2 339.3L590.2 339.6Z" fill="#656565"/>
<path d="M597.8 328.8L610.6 331.4L609.2 339.4Z" fill="#616161"/>
<path d="M597.8 328.8L609.2 339.4L594.2 339.3Z" fill="#646464"/>
<path d="M610.6 331.4L613.0 331.6L613.1 337.0Z" fill="#616161"/>
<path d="M610.6 331.4L613.1 337.0L609.2 339.4Z" fill="#616161"/>
<path d="M613.0 331.6L626.1 325.8L613.1 337.0Z" fill="#939393"/>
<path d="M626.1 325.8L624.1 341.2L613.1 337.0Z" fill="#8c8c8c"/>
<path d="M626.1 325.8L632.2 331.4L632.6 334.4Z" fill="#6b6b6b"/>
<path d="M626.1 325.8L632.6 334.4L624.1 341.2Z" fill="#656565"/>
<path d="M632.2 331.4L639.5 330.7L645.9 339.4Z" fill="#676767"/>
<path d="M632.2 331.4L645.9 339.4L632.6 334.4Z" fill="#626262"/>
<path d="M561.8 336.1L571.1 339.1L567.1 346.8Z" fill="#686868"/>
<path d="M561.8 336.1L567.1 346.8L563.2 348.7Z" fill="#6c6c6c"/>
<path d="M571.1 339.1L582.5 341.4L581.8 346.7Z" fill="#626262"/>
<path d="M571.1 339.1L581.8 346.7L567.1 346.8Z" fill="#6b6b6b"/>
<path d="M582.5 341.4L590.2 339.6L591.8 345.4Z" fill="#646464"/>
<path d="M582.5 341.4L591.8 345.4L581.8 346.7Z" fill="#6b6b6b"/>
<path d="M590.2 339.6L594.2 339.3L601.9 349.8Z" fill="#646464"/>
<path d="M590.2 339.6L601.9 349.8L591.8 345.4Z" fill="#6c6c6c"/>
<path d="M594.2 339.3L609.2 339.4L605.4 345.6Z" fill="#676767"/>
<path d="M594.2 339.3L605.4 345.6L601.9 349.8Z" fill="#616161"/>
<path d="M609.2 339.4L613.1 337.0L613.6 343.6Z" fill="#626262"/>
<path d="M609.2 339.4L613.6 343.6L605.4 345.6Z" fill="#636363"/>
<path d="M613.1 337.0L624.1 341.2L613.6 343.6Z" fill="#8f8f8f"/>
<path d="M624.1 341.2L621.2 344.4L613.6 343.6Z" fill="#6c6c6c"/>
<path d="M624.1 341.2L632.6 334.4L632.9 347.0Z" fill="#636363"/>
<path d="M624.1 341.2L632.9 347.0L621.2 344.4Z" fill="#696969"/>
<path d="M632.6 334.4L645.9 339.4L639.5 346.1Z" fill="#6a6a6a"/>
<path d="M632.6 334.4L639.5 346.1L632.9 347.0Z" fill="#676767"/>
<path d="M563.2 348.7L567.1 346.8L564.9 358.1Z" fill="#626262"/>
<path d="M567.1 346.8L572.4 353.8L564.9 358.1Z" fill="#606060"/>
<path d="M567.1 346.8L581.8 346.7L583.3 353.6Z" fill="#696969"/>
<path d="M567.1 346.8L583.3 353.6L572.4 353.8Z" fill="#636363"/>
<path d="M581.8 346.7L591.8 345.4L588.8 354.6Z" fill="#6a6a6a"/>
<path d="M581.8 346.7L588.8 354.6L583.3 353.6Z" fill="#676767"/>
<path d="M591.8 345.4L601.9 349.8L600.3 354.2Z" fill="#646464"/>
<path d="M591.8 345.4L600.3 354.2L588.8 354.6Z" fill="#686868"/>
<path d="M601.9 349.8L605.4 345.6L610.8 358.2Z" fill="#686868"/>
<path d="M601.9 349.8L610.8 358.2L600.3 354.2Z" fill="#656565"/>
<path d="M605.4 345.6L613.6 343.6L610.8 358.2Z" fill="#606060"/>
<path d="M613.6 343.6L612.2 353.5L610.8 358.2Z" fill="#636363"/>
<path d="M613.6 343.6L621.2 344.4L612.2 353.5Z" fill="#636363"/>
<path d="M621.2 344.4L624.3 357.8L612.2 353.5Z" fill="#686868"/>
<path d="M621.2 344.4L632.9 347.0L634.6 358.3Z" fill="#6a6a6a"/>
<path d="M621.2 344.4L634.6 358.3L624.3 357.8Z" fill="#6b6b6b"/>
<path d="M632.9 347.0L639.5 346.1L634.6 358.3Z" fill="#696969"/>
<path d="M639.5 346.1L640.9 358.8L634.6 358.3Z" fill="#636363"/>
<path d="M564.9 358.1L572.4 353.8L559.2 367.6Z" fill="#636363"/>
<path d="M572.4 353.8L571.9 364.9L559.2 367.6Z" fill="#646464"/>
<path d="M572.4 353.8L583.3 353.6L571.9 364.9Z" fill="#646464"/>
<path d="M583.3 353.6L580.4 364.2L571.9 364.9Z" fill="#626262"/>
<path d="M583.3 353.6L588.8 354.6L587.1 365.6Z" fill="#636363"/>
<path d="M583.3 353.6L587.1 365.6L580.4 364.2Z" fill="#676767"/>
<path d="M588.8 354.6L600.3 354.2L587.1 365.6Z" fill="#6b6b6b"/>
<path d="M600.3 354.2L596.2 364.4L587.1 365.6Z" fill="#6b6b6b"/>
<path d="M600.3 354.2L610.8 358.2L596.2 364.4Z" fill="#6b6b6b"/>
<path d="M610.8 358.2L610.3 369.1L596.2 364.4Z" fill="#6c6c6c"/>
<path d="M610.8 358.2L612.2 353.5L610.3 369.1Z" fill="#666666"/>
<path d="M612.2 353.5L613.0 363.7L610.3 369.1Z" fill="#656565"/>
<path d="M612.2 353.5L624.3 357.8L613.0 363.7Z" fill="#646464"/>
<path d="M624.3 357.8L627.1 362.4L613.0 363.7Z" fill="#606060"/>
<path d="M624.3 357.8L634.6 358.3L627.1 362.4Z" fill="#656565"/>
<path d="M634.6 358.3L633.4 361.7L627.1 362.4Z" fill="#616161"/>
<path d="M634.6 358.3L640.9 358.8L645.6 367.4Z" fill="#656565"/>
<path d="M634.6 358.3L645.6 367.4L633.4 361.7Z" fill="#686868"/>
<g stroke="#5e5e5e" stroke-opacity="0.35" stroke-width="0.5" fill="none">
<path d="M563.7 274.5L567.6 286.0"/>
<path d="M567.9 278.7L580.3 280.6"/>
<path d="M586.3 278.7L599.8 285.3"/>
<path d="M596.3 274.2L607.1 287.2"/>
<path d="M605.7 278.8L619.4 283.7"/>
<path d="M580.3 280.6L591.3 289.9"/>
<path d="M585.6 284.6L595.6 291.9"/>
<path d="M628.2 282.1L635.3 291.6"/>
<path d="M561.8 304.8L573.1 314.6"/>
<path d="M567.4 300.1L576.2 312.3"/>
<path d="M585.5 300.4L600.9 309.0"/>
<path d="M610.5 300.9L612.0 307.9"/>
<path d="M565.3 308.4L570.2 320.0"/>
<path d="M576.2 312.3L588.4 316.5"/>
<path d="M612.0 307.9L625.1 320.0"/>
<path d="M632.2 310.9L647.0 323.6"/>
<path d="M588.4 316.5L597.8 328.8"/>
<path d="M631.7 321.0L639.5 330.7"/>
<path d="M587.5 325.9L594.2 339.3"/>
<path d="M582.5 341.4L591.8 345.4"/>
<path d="M624.1 341.2L632.9 347.0"/>
<path d="M632.6 334.4L639.5 346.1"/>
<path d="M591.8 345.4L600.3 354.2"/>
<path d="M583.3 353.6L587.1 365.6"/>
<path d="M634.6 358.3L645.6 367.4"/>
</g>
</g>
<polygon points="577.5,298.2 588.8,284.1 609.4,290.7 622.5,298.2 628.2,330.0 622.0,342.0 615.0,350.7 596.3,348.8 575.6,339.5 571.0,311.3" fill="none" stroke="#6a6a6a" stroke-width="0.7" stroke-opacity="0.8"/>
<g stroke="#5a5a5a" stroke-opacity="0.7" stroke-width="0.7" fill="none" stroke-linejoin="round"><path d="M519.5 196.3 L508 210 L497 222 L490 238 L481 256 L470 272 L452 290 L436 303 L425 318"/><path d="M519.5 196.3 L533 212 L552 228 L578 246 L600 262 L616 282"/><path d="M427 262 L445 268 L462 262 L480 266 L495 280 L497 298"/><path d="M418 330 L432 318 L446 300 L462 296 L470 305 L458 322 L446 338 L432 352"/><path d="M470 305 L482 315 L490 335 L486 355"/><path d="M436 245 L452 250 L468 246 L485 250"/><path d="M545 300 L560 280 L570 262 L575 245"/></g>
<g>
<path d="M424 362 Q428 357 434 359 Q439 361 437.5 367 Q435 373 431 373.5 Q425 371 423 366Z" fill="#3c3c3c"/>
<path d="M441 351 Q446 346.5 453 347.5 Q461 349 463.5 356 Q464 364 457 368 Q449 369.5 444 365 Q439 359 441 351Z" fill="#3c3c3c"/>
<circle cx="429.2" cy="359.7" r="1.1" fill="#555"/><circle cx="425.0" cy="368.3" r="1.3" fill="#2e2e2e"/><circle cx="435.5" cy="365.9" r="1.0" fill="#555"/><circle cx="436.3" cy="367.0" r="1.5" fill="#2e2e2e"/><circle cx="431.2" cy="362.8" r="1.2" fill="#4a4a4a"/><circle cx="427.3" cy="363.0" r="1.0" fill="#4a4a4a"/><circle cx="430.9" cy="371.6" r="1.4" fill="#4a4a4a"/><circle cx="430.6" cy="360.9" r="1.5" fill="#2e2e2e"/><circle cx="429.3" cy="364.6" r="1.1" fill="#555"/><circle cx="431.9" cy="368.1" r="1.4" fill="#555"/><circle cx="425.7" cy="369.5" r="1.1" fill="#2e2e2e"/><circle cx="428.8" cy="360.5" r="1.2" fill="#2e2e2e"/><circle cx="433.3" cy="360.6" r="1.5" fill="#2e2e2e"/><circle cx="435.8" cy="363.8" r="1.4" fill="#555"/><circle cx="435.7" cy="367.3" r="1.6" fill="#555"/><circle cx="433.9" cy="364.1" r="1.5" fill="#4a4a4a"/><circle cx="431.8" cy="363.6" r="1.2" fill="#4a4a4a"/><circle cx="431.7" cy="366.2" r="1.5" fill="#2e2e2e"/>
<circle cx="457.7" cy="358.8" r="1.1" fill="#555"/><circle cx="451.8" cy="354.4" r="1.5" fill="#4a4a4a"/><circle cx="449.5" cy="363.6" r="1.2" fill="#4a4a4a"/><circle cx="445.4" cy="351.4" r="1.2" fill="#4a4a4a"/><circle cx="446.7" cy="365.1" r="1.6" fill="#555"/><circle cx="449.6" cy="356.9" r="1.7" fill="#555"/><circle cx="453.7" cy="356.8" r="1.3" fill="#4a4a4a"/><circle cx="458.0" cy="352.9" r="1.2" fill="#2e2e2e"/><circle cx="442.3" cy="355.6" r="1.5" fill="#555"/><circle cx="459.0" cy="364.4" r="1.3" fill="#2e2e2e"/><circle cx="451.0" cy="357.6" r="1.3" fill="#2e2e2e"/><circle cx="458.0" cy="361.5" r="1.6" fill="#555"/><circle cx="449.4" cy="361.0" r="1.4" fill="#555"/><circle cx="457.4" cy="359.8" r="1.3" fill="#555"/><circle cx="445.7" cy="363.3" r="1.2" fill="#4a4a4a"/><circle cx="450.3" cy="362.6" r="1.7" fill="#555"/><circle cx="443.2" cy="358.4" r="1.5" fill="#2e2e2e"/><circle cx="458.4" cy="365.2" r="1.6" fill="#555"/><circle cx="452.5" cy="358.7" r="1.4" fill="#555"/><circle cx="452.6" cy="349.3" r="1.1" fill="#4a4a4a"/><circle cx="458.5" cy="360.2" r="1.6" fill="#555"/><circle cx="450.1" cy="350.4" r="1.4" fill="#2e2e2e"/><circle cx="458.8" cy="355.2" r="1.1" fill="#2e2e2e"/><circle cx="450.8" cy="358.4" r="1.4" fill="#2e2e2e"/><circle cx="451.7" cy="362.4" r="1.2" fill="#4a4a4a"/><circle cx="450.7" cy="356.8" r="1.6" fill="#2e2e2e"/><circle cx="454.9" cy="356.2" r="1.4" fill="#2e2e2e"/><circle cx="453.0" cy="366.4" r="1.4" fill="#2e2e2e"/><circle cx="455.3" cy="355.9" r="1.5" fill="#555"/><circle cx="457.1" cy="361.8" r="1.5" fill="#555"/><circle cx="450.7" cy="366.5" r="1.1" fill="#555"/><circle cx="458.0" cy="356.0" r="1.6" fill="#2e2e2e"/><circle cx="457.9" cy="354.0" r="1.1" fill="#4a4a4a"/><circle cx="444.2" cy="359.8" r="1.2" fill="#555"/><circle cx="452.5" cy="353.9" r="1.2" fill="#2e2e2e"/><circle cx="455.9" cy="354.3" r="1.2" fill="#4a4a4a"/><circle cx="454.2" cy="361.2" r="1.1" fill="#2e2e2e"/><circle cx="449.5" cy="356.5" r="1.1" fill="#4a4a4a"/><circle cx="445.6" cy="358.7" r="1.4" fill="#555"/><circle cx="458.3" cy="355.9" r="1.3" fill="#2e2e2e"/>
</g>
<g>
<path d="M480 386 Q481 380 488 379.5 Q497 379 505 382 Q508 388 506 395 Q500 398 490 397.5 Q483 396 481 391Z" fill="#9a9a9a"/>
<path d="M518 396 Q520 391.5 526 391.5 Q533 392.5 534 397 Q532 400.5 525 400.5 Q519 400 518 396Z" fill="#999"/>
<path d="M534 389 Q536 386.5 541 386.8 Q545 388 545 392 Q543 395.6 538 395.5 Q534 394 534 389Z" fill="#9c9c9c"/>
<circle cx="485.1" cy="388.2" r="0.8" fill="#777"/><circle cx="489.5" cy="381.0" r="0.8" fill="#b0b0b0"/><circle cx="492.4" cy="384.4" r="1.1" fill="#8a8a8a"/><circle cx="490.0" cy="390.1" r="1.1" fill="#8a8a8a"/><circle cx="503.0" cy="390.3" r="1.0" fill="#b0b0b0"/><circle cx="485.2" cy="383.0" r="1.3" fill="#b0b0b0"/><circle cx="490.1" cy="386.7" r="1.1" fill="#8a8a8a"/><circle cx="491.9" cy="380.8" r="1.1" fill="#777"/><circle cx="490.0" cy="384.4" r="1.1" fill="#b0b0b0"/><circle cx="490.2" cy="384.7" r="1.1" fill="#777"/><circle cx="489.5" cy="390.2" r="0.9" fill="#777"/><circle cx="502.8" cy="384.0" r="0.9" fill="#8a8a8a"/><circle cx="485.2" cy="389.2" r="1.1" fill="#b0b0b0"/><circle cx="501.3" cy="389.2" r="1.1" fill="#b0b0b0"/><circle cx="486.9" cy="389.1" r="1.1" fill="#b0b0b0"/><circle cx="483.0" cy="385.6" r="1.0" fill="#777"/><circle cx="488.0" cy="391.3" r="1.1" fill="#8a8a8a"/><circle cx="492.0" cy="392.6" r="0.9" fill="#b0b0b0"/><circle cx="492.6" cy="387.8" r="0.9" fill="#777"/><circle cx="492.7" cy="386.0" r="0.9" fill="#b0b0b0"/><circle cx="498.0" cy="389.8" r="1.3" fill="#8a8a8a"/><circle cx="495.6" cy="387.3" r="1.1" fill="#777"/><circle cx="495.5" cy="387.6" r="1.0" fill="#777"/><circle cx="496.5" cy="394.8" r="1.0" fill="#8a8a8a"/><circle cx="502.2" cy="392.6" r="1.1" fill="#777"/><circle cx="494.7" cy="388.3" r="0.9" fill="#777"/><circle cx="499.0" cy="389.5" r="1.1" fill="#8a8a8a"/><circle cx="496.1" cy="390.2" r="0.9" fill="#777"/><circle cx="485.7" cy="394.5" r="1.0" fill="#777"/><circle cx="500.2" cy="387.9" r="1.0" fill="#b0b0b0"/>
<circle cx="521.7" cy="396.9" r="1.1" fill="#777"/><circle cx="525.3" cy="394.6" r="1.1" fill="#777"/><circle cx="527.4" cy="393.1" r="0.9" fill="#777"/><circle cx="521.3" cy="393.4" r="0.9" fill="#aaa"/><circle cx="526.4" cy="395.8" r="1.0" fill="#aaa"/><circle cx="523.1" cy="394.8" r="0.9" fill="#aaa"/><circle cx="526.7" cy="396.5" r="0.9" fill="#777"/><circle cx="525.1" cy="394.8" r="0.9" fill="#777"/><circle cx="531.0" cy="394.5" r="1.0" fill="#777"/><circle cx="522.3" cy="398.5" r="0.9" fill="#777"/><circle cx="525.4" cy="393.7" r="1.1" fill="#aaa"/><circle cx="530.7" cy="394.7" r="1.1" fill="#aaa"/>
<circle cx="541.3" cy="394.7" r="0.9" fill="#777"/><circle cx="540.6" cy="387.5" r="0.7" fill="#aaa"/><circle cx="539.6" cy="389.2" r="0.7" fill="#aaa"/><circle cx="541.5" cy="389.0" r="0.9" fill="#aaa"/><circle cx="542.8" cy="390.8" r="0.7" fill="#777"/><circle cx="539.7" cy="388.1" r="0.8" fill="#aaa"/><circle cx="535.2" cy="392.7" r="0.8" fill="#777"/><circle cx="541.4" cy="392.7" r="0.8" fill="#777"/><circle cx="535.2" cy="392.5" r="0.6" fill="#aaa"/><circle cx="536.9" cy="391.7" r="0.8" fill="#777"/>
</g>
<rect x="502.4" y="357.6" width="23.4" height="21.3" fill="#5f4c38"/><rect x="502.4" y="375.8" width="23.4" height="3.1" fill="#4c3d2e"/><rect x="504.5" y="378.9" width="18.4" height="13.4" fill="#a69d90"/><rect x="511.2" y="385.6" width="5" height="7" fill="#3a2a22"/><rect x="512" y="356.3" width="4.6" height="7.5" fill="#c5bdb2"/><path d="M514.1 348.4 L517.4 353 L517 356.7 H511.3 L511 353Z" fill="#5a4836"/>
</g>
<g id="mtnmask" fill="#000" fill-opacity="0.13"><polygon points="328.5,309.5 333.0,296.0 338.0,281.0 346.0,270.0 354.0,261.0 364.5,254.5 371.0,262.0 380.0,270.0 389.5,272.0 403.0,273.5 417.7,276.7 428.7,287.6 425.5,301.7 417.7,309.5 416.5,322.0 416.0,333.0 413.0,344.0 395.0,346.5 375.0,346.0 355.0,344.5 339.5,341.0 331.0,333.0 329.5,321.0"/><polygon points="416.4,304.8 426.0,276.0 427.2,249.6 438.0,240.0 457.1,232.8 469.1,219.6 478.7,218.4 488.3,224.4 502.7,211.2 519.5,196.3 531.5,204.0 543.5,216.0 557.9,224.4 572.3,228.0 593.9,240.0 610.7,254.4 622.7,276.0 628.7,290.4 629.9,314.4 629.9,333.6 622.7,350.4 615.5,362.3 605.9,369.5 581.9,376.7 545.9,377.9 509.9,379.1 473.9,377.9 457.1,374.3 442.7,367.1 428.4,357.5 418.8,343.1 415.2,324.0"/></g>
</defs>
</svg>

<!-- left window edge -->
<div style="position:absolute;left:0;top:0;width:2px;height:959px;background:#fdfdfd"></div>
<div style="position:absolute;left:2px;top:0;width:1px;height:959px;background:#e2e2e2"></div>
<div style="position:absolute;left:3px;top:0;width:14px;height:959px;background:linear-gradient(90deg,#efefef,#fafafa)"></div>

<!-- top left panel -->
<div class="panel" style="left:18px;top:8px;width:277px;height:57px"></div>
<div class="a" style="left:86px;top:17px;font-size:15px;font-weight:bold;letter-spacing:-0.5px;color:#111">Untitled</div>
<div class="a" style="left:86px;top:41px;font-size:13.5px;font-weight:bold;letter-spacing:-0.7px;color:#6b6b6b">Scene 1</div>

<!-- center toolbar -->
<div class="panel" style="left:740px;top:8px;width:205px;height:57px"></div>
<div style="position:absolute;left:836px;top:17px;width:100px;height:39px;background:#efefef;border-radius:10px;border:1px solid #e0e0e0;box-shadow:0 1px 2px rgba(0,0,0,.13)"></div>
<div class="a" style="left:872px;top:31px;font-size:13.5px;font-weight:bold;letter-spacing:-0.3px;color:#111">Visualize</div>

<!-- right toolbar -->
<div class="panel" style="left:1376px;top:8px;width:291px;height:57px"></div>
<div style="position:absolute;left:1386px;top:23px;width:29px;height:29px;border-radius:50%;background:#1a1d28;overflow:hidden">
 <svg width="29" height="29" style="position:absolute;left:0;top:0"><path d="M3 25 Q15 17 29 14" stroke="#2b4a5a" stroke-width="0.5" stroke-opacity="0.6" fill="none"/><path d="M4 27 Q16 22 29 21" stroke="#5a4030" stroke-width="0.5" stroke-opacity="0.6" fill="none"/><path d="M10 2 Q7 12 5 22" stroke="#2e2a40" stroke-width="0.5" stroke-opacity="0.6" fill="none"/></svg>
</div>
<div class="a" style="left:1500px;top:30px;font-size:15.5px;font-weight:bold;color:#111">200</div>
<div style="position:absolute;left:1586px;top:17px;width:73px;height:40px;border-radius:10px;background:linear-gradient(#e5e5e5,#dbdbdb);border:1px solid #cdcdcd;box-shadow:0 1px 2px rgba(0,0,0,.12)"></div>
<div class="a" style="left:1603px;top:30px;font-size:15.3px;font-weight:bold;letter-spacing:-0.85px;color:#111">Share</div>

<!-- black stage -->
<div style="position:absolute;left:18px;top:75px;width:1648px;height:678px;background:#000;border-radius:16px"></div>
<div style="position:absolute;left:26px;top:110px;width:976px;height:549px;background:#1f1f1f;border-radius:12px;overflow:hidden">
  <svg width="976" height="549" style="position:absolute;left:0;top:0"><use href="#scene" transform="translate(-26,-110)"/></svg>
</div>

<!-- thumb -->
<div style="position:absolute;left:1010px;top:101px;width:160px;height:89px;background:#1f1f1f;border:2px solid #3dbb4c;border-radius:10px;overflow:hidden">
  <svg width="156" height="85" style="position:absolute;left:0;top:0"><use href="#scene" transform="translate(-4.4,-19.1) scale(0.16)"/></svg>
</div>

<!-- edit shot -->
<div style="position:absolute;left:25px;top:692px;width:94px;height:42px;background:#232323;border-radius:11px;border:1px solid #333;border-top-color:#3c3c3c"></div>
<div class="a" style="left:42px;top:707px;font-size:14.5px;font-weight:bold;letter-spacing:-0.45px;color:#fff">Edit Shot</div>

<!-- prompt panel -->
<div style="position:absolute;left:1177px;top:82px;width:482px;height:664px;background:#fbfbfb;border-radius:20px"></div>
<div class="a" style="left:1218px;top:95px;font-size:14.5px;color:#111">Prompt</div>
<div class="a" style="left:1567px;top:95px;font-size:14.5px;color:#111">Auto</div>
<div style="position:absolute;left:1610px;top:91px;width:40px;height:22px;border-radius:11px;background:#5a5a5a"></div>
<div style="position:absolute;left:1630.5px;top:92.5px;width:17.5px;height:17.5px;border-radius:50%;background:#f5f5f5"></div>
<div style="position:absolute;left:1186px;top:121px;width:464px;height:207px;background:#efefef;border-radius:12px;overflow:hidden">
  <div class="pt" style="left:9px;top:12px;letter-spacing:0.063px">[Scene Context]: A wide-angle, high-altitude view of a solitary chapel</div>
  <div class="pt" style="left:9px;top:32px;letter-spacing:-0.075px">nestled at the base of a massive, jagged mountain range.</div>
  <div class="pt" style="left:9px;top:72px;letter-spacing:-0.055px">[Subjects]: None.</div>
  <div class="pt" style="left:9px;top:112px;letter-spacing:-0.071px">[Environment &amp; Props]: In the foreground, a vast, flat snow ground</div>
  <div class="pt" style="left:9px;top:132px;letter-spacing:-0.052px">stretches out. In the center, a small chapel main building with a chapel</div>
  <div class="pt" style="left:9px;top:152px;letter-spacing:-0.031px">roof sits at the base of a towering main peak. To the left of the chapel,</div>
  <div class="pt" style="left:9px;top:172px;letter-spacing:-0.05px">two alpine trees stand near the base of the mountain. Behind the main</div>
  <div class="pt" style="left:9px;top:192px;letter-spacing:-0.052px">peak, a background mountain and a left mountain rise into the</div>
</div>
<div style="position:absolute;left:1186px;top:322px;width:464px;height:6px;background:#efefef;border-radius:0 0 12px 12px"></div>

<div class="lbl" style="top:351px">Media</div>
<div class="sel" style="top:337px"></div><div class="val" style="top:352px">Image</div>
<div class="lbl" style="top:399px">Model</div>
<div class="sel" style="top:384px;left:1313px;width:338px;height:41px;border-radius:13px"></div><div class="val" style="top:400px;left:1322px;letter-spacing:-0.2px">Nano Banana Pro</div>
<div class="lbl" style="top:447px">Style</div>
<div class="sel" style="top:432px"></div><div class="val" style="top:448px">Photograph</div>
<div class="lbl" style="top:495px">Resolution</div>
<div class="sel" style="top:481px"></div><div class="val" style="top:496px">1K</div>

<div style="position:absolute;left:1185px;top:696px;width:426px;height:42px;background:#262626;border-radius:12px;box-shadow:0 1px 2px rgba(0,0,0,.25)"></div>
<div class="a" style="left:1345px;top:710px;font-size:15.5px;font-weight:bold;letter-spacing:-0.85px;color:#fff">Generate Image</div>

<!-- scenes strip -->
<div style="position:absolute;left:0;top:953px;width:1674px;height:6px;background:linear-gradient(#e9e9e9,#f1f1f1 2px,#f2f2f2)"></div>
<div class="panel" style="left:18px;top:789px;width:1649px;height:165px;border-radius:22px"></div>
<div style="position:absolute;left:26px;top:798px;width:848px;height:147px;background:#d6ebd9;border:2px solid #3aae4e;border-radius:10px"></div>
<div class="a" style="left:34px;top:813px;font-size:15px;letter-spacing:-0.75px;color:#111">Scene 1</div>

<div class="shot" style="left:34px;width:160px;height:90px;border:2px solid #3ab54a;background:#fff;border-radius:13px">
  <div style="position:absolute;left:1px;top:1px;width:154px;height:84px;border-radius:11px;overflow:hidden;background:#1f1f1f">
    <svg width="154" height="84" style="filter:brightness(1.07)"><use href="#scene" transform="translate(-60.9,-32) scale(0.27)"/></svg>
  </div>
</div>
<div class="shot" style="left:202px"><svg width="158" height="89"><use href="#scene" transform="translate(-213,-145) scale(0.57)"/><use href="#mtnmask" transform="translate(-213,-145) scale(0.57)"/><path d="M24 0H53L51 9H26Z" fill="#1f1f1f"/><path d="M114 0H158V12H124Z" fill="#1f1f1f"/></svg></div>
<div class="shot" style="left:370px"><svg width="158" height="89"><use href="#scene" transform="translate(-213,-145) scale(0.57)"/><use href="#mtnmask" transform="translate(-213,-145) scale(0.57)"/><path d="M24 0H53L51 9H26Z" fill="#1f1f1f"/><path d="M114 0H158V12H124Z" fill="#1f1f1f"/></svg></div>
<div class="shot" style="left:538px"><svg width="158" height="89"><use href="#scene" transform="translate(-281,-196) scale(0.7)"/><use href="#mtnmask" transform="translate(-281,-196) scale(0.7)"/></svg></div>
<div class="shot" style="left:706px"><svg width="158" height="89"><use href="#scene" transform="translate(-374,-224) scale(0.8)"/><use href="#mtnmask" transform="translate(-374,-224) scale(0.8)"/><path d="M142 0H158V16Z" fill="#1f1f1f"/></svg></div>

<div class="st" style="left:66px;top:860px">2s</div><div class="st" style="left:66px;top:912px;letter-spacing:-0.35px">Shot 1</div>
<div class="st" style="left:234px;top:860px">2s</div><div class="st" style="left:234px;top:912px;letter-spacing:-0.35px">Shot 2</div>
<div class="st" style="left:402px;top:860px">2s</div><div class="st" style="left:402px;top:912px;letter-spacing:-0.35px">Shot 3</div>
<div class="st" style="left:570px;top:860px">2s</div><div class="st" style="left:570px;top:912px;letter-spacing:-0.35px">Shot 4</div>
<div class="st" style="left:738px;top:860px">2s</div><div class="st" style="left:738px;top:912px;letter-spacing:-0.35px">Shot 5</div>

<!-- bottom-right desktop corner -->
<svg width="40" height="60" style="position:absolute;left:1634px;top:899px"><defs><linearGradient id="gbr" x1="0" y1="0" x2="0" y2="1"><stop offset="0" stop-color="#8a4030"/><stop offset="0.5" stop-color="#6e2c1a"/><stop offset="1" stop-color="#5a2012"/></linearGradient></defs><path d="M40 21 V60 H23.4 A51.7 51.7 0 0 0 39 23 Z" fill="url(#gbr)"/><path d="M23.4 60 A51.7 51.7 0 0 0 39 23" stroke="#e8e8e8" stroke-width="0.8" fill="none"/></svg>

<!-- icon overlay -->
<svg width="1674" height="959" style="position:absolute;left:0;top:0;pointer-events:none" fill="none" stroke-linecap="round" stroke-linejoin="round">
<!-- big logo -->
<g fill="#111" stroke="none">
 <circle cx="43.9" cy="26.6" r="3.75"/>
 <path d="M32 27 A12 12 0 0 0 56 27 L50.5 27 A6.5 6.5 0 0 1 37.5 27 Z"/>
 <path d="M31.8 50.8 A12.2 12.2 0 0 1 56.2 50.8 L50.4 50.8 A6.4 6.4 0 0 0 37.6 50.8 Z"/>
</g>
<path d="M61.5 34.5 L66 39 L70.5 34.5" stroke="#222" stroke-width="1.5"/>
<path d="M136.5 44.5 L141 49 L145.5 44.5" stroke="#6b6b6b" stroke-width="1.4"/>
<!-- list icon -->
<g stroke="#666" stroke-width="1.3">
 <rect x="258.7" y="29.7" width="5.6" height="5.6" rx="1"/>
 <rect x="258.7" y="38.8" width="5.6" height="5.6" rx="1"/>
 <path d="M267.3 30.3H273.9M267.3 34.5H273.9M267.3 39.3H273.9M267.3 43.6H273.9" stroke-linecap="butt"/>
</g>
<!-- pointer click -->
<g stroke="#666" stroke-width="1.4">
 <path d="M762.2 33.2 L774.6 37.5 L769.4 39.6 L766.5 45.2 Z"/>
 <path d="M763.4 28.4V30.6M758.5 29.5L760.4 31.2M768.3 29.7L766.6 31.2M757.3 34.5H759.7M758.5 39.3L760.4 37.6"/>
</g>
<!-- clapper -->
<g stroke="#666" stroke-width="1.5">
 <rect x="802" y="36.2" width="16.2" height="8.2" rx="1.6"/>
 <path d="M802 35.8 L801.5 33.4 Q801.3 32 802.8 31.4 L815.6 28.2 Q817.2 27.9 817.7 29.4 L818.3 32.2 Z"/>
 <path d="M806 30.6 L807 34.6 M810 29.6 L811 33.6 M814 28.8 L815 32.8"/>
</g>
<!-- visualize image icon -->
<rect x="846.7" y="29.7" width="14.4" height="14.6" rx="2.6" fill="#b4efbf" stroke="#4bc35a" stroke-width="1.2"/>
<path d="M847 39.8 L850.6 37.4 L856.8 43.8" stroke="#4bc35a" stroke-width="1.2"/>
<circle cx="855.9" cy="34.6" r="1.3" fill="#4bc35a" stroke="none"/>
<!-- help -->
<circle cx="1444.2" cy="36.9" r="8.6" stroke="#666" stroke-width="1.3"/>
<path d="M1441.6 34.5 A2.6 2.6 0 1 1 1445.3 36.8 Q1444.2 37.4 1444.2 38.6" stroke="#666" stroke-width="1.3"/>
<circle cx="1444.2" cy="41.2" r="0.8" fill="#666" stroke="none"/>
<!-- small logo -->
<g fill="#111" stroke="none">
 <circle cx="1484" cy="31.2" r="2.2"/>
 <path d="M1477 31.6 A7 7 0 0 0 1491 31.6 L1487.8 31.6 A3.8 3.8 0 0 1 1480.2 31.6 Z"/>
 <path d="M1477 45.1 A7 7 0 0 1 1491 45.1 L1487.8 45.1 A3.8 3.8 0 0 0 1480.2 45.1 Z"/>
</g>
<!-- play -->
<path d="M1554.6 32.1 A2.2 2.2 0 0 1 1557.9 30.1 L1565.4 34.9 A2.1 2.1 0 0 1 1565.4 38.7 L1557.9 43.5 A2.2 2.2 0 0 1 1554.6 41.5 Z" stroke="#666" stroke-width="1.6"/>
<!-- lightning -->
<path d="M1203.3 95.4 L1195.8 102.7 L1202.2 102.7 L1201 108.7 L1208.6 100.9 L1202.3 100.9 Z" stroke="#3cb44a" stroke-width="1.35"/>
<!-- resize handle -->
<path d="M1638.2 318.3 L1645.4 311.3 M1641.9 318 L1645.2 315.2" stroke="#777" stroke-width="0.9"/>
<!-- chevrons selects -->
<g stroke="#444" stroke-width="1.3">
 <path d="M1628.5 353.5 L1633 358 L1637.5 353.5"/>
 <path d="M1628.5 449.5 L1633 454 L1637.5 449.5"/>
 <path d="M1628.5 497.5 L1633 502 L1637.5 497.5"/>
</g>
<!-- generate dots -->
<g fill="#555" stroke="none"><circle cx="1629.2" cy="717" r="1.2"/><circle cx="1634" cy="717" r="1.2"/><circle cx="1638.8" cy="717" r="1.2"/></g>
<!-- heart -->
<path d="M934 721 L926.8 713.8 Q924.6 711.4 925.6 708.3 Q927 704.8 930.5 704.9 Q932.6 705 934 707 Q935.4 705 937.5 704.9 Q941 704.8 942.4 708.3 Q943.4 711.4 941.2 713.8 Z" stroke="#8c8c8c" stroke-width="1.4"/>
<!-- download -->
<g stroke="#fff" stroke-width="1.6">
 <path d="M982 704.5 V714.5 M977.2 709.8 L982 714.6 L986.8 709.8"/>
 <path d="M974.2 715 V718.8 Q974.2 720.8 976.2 720.8 H987.8 Q989.8 720.8 989.8 718.8 V715"/>
</g>
<!-- scene dots -->
<g fill="#222" stroke="none"><circle cx="845" cy="821.8" r="1.35"/><circle cx="850" cy="821.8" r="1.35"/><circle cx="855" cy="821.8" r="1.35"/></g>
<g transform="translate(0,0)">
 <circle cx="54" cy="865.9" r="6.4" stroke="#fff" stroke-width="1.4"/>
 <path d="M54 862.2 V866 L56.4 868.4" stroke="#fff" stroke-width="1.4"/>
 <g fill="#fff" stroke="none"><circle cx="169.3" cy="865.8" r="1.55"/><circle cx="174" cy="865.8" r="1.55"/><circle cx="178.7" cy="865.8" r="1.55"/></g>
 <rect x="47.6" y="911.6" width="8.6" height="10.4" rx="1.6" stroke="#fff" stroke-width="1.3"/>
 <path d="M56.4 915.6 L60.4 913.6 V920.2 L56.4 918.2" stroke="#fff" stroke-width="1.3"/>
</g>
<g transform="translate(168,0)">
 <circle cx="54" cy="865.9" r="6.4" stroke="#fff" stroke-width="1.4"/>
 <path d="M54 862.2 V866 L56.4 868.4" stroke="#fff" stroke-width="1.4"/>
 <g fill="#fff" stroke="none"><circle cx="169.3" cy="865.8" r="1.55"/><circle cx="174" cy="865.8" r="1.55"/><circle cx="178.7" cy="865.8" r="1.55"/></g>
 <rect x="47.6" y="911.6" width="8.6" height="10.4" rx="1.6" stroke="#fff" stroke-width="1.3"/>
 <path d="M56.4 915.6 L60.4 913.6 V920.2 L56.4 918.2" stroke="#fff" stroke-width="1.3"/>
</g>
<g transform="translate(336,0)">
 <circle cx="54" cy="865.9" r="6.4" stroke="#fff" stroke-width="1.4"/>
 <path d="M54 862.2 V866 L56.4 868.4" stroke="#fff" stroke-width="1.4"/>
 <g fill="#fff" stroke="none"><circle cx="169.3" cy="865.8" r="1.55"/><circle cx="174" cy="865.8" r="1.55"/><circle cx="178.7" cy="865.8" r="1.55"/></g>
 <rect x="47.6" y="911.6" width="8.6" height="10.4" rx="1.6" stroke="#fff" stroke-width="1.3"/>
 <path d="M56.4 915.6 L60.4 913.6 V920.2 L56.4 918.2" stroke="#fff" stroke-width="1.3"/>
</g>
<g transform="translate(504,0)">
 <circle cx="54" cy="865.9" r="6.4" stroke="#fff" stroke-width="1.4"/>
 <path d="M54 862.2 V866 L56.4 868.4" stroke="#fff" stroke-width="1.4"/>
 <g fill="#fff" stroke="none"><circle cx="169.3" cy="865.8" r="1.55"/><circle cx="174" cy="865.8" r="1.55"/><circle cx="178.7" cy="865.8" r="1.55"/></g>
 <rect x="47.6" y="911.6" width="8.6" height="10.4" rx="1.6" stroke="#fff" stroke-width="1.3"/>
 <path d="M56.4 915.6 L60.4 913.6 V920.2 L56.4 918.2" stroke="#fff" stroke-width="1.3"/>
</g>
<g transform="translate(672,0)">
 <circle cx="54" cy="865.9" r="6.4" stroke="#fff" stroke-width="1.4"/>
 <path d="M54 862.2 V866 L56.4 868.4" stroke="#fff" stroke-width="1.4"/>
 <g fill="#fff" stroke="none"><circle cx="169.3" cy="865.8" r="1.55"/><circle cx="174" cy="865.8" r="1.55"/><circle cx="178.7" cy="865.8" r="1.55"/></g>
 <rect x="47.6" y="911.6" width="8.6" height="10.4" rx="1.6" stroke="#fff" stroke-width="1.3"/>
 <path d="M56.4 915.6 L60.4 913.6 V920.2 L56.4 918.2" stroke="#fff" stroke-width="1.3"/>
</g>


</svg>
</body></html>
